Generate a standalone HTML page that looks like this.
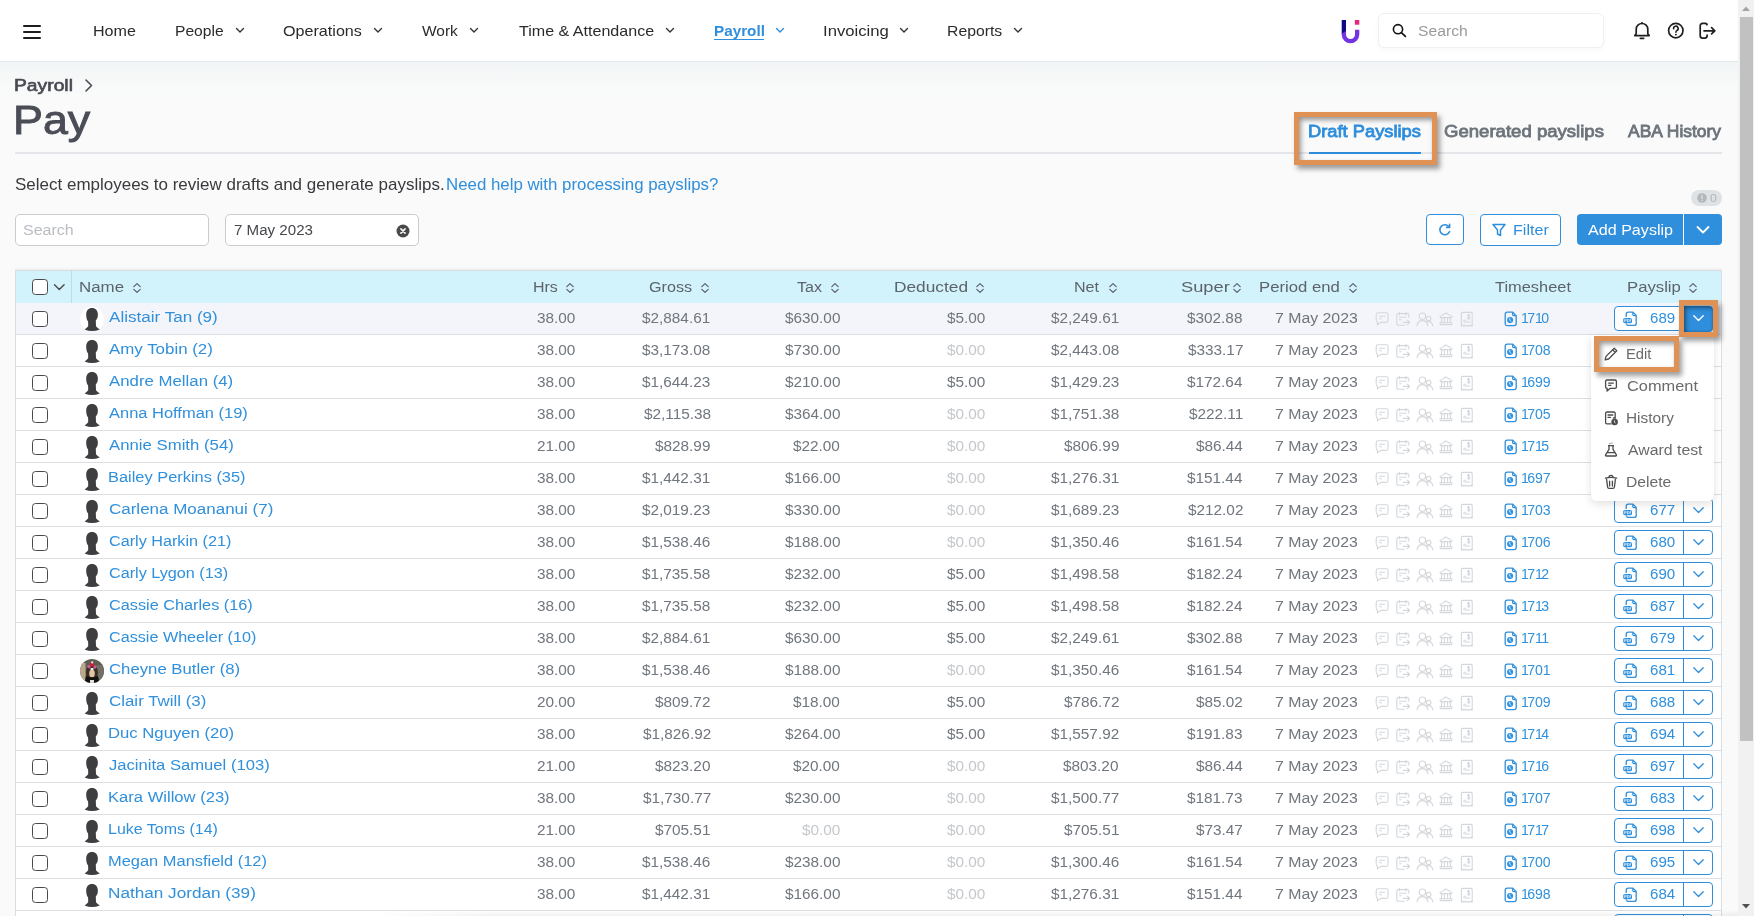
<!DOCTYPE html>
<html><head><meta charset="utf-8"><style>
html,body{margin:0;padding:0;width:1754px;height:916px;overflow:hidden;background:#fafafa}
body{position:relative;font-family:"Liberation Sans",sans-serif}
.t{position:absolute;white-space:nowrap;line-height:20px;transform-origin:0 0}
svg{overflow:visible}
</style></head><body>
<div style="position:absolute;left:0px;top:0px;width:1738px;height:916px;background:linear-gradient(180deg,#f2f5f6 62px,#f8f9f9 85px,#fafafa 110px,#fafafa 916px)"></div>
<div style="position:absolute;left:0px;top:0px;width:1738px;height:61px;background:#fff"></div>
<div style="position:absolute;left:0px;top:61px;width:1738px;height:1px;background:#e3eaee"></div>
<div style="position:absolute;left:23px;top:25px;width:18px;height:2px;background:#1c1c1e;border-radius:1px"></div>
<div style="position:absolute;left:23px;top:31px;width:18px;height:2px;background:#1c1c1e;border-radius:1px"></div>
<div style="position:absolute;left:23px;top:37px;width:18px;height:2px;background:#1c1c1e;border-radius:1px"></div>
<div class="t" style="left:93.21px;top:21.06px;font-size:15.12px;font-weight:normal;color:#2b2b2b;transform:scaleX(1.0652);">Home</div>
<div class="t" style="left:174.95px;top:21.06px;font-size:15.12px;font-weight:normal;color:#2b2b2b;transform:scaleX(1.0332);">People</div>
<svg style="position:absolute;left:235.3px;top:26px;" width="10" height="9" viewBox="0 0 10 9" fill="none"><path d="M1.5 2.5 L5 6 L8.5 2.5" stroke="#333" stroke-width="1.4" stroke-linecap="round" stroke-linejoin="round"/></svg>
<div class="t" style="left:283.47px;top:21.06px;font-size:15.12px;font-weight:normal;color:#2b2b2b;transform:scaleX(1.0673);">Operations</div>
<svg style="position:absolute;left:373.2px;top:26px;" width="10" height="9" viewBox="0 0 10 9" fill="none"><path d="M1.5 2.5 L5 6 L8.5 2.5" stroke="#333" stroke-width="1.4" stroke-linecap="round" stroke-linejoin="round"/></svg>
<div class="t" style="left:422.32px;top:21.06px;font-size:15.12px;font-weight:normal;color:#2b2b2b;transform:scaleX(1.0252);">Work</div>
<svg style="position:absolute;left:469px;top:26px;" width="10" height="9" viewBox="0 0 10 9" fill="none"><path d="M1.5 2.5 L5 6 L8.5 2.5" stroke="#333" stroke-width="1.4" stroke-linecap="round" stroke-linejoin="round"/></svg>
<div class="t" style="left:518.88px;top:21.06px;font-size:15.12px;font-weight:normal;color:#2b2b2b;transform:scaleX(1.0631);">Time &amp; Attendance</div>
<svg style="position:absolute;left:665px;top:26px;" width="10" height="9" viewBox="0 0 10 9" fill="none"><path d="M1.5 2.5 L5 6 L8.5 2.5" stroke="#333" stroke-width="1.4" stroke-linecap="round" stroke-linejoin="round"/></svg>
<div class="t" style="left:713.51px;top:20.76px;font-size:14.53px;font-weight:bold;color:#2f8fdc;transform:scaleX(1.0513);">Payroll</div>
<div style="position:absolute;left:714px;top:39px;width:50px;height:1.2px;background:#2f8fdc"></div>
<svg style="position:absolute;left:774.7px;top:26px;" width="10" height="9" viewBox="0 0 10 9" fill="none"><path d="M1.5 2.5 L5 6 L8.5 2.5" stroke="#2f8fdc" stroke-width="1.4" stroke-linecap="round" stroke-linejoin="round"/></svg>
<div class="t" style="left:823.20px;top:21.06px;font-size:15.12px;font-weight:normal;color:#2b2b2b;transform:scaleX(1.1049);">Invoicing</div>
<svg style="position:absolute;left:899px;top:26px;" width="10" height="9" viewBox="0 0 10 9" fill="none"><path d="M1.5 2.5 L5 6 L8.5 2.5" stroke="#333" stroke-width="1.4" stroke-linecap="round" stroke-linejoin="round"/></svg>
<div class="t" style="left:947.34px;top:21.06px;font-size:15.12px;font-weight:normal;color:#2b2b2b;transform:scaleX(1.0436);">Reports</div>
<svg style="position:absolute;left:1013px;top:26px;" width="10" height="9" viewBox="0 0 10 9" fill="none"><path d="M1.5 2.5 L5 6 L8.5 2.5" stroke="#333" stroke-width="1.4" stroke-linecap="round" stroke-linejoin="round"/></svg>
<svg style="position:absolute;left:1339px;top:18px;" width="24" height="28" viewBox="0 0 24 28" fill="none"><rect x="2.7" y="2" width="4.3" height="14" fill="#0d0b82"/><path d="M2.7 15.5 L2.7 16.5 A8.8 8.8 0 0 0 20.3 16.5 L20.3 11.8 L16 11.8 L16 16.5 A4.5 4.5 0 0 1 7 16.5 L7 13 Z" fill="#7433e0"/><rect x="15.8" y="2" width="4.5" height="4.7" fill="#e6287a"/></svg>
<div style="position:absolute;left:1377.5px;top:13.3px;width:226.9px;height:34.5px;box-sizing:border-box;border:1px solid #eef0f2;border-radius:6px;background:#fff;box-shadow:0 2px 6px rgba(0,0,0,0.03)"></div>
<svg style="position:absolute;left:1391px;top:22px;" width="17" height="17" viewBox="0 0 17 17" fill="none"><circle cx="7" cy="7.2" r="4.6" stroke="#111" stroke-width="1.6"/><path d="M10.4 10.6 L14.4 14.4" stroke="#111" stroke-width="1.7" stroke-linecap="round"/></svg>
<div class="t" style="left:1417.79px;top:20.86px;font-size:14.83px;font-weight:normal;color:#9a9a9a;transform:scaleX(1.0576);">Search</div>
<svg style="position:absolute;left:1632px;top:20px;" width="20" height="21" viewBox="0 0 20 21" fill="none"><path d="M4.2 13.8 L4.2 9.3 A5.8 5.8 0 0 1 15.8 9.3 L15.8 13.8 L17.2 15.6 L2.8 15.6 Z" stroke="#1f1f1f" stroke-width="1.7" stroke-linejoin="round"/><path d="M8.3 18.4 L11.7 18.4" stroke="#1f1f1f" stroke-width="1.6" stroke-linecap="round"/><circle cx="10" cy="3.2" r="1.1" fill="#1f1f1f"/></svg>
<svg style="position:absolute;left:1666px;top:21px;" width="20" height="20" viewBox="0 0 20 20" fill="none"><circle cx="9.8" cy="9.6" r="7.2" stroke="#1f1f1f" stroke-width="1.7"/><path d="M7.6 7.8 A2.3 2.3 0 1 1 10.8 9.6 C10 10 9.9 10.5 9.9 11.3" stroke="#1f1f1f" stroke-width="1.6" stroke-linecap="round" fill="none"/><circle cx="9.9" cy="13.6" r="0.95" fill="#1f1f1f"/></svg>
<svg style="position:absolute;left:1698px;top:21px;" width="20" height="20" viewBox="0 0 20 20" fill="none"><path d="M8.8 3.6 L8 2.4 L4.5 2.4 A2.3 2.3 0 0 0 2.2 4.7 L2.2 14.8 A2.3 2.3 0 0 0 4.5 17.1 L6.8 17.1 A2.3 2.3 0 0 0 9.1 14.8 L9.1 14" stroke="#1f1f1f" stroke-width="1.7" stroke-linecap="round" stroke-linejoin="round"/><path d="M8.8 4.2 L8.8 2.4" stroke="#1f1f1f" stroke-width="1.7"/><path d="M6 9.8 L16.8 9.8 M13.6 6.7 L16.8 9.8 L13.6 12.9" stroke="#1f1f1f" stroke-width="1.7" stroke-linecap="round" stroke-linejoin="round"/></svg>
<div class="t" style="left:13.86px;top:75.76px;font-size:15.99px;font-weight:normal;color:#474a51;transform:scaleX(1.2058);-webkit-text-stroke:0.6px #474a51;">Payroll</div>
<svg style="position:absolute;left:83px;top:78px;" width="12" height="15" viewBox="0 0 12 15" fill="none"><path d="M3 2 L8.5 7.5 L3 13" stroke="#4a4d54" stroke-width="1.6" stroke-linecap="round" stroke-linejoin="round"/></svg>
<div class="t" style="left:13.02px;top:110.00px;font-size:41.57px;font-weight:normal;color:#4a4d56;transform:scaleX(1.0778);-webkit-text-stroke:0.9px #4a4d56;">Pay</div>
<div style="position:absolute;left:15px;top:152px;width:1707px;height:1.5px;background:#e4e6e9"></div>
<div class="t" style="left:1307.93px;top:122.41px;font-size:17.01px;font-weight:normal;color:#2d8ddb;transform:scaleX(1.0770);-webkit-text-stroke:0.8px #2d8ddb;">Draft Payslips</div>
<div style="position:absolute;left:1309px;top:152px;width:112px;height:2px;background:#2d8ddb"></div>
<div class="t" style="left:1443.67px;top:122.41px;font-size:17.01px;font-weight:normal;color:#6c737b;transform:scaleX(1.0920);-webkit-text-stroke:0.8px #6c737b;">Generated payslips</div>
<div class="t" style="left:1628.40px;top:122.41px;font-size:17.01px;font-weight:normal;color:#6c737b;transform:scaleX(1.0262);-webkit-text-stroke:0.8px #6c737b;">ABA History</div>
<div style="position:absolute;left:1294px;top:112px;width:143px;height:53px;box-sizing:border-box;border:5px solid #e09254;box-shadow:3px 4px 5px rgba(0,0,0,0.38), inset 2px 3px 5px rgba(0,0,0,0.40)"></div>
<div class="t" style="left:14.84px;top:174.76px;font-size:15.99px;font-weight:normal;color:#383a3d;transform:scaleX(1.0627);">Select employees to review drafts and generate payslips.</div>
<div class="t" style="left:446.15px;top:174.76px;font-size:15.99px;font-weight:normal;color:#2f8fdc;transform:scaleX(1.0535);">Need help with processing payslips?</div>
<div style="position:absolute;left:15.3px;top:214.4px;width:193.4px;height:31.4px;box-sizing:border-box;border:1px solid #c9ccd1;border-radius:5px;background:#fff"></div>
<div class="t" style="left:23.28px;top:219.96px;font-size:14.53px;font-weight:normal;color:#b9bcc1;transform:scaleX(1.1035);">Search</div>
<div style="position:absolute;left:225.3px;top:214.4px;width:193.4px;height:31.4px;box-sizing:border-box;border:1px solid #c9ccd1;border-radius:5px;background:#fff"></div>
<div class="t" style="left:233.84px;top:219.96px;font-size:14.53px;font-weight:normal;color:#45484d;transform:scaleX(1.0410);">7 May 2023</div>
<svg style="position:absolute;left:396px;top:224px;" width="14" height="14" viewBox="0 0 14 14" fill="none"><circle cx="7" cy="7" r="6.5" fill="#4a4a4a"/><path d="M4.9 4.9 L9.1 9.1 M9.1 4.9 L4.9 9.1" stroke="#fff" stroke-width="1.5" stroke-linecap="round"/></svg>
<div style="position:absolute;left:1426px;top:214px;width:38px;height:31px;box-sizing:border-box;border:1.3px solid #2f8fdc;border-radius:4px;background:#fff"></div>
<svg style="position:absolute;left:1437px;top:222px;" width="16" height="16" viewBox="0 0 16 16" fill="none"><path d="M12.2 5.2 A5 5 0 1 0 12.6 9.5" stroke="#2f8fdc" stroke-width="1.6" stroke-linecap="round" fill="none"/><path d="M9.6 5.4 L12.6 5.4 L12.6 2.4" stroke="#2f8fdc" stroke-width="1.6" stroke-linecap="round" stroke-linejoin="round" fill="none"/></svg>
<div style="position:absolute;left:1480px;top:214px;width:81px;height:31.5px;box-sizing:border-box;border:1.3px solid #2f8fdc;border-radius:4px;background:#fff"></div>
<svg style="position:absolute;left:1491px;top:222px;" width="16" height="16" viewBox="0 0 16 16" fill="none"><path d="M2 2.5 L14 2.5 L9.5 8 L9.5 13.5 L6.5 12 L6.5 8 Z" stroke="#2f8fdc" stroke-width="1.5" stroke-linejoin="round" fill="none"/></svg>
<div class="t" style="left:1513.41px;top:220.36px;font-size:14.53px;font-weight:normal;color:#2f8fdc;transform:scaleX(1.1105);">Filter</div>
<div style="position:absolute;left:1577px;top:214px;width:145px;height:31px;background:#2f8fdc;border-radius:4px"></div>
<div style="position:absolute;left:1683px;top:214px;width:1.2px;height:31px;background:#fff"></div>
<div class="t" style="left:1588.00px;top:219.66px;font-size:15.41px;font-weight:normal;color:#fff;transform:scaleX(1.0454);">Add Payslip</div>
<svg style="position:absolute;left:1695px;top:223px;" width="16" height="14" viewBox="0 0 16 14" fill="none"><path d="M2.5 4 L8 9.5 L13.5 4" stroke="#fff" stroke-width="1.8" stroke-linecap="round" stroke-linejoin="round" fill="none"/></svg>
<div style="position:absolute;left:1691px;top:190px;width:31px;height:15.5px;background:#dfe2e5;border-radius:8px"></div>
<svg style="position:absolute;left:1696px;top:192px;" width="12" height="12" viewBox="0 0 12 12" fill="none"><circle cx="6" cy="6" r="4.8" fill="#b3b7bb"/><path d="M6 3.6 L6 6.6" stroke="#dfe2e5" stroke-width="1.3" stroke-linecap="round"/><circle cx="6" cy="8.4" r="0.7" fill="#dfe2e5"/></svg>
<div class="t" style="left:1710.11px;top:187.57px;font-size:11.34px;font-weight:normal;color:#b0b4b8;transform:scaleX(1.0842);">0</div>
<div style="position:absolute;left:15px;top:270px;width:1707px;height:33px;background:#d3f3fc"></div>
<div style="position:absolute;left:15px;top:267px;width:1707px;height:3px;background:linear-gradient(180deg,rgba(0,0,0,0),rgba(0,0,0,0.04))"></div>
<div style="position:absolute;left:15px;top:270px;width:1707px;height:1px;background:#d6dcde"></div>
<div style="position:absolute;left:15px;top:270px;width:1px;height:646px;background:#dadde1"></div>
<div style="position:absolute;left:1721px;top:270px;width:1px;height:646px;background:#dadde1"></div>
<div style="position:absolute;left:71px;top:270px;width:1px;height:33px;background:#bfdde6"></div>
<div style="position:absolute;left:32px;top:279px;width:16px;height:16px;box-sizing:border-box;border:1.5px solid #4a4a4a;border-radius:3.5px;background:#fff"></div>
<svg style="position:absolute;left:53px;top:283px;" width="13" height="9" viewBox="0 0 13 9" fill="none"><path d="M1.5 1.8 L6.3 6.6 L11.1 1.8" stroke="#4a4a4a" stroke-width="1.4" stroke-linecap="round" stroke-linejoin="round"/></svg>
<div class="t" style="left:79.25px;top:277.06px;font-size:14.24px;font-weight:normal;color:#5d636a;transform:scaleX(1.1857);">Name</div>
<svg style="position:absolute;left:132px;top:282px;" width="10" height="12" viewBox="0 0 10 12" fill="none"><path d="M1.8 4.6 L5 1.6 L8.2 4.6 M1.8 7.4 L5 10.4 L8.2 7.4" stroke="#5d636a" stroke-width="1.3" stroke-linecap="round" stroke-linejoin="round"/></svg>
<div class="t" style="left:532.52px;top:277.06px;font-size:14.24px;font-weight:normal;color:#5d636a;transform:scaleX(1.1213);">Hrs</div>
<svg style="position:absolute;left:565px;top:282px;" width="10" height="12" viewBox="0 0 10 12" fill="none"><path d="M1.8 4.6 L5 1.6 L8.2 4.6 M1.8 7.4 L5 10.4 L8.2 7.4" stroke="#5d636a" stroke-width="1.3" stroke-linecap="round" stroke-linejoin="round"/></svg>
<div class="t" style="left:649.49px;top:277.06px;font-size:14.24px;font-weight:normal;color:#5d636a;transform:scaleX(1.1347);">Gross</div>
<svg style="position:absolute;left:700px;top:282px;" width="10" height="12" viewBox="0 0 10 12" fill="none"><path d="M1.8 4.6 L5 1.6 L8.2 4.6 M1.8 7.4 L5 10.4 L8.2 7.4" stroke="#5d636a" stroke-width="1.3" stroke-linecap="round" stroke-linejoin="round"/></svg>
<div class="t" style="left:796.68px;top:277.06px;font-size:14.24px;font-weight:normal;color:#5d636a;transform:scaleX(1.1279);">Tax</div>
<svg style="position:absolute;left:830px;top:282px;" width="10" height="12" viewBox="0 0 10 12" fill="none"><path d="M1.8 4.6 L5 1.6 L8.2 4.6 M1.8 7.4 L5 10.4 L8.2 7.4" stroke="#5d636a" stroke-width="1.3" stroke-linecap="round" stroke-linejoin="round"/></svg>
<div class="t" style="left:893.61px;top:277.06px;font-size:14.24px;font-weight:normal;color:#5d636a;transform:scaleX(1.2156);">Deducted</div>
<svg style="position:absolute;left:975px;top:282px;" width="10" height="12" viewBox="0 0 10 12" fill="none"><path d="M1.8 4.6 L5 1.6 L8.2 4.6 M1.8 7.4 L5 10.4 L8.2 7.4" stroke="#5d636a" stroke-width="1.3" stroke-linecap="round" stroke-linejoin="round"/></svg>
<div class="t" style="left:1074.12px;top:277.06px;font-size:14.24px;font-weight:normal;color:#5d636a;transform:scaleX(1.1271);">Net</div>
<svg style="position:absolute;left:1108px;top:282px;" width="10" height="12" viewBox="0 0 10 12" fill="none"><path d="M1.8 4.6 L5 1.6 L8.2 4.6 M1.8 7.4 L5 10.4 L8.2 7.4" stroke="#5d636a" stroke-width="1.3" stroke-linecap="round" stroke-linejoin="round"/></svg>
<div class="t" style="left:1181.18px;top:277.06px;font-size:14.24px;font-weight:normal;color:#5d636a;transform:scaleX(1.2828);">Super</div>
<svg style="position:absolute;left:1232px;top:282px;" width="10" height="12" viewBox="0 0 10 12" fill="none"><path d="M1.8 4.6 L5 1.6 L8.2 4.6 M1.8 7.4 L5 10.4 L8.2 7.4" stroke="#5d636a" stroke-width="1.3" stroke-linecap="round" stroke-linejoin="round"/></svg>
<div class="t" style="left:1259.16px;top:277.06px;font-size:14.24px;font-weight:normal;color:#5d636a;transform:scaleX(1.1751);">Period end</div>
<svg style="position:absolute;left:1347.5px;top:282px;" width="10" height="12" viewBox="0 0 10 12" fill="none"><path d="M1.8 4.6 L5 1.6 L8.2 4.6 M1.8 7.4 L5 10.4 L8.2 7.4" stroke="#5d636a" stroke-width="1.3" stroke-linecap="round" stroke-linejoin="round"/></svg>
<div class="t" style="left:1494.67px;top:277.06px;font-size:14.24px;font-weight:normal;color:#5d636a;transform:scaleX(1.1525);">Timesheet</div>
<div class="t" style="left:1626.96px;top:277.06px;font-size:14.24px;font-weight:normal;color:#5d636a;transform:scaleX(1.1735);">Payslip</div>
<svg style="position:absolute;left:1688px;top:282px;" width="10" height="12" viewBox="0 0 10 12" fill="none"><path d="M1.8 4.6 L5 1.6 L8.2 4.6 M1.8 7.4 L5 10.4 L8.2 7.4" stroke="#5d636a" stroke-width="1.3" stroke-linecap="round" stroke-linejoin="round"/></svg>
<div style="position:absolute;left:16px;top:303px;width:1705px;height:31px;background:#f4f5fa"></div>
<div style="position:absolute;left:16px;top:334px;width:1705px;height:1px;background:#dcdfe3"></div>
<div style="position:absolute;left:32px;top:311.3px;width:16px;height:16px;box-sizing:border-box;border:1.5px solid #4a4a4a;border-radius:3.5px;background:#fff"></div>
<div style="position:absolute;left:80px;top:307px;width:24px;height:24px;background:#fff;border-radius:50%"></div>
<svg style="position:absolute;left:80px;top:307px;" width="24" height="24" viewBox="0 0 24 24" fill="none"><path fill="#3e3e40" d="M12 1 C15.6 1 17.9 3.6 17.9 7.6 C17.9 10.8 16.8 12.6 15.8 13.6 L16 19.2 Q17.6 21.2 19.8 22.4 Q12 25.6 4.6 22.4 Q6.6 21.2 8.2 19.2 L8.1 14.4 C6.8 13 6.2 10.8 6.2 7.8 C6.2 3.6 8.4 1 12 1 Z"/></svg>
<div class="t" style="left:109.40px;top:306.91px;font-size:14.68px;font-weight:normal;color:#3090dc;transform:scaleX(1.1637);">Alistair Tan (9)</div>
<div class="t" style="left:537.18px;top:308.21px;font-size:14.68px;font-weight:normal;color:#70767d;transform:scaleX(1.0450);">38.00</div>
<div class="t" style="left:642.42px;top:308.21px;font-size:14.68px;font-weight:normal;color:#70767d;transform:scaleX(1.0450);">$2,884.61</div>
<div class="t" style="left:784.78px;top:308.21px;font-size:14.68px;font-weight:normal;color:#70767d;transform:scaleX(1.0450);">$630.00</div>
<div class="t" style="left:946.98px;top:308.21px;font-size:14.68px;font-weight:normal;color:#70767d;transform:scaleX(1.0450);">$5.00</div>
<div class="t" style="left:1050.72px;top:308.21px;font-size:14.68px;font-weight:normal;color:#70767d;transform:scaleX(1.0450);">$2,249.61</div>
<div class="t" style="left:1187.36px;top:308.21px;font-size:14.68px;font-weight:normal;color:#70767d;transform:scaleX(1.0450);">$302.88</div>
<div class="t" style="left:1275.01px;top:308.21px;font-size:14.68px;font-weight:normal;color:#70767d;transform:scaleX(1.0798);">7 May 2023</div>
<svg style="position:absolute;left:1374px;top:311px;" width="16" height="16" viewBox="0 0 16 16" fill="none"><path d="M2.2 3.6 Q2.2 1.8 4 1.8 L12.2 1.8 Q14 1.8 14 3.6 L14 9.6 Q14 11.4 12.2 11.4 L6.8 11.4 L3.2 14 L3.6 11.2 Q2.2 10.8 2.2 9.6 Z M5 5.2 L11.2 5.2 M5 7.8 L8 7.8" stroke="#d3d7dc" stroke-width="1.1" stroke-linejoin="round"/></svg>
<svg style="position:absolute;left:1395px;top:311px;" width="16" height="16" viewBox="0 0 16 16" fill="none"><path d="M9.6 14.2 L3.4 14.2 Q1.8 14.2 1.8 12.6 L1.8 4.2 Q1.8 2.6 3.4 2.6 L12.2 2.6 Q13.8 2.6 13.8 4.2 L13.8 6.2 M4.6 1.2 L4.6 3.8 M11 1.2 L11 3.8 M4.4 6.2 L11.2 6.2 M4.4 8.8 L6.2 8.8 M8.4 11.4 L14.4 11.4 M12.4 9.2 L14.6 11.4 L12.4 13.6" stroke="#d3d7dc" stroke-width="1.1" stroke-linecap="round" stroke-linejoin="round"/></svg>
<svg style="position:absolute;left:1416px;top:311px;" width="18" height="16" viewBox="0 0 18 16" fill="none"><circle cx="6.4" cy="5.2" r="3.2" stroke="#d3d7dc" stroke-width="1.1"/><circle cx="12.6" cy="7.6" r="2.3" stroke="#d3d7dc" stroke-width="1.1"/><path d="M1 14.8 Q1.6 9.6 6.4 9.6 Q11 9.6 11.8 14.8 M10.4 11.2 Q11.4 10.6 12.6 10.6 Q16.2 10.6 16.8 14.8" stroke="#d3d7dc" stroke-width="1.1" stroke-linecap="round"/></svg>
<svg style="position:absolute;left:1438px;top:311px;" width="16" height="16" viewBox="0 0 16 16" fill="none"><path d="M2 5.6 L8 2 L14 5.6 Q14 6.6 13 6.6 L3 6.6 Q2 6.6 2 5.6 Z M3.6 6.8 L3.6 11.4 M6.4 6.8 L6.4 11.4 M9.6 6.8 L9.6 11.4 M12.4 6.8 L12.4 11.4 M2.4 11.8 L13.6 11.8 Q14 11.8 14 12.6 Q14 13.6 13.2 13.6 L2.8 13.6 Q2 13.6 2 12.6 Q2 11.8 2.4 11.8 Z" stroke="#d3d7dc" stroke-width="1.1" stroke-linejoin="round"/></svg>
<svg style="position:absolute;left:1459px;top:311px;" width="16" height="17" viewBox="0 0 16 17" fill="none"><path d="M2.4 2.6 Q2.4 1.4 3.6 1.4 L12 1.4 Q13.2 1.4 13.2 2.6 L13.2 15.2 L11.8 14.2 L10.4 15.4 L9 14.2 L7.6 15.4 L6.2 14.2 L4.8 15.4 L3.6 14.2 L2.4 15.2 Z M4.8 11 L10.8 11 M4.8 9.2 L6.8 9.2 M10.6 4 Q9 3.4 8.6 4.6 Q8.6 5.6 9.8 5.8 Q11 6.1 10.8 7.2 Q10.4 8.2 8.6 7.6 M9.7 3 L9.7 8.6" stroke="#d3d7dc" stroke-width="1.1" stroke-linecap="round" stroke-linejoin="round"/></svg>
<svg style="position:absolute;left:1504px;top:311px;" width="14" height="16" viewBox="0 0 14 16" fill="none"><path d="M3.2 1.2 L8.8 1.2 L12.2 4.6 L12.2 12.6 Q12.2 14.6 10.2 14.6 L3.2 14.6 Q1.2 14.6 1.2 12.6 L1.2 3.2 Q1.2 1.2 3.2 1.2 Z" stroke="#3090dc" stroke-width="1.3" stroke-linejoin="round"/><path d="M8.6 1.4 L8.6 3.6 Q8.6 4.6 9.6 4.6 L12 4.6" stroke="#3090dc" stroke-width="1.2"/><circle cx="6.1" cy="9.1" r="3.05" fill="#3090dc"/><path d="M5.8 7.4 L5.8 9.3 L7 10.3" stroke="#fff" stroke-width="0.8" stroke-linecap="round"/></svg>
<div class="t" style="left:1520.94px;top:308.21px;font-size:14.39px;font-weight:normal;color:#3090dc;transform:scaleX(0.9800);"><span style="letter-spacing:-1.7px">1</span>7<span style="letter-spacing:-1.7px">1</span>0</div>
<div style="position:absolute;left:1614px;top:306px;width:72px;height:25px;box-sizing:border-box;border:1.3px solid #2f8fdc;border-radius:4px 0 0 4px;background:#fff"></div>
<div style="position:absolute;left:1684px;top:306px;width:29px;height:25.5px;background:#2f8fdc;border-radius:0 4px 4px 0;box-shadow:inset 0 0 3px rgba(0,0,0,0.25)"></div>
<svg style="position:absolute;left:1692px;top:314px;" width="13" height="9" viewBox="0 0 13 9" fill="none"><path d="M1.8 1.8 L6.5 6.5 L11.2 1.8" stroke="#fff" stroke-width="1.4" stroke-linecap="round" stroke-linejoin="round"/></svg>
<svg style="position:absolute;left:1622px;top:310.5px;" width="16" height="16" viewBox="0 0 16 16" fill="none"><path d="M4.2 6 L4.2 3.2 Q4.2 1.2 6.2 1.2 L11 1.2 L14.2 4.4 L14.2 12.4 Q14.2 14.4 12.2 14.4 L6.2 14.4 Q4.6 14.4 4.3 12.6" stroke="#2f8fdc" stroke-width="1.3" stroke-linejoin="round"/><path d="M10.8 1.4 L10.8 3.4 Q10.8 4.6 12 4.6 L14 4.6" stroke="#2f8fdc" stroke-width="1.2"/><rect x="1.2" y="7" width="8.8" height="5.2" rx="1.6" fill="#2f8fdc"/><path d="M2.6 11 L2.6 8.3 L3.8 8.3 Q4.5 8.3 4.5 9.1 Q4.5 9.8 3.8 9.8 L2.6 9.8 M5.5 11 L5.5 8.3 Q7.1 8.3 7.1 9.65 Q7.1 11 5.5 11 M8 11 L8 8.3 L9.3 8.3 M8 9.6 L9 9.6" stroke="#fff" stroke-width="0.6"/></svg>
<div class="t" style="left:1649.72px;top:308.01px;font-size:14.39px;font-weight:normal;color:#2f8fdc;transform:scaleX(1.0500);">689</div>
<div style="position:absolute;left:16px;top:335px;width:1705px;height:31px;background:#fff"></div>
<div style="position:absolute;left:16px;top:366px;width:1705px;height:1px;background:#dcdfe3"></div>
<div style="position:absolute;left:32px;top:343.3px;width:16px;height:16px;box-sizing:border-box;border:1.5px solid #4a4a4a;border-radius:3.5px;background:#fff"></div>
<svg style="position:absolute;left:80px;top:339px;" width="24" height="24" viewBox="0 0 24 24" fill="none"><path fill="#3e3e40" d="M12 1 C15.6 1 17.9 3.6 17.9 7.6 C17.9 10.8 16.8 12.6 15.8 13.6 L16 19.2 Q17.6 21.2 19.8 22.4 Q12 25.6 4.6 22.4 Q6.6 21.2 8.2 19.2 L8.1 14.4 C6.8 13 6.2 10.8 6.2 7.8 C6.2 3.6 8.4 1 12 1 Z"/></svg>
<div class="t" style="left:109.40px;top:338.91px;font-size:14.68px;font-weight:normal;color:#3090dc;transform:scaleX(1.1510);">Amy Tobin (2)</div>
<div class="t" style="left:537.18px;top:340.21px;font-size:14.68px;font-weight:normal;color:#70767d;transform:scaleX(1.0450);">38.00</div>
<div class="t" style="left:642.35px;top:340.21px;font-size:14.68px;font-weight:normal;color:#70767d;transform:scaleX(1.0450);">$3,173.08</div>
<div class="t" style="left:784.78px;top:340.21px;font-size:14.68px;font-weight:normal;color:#70767d;transform:scaleX(1.0450);">$730.00</div>
<div class="t" style="left:946.98px;top:340.21px;font-size:14.68px;font-weight:normal;color:#c4c8cc;transform:scaleX(1.0450);">$0.00</div>
<div class="t" style="left:1050.65px;top:340.21px;font-size:14.68px;font-weight:normal;color:#70767d;transform:scaleX(1.0450);">$2,443.08</div>
<div class="t" style="left:1187.51px;top:340.21px;font-size:14.68px;font-weight:normal;color:#70767d;transform:scaleX(1.0450);">$333.17</div>
<div class="t" style="left:1275.01px;top:340.21px;font-size:14.68px;font-weight:normal;color:#70767d;transform:scaleX(1.0798);">7 May 2023</div>
<svg style="position:absolute;left:1374px;top:343px;" width="16" height="16" viewBox="0 0 16 16" fill="none"><path d="M2.2 3.6 Q2.2 1.8 4 1.8 L12.2 1.8 Q14 1.8 14 3.6 L14 9.6 Q14 11.4 12.2 11.4 L6.8 11.4 L3.2 14 L3.6 11.2 Q2.2 10.8 2.2 9.6 Z M5 5.2 L11.2 5.2 M5 7.8 L8 7.8" stroke="#d3d7dc" stroke-width="1.1" stroke-linejoin="round"/></svg>
<svg style="position:absolute;left:1395px;top:343px;" width="16" height="16" viewBox="0 0 16 16" fill="none"><path d="M9.6 14.2 L3.4 14.2 Q1.8 14.2 1.8 12.6 L1.8 4.2 Q1.8 2.6 3.4 2.6 L12.2 2.6 Q13.8 2.6 13.8 4.2 L13.8 6.2 M4.6 1.2 L4.6 3.8 M11 1.2 L11 3.8 M4.4 6.2 L11.2 6.2 M4.4 8.8 L6.2 8.8 M8.4 11.4 L14.4 11.4 M12.4 9.2 L14.6 11.4 L12.4 13.6" stroke="#d3d7dc" stroke-width="1.1" stroke-linecap="round" stroke-linejoin="round"/></svg>
<svg style="position:absolute;left:1416px;top:343px;" width="18" height="16" viewBox="0 0 18 16" fill="none"><circle cx="6.4" cy="5.2" r="3.2" stroke="#d3d7dc" stroke-width="1.1"/><circle cx="12.6" cy="7.6" r="2.3" stroke="#d3d7dc" stroke-width="1.1"/><path d="M1 14.8 Q1.6 9.6 6.4 9.6 Q11 9.6 11.8 14.8 M10.4 11.2 Q11.4 10.6 12.6 10.6 Q16.2 10.6 16.8 14.8" stroke="#d3d7dc" stroke-width="1.1" stroke-linecap="round"/></svg>
<svg style="position:absolute;left:1438px;top:343px;" width="16" height="16" viewBox="0 0 16 16" fill="none"><path d="M2 5.6 L8 2 L14 5.6 Q14 6.6 13 6.6 L3 6.6 Q2 6.6 2 5.6 Z M3.6 6.8 L3.6 11.4 M6.4 6.8 L6.4 11.4 M9.6 6.8 L9.6 11.4 M12.4 6.8 L12.4 11.4 M2.4 11.8 L13.6 11.8 Q14 11.8 14 12.6 Q14 13.6 13.2 13.6 L2.8 13.6 Q2 13.6 2 12.6 Q2 11.8 2.4 11.8 Z" stroke="#d3d7dc" stroke-width="1.1" stroke-linejoin="round"/></svg>
<svg style="position:absolute;left:1459px;top:343px;" width="16" height="17" viewBox="0 0 16 17" fill="none"><path d="M2.4 2.6 Q2.4 1.4 3.6 1.4 L12 1.4 Q13.2 1.4 13.2 2.6 L13.2 15.2 L11.8 14.2 L10.4 15.4 L9 14.2 L7.6 15.4 L6.2 14.2 L4.8 15.4 L3.6 14.2 L2.4 15.2 Z M4.8 11 L10.8 11 M4.8 9.2 L6.8 9.2 M10.6 4 Q9 3.4 8.6 4.6 Q8.6 5.6 9.8 5.8 Q11 6.1 10.8 7.2 Q10.4 8.2 8.6 7.6 M9.7 3 L9.7 8.6" stroke="#d3d7dc" stroke-width="1.1" stroke-linecap="round" stroke-linejoin="round"/></svg>
<svg style="position:absolute;left:1504px;top:343px;" width="14" height="16" viewBox="0 0 14 16" fill="none"><path d="M3.2 1.2 L8.8 1.2 L12.2 4.6 L12.2 12.6 Q12.2 14.6 10.2 14.6 L3.2 14.6 Q1.2 14.6 1.2 12.6 L1.2 3.2 Q1.2 1.2 3.2 1.2 Z" stroke="#3090dc" stroke-width="1.3" stroke-linejoin="round"/><path d="M8.6 1.4 L8.6 3.6 Q8.6 4.6 9.6 4.6 L12 4.6" stroke="#3090dc" stroke-width="1.2"/><circle cx="6.1" cy="9.1" r="3.05" fill="#3090dc"/><path d="M5.8 7.4 L5.8 9.3 L7 10.3" stroke="#fff" stroke-width="0.8" stroke-linecap="round"/></svg>
<div class="t" style="left:1520.94px;top:340.21px;font-size:14.39px;font-weight:normal;color:#3090dc;transform:scaleX(0.9800);"><span style="letter-spacing:-1.7px">1</span>708</div>
<div style="position:absolute;left:1614px;top:338px;width:99px;height:25px;box-sizing:border-box;border:1.2px solid #2f8fdc;border-radius:4px;background:#fff"></div>
<div style="position:absolute;left:1683px;top:338px;width:1.2px;height:25px;background:#2f8fdc"></div>
<svg style="position:absolute;left:1692px;top:346px;" width="13" height="9" viewBox="0 0 13 9" fill="none"><path d="M1.8 1.8 L6.5 6.5 L11.2 1.8" stroke="#2f8fdc" stroke-width="1.3" stroke-linecap="round" stroke-linejoin="round"/></svg>
<svg style="position:absolute;left:1622px;top:342.5px;" width="16" height="16" viewBox="0 0 16 16" fill="none"><path d="M4.2 6 L4.2 3.2 Q4.2 1.2 6.2 1.2 L11 1.2 L14.2 4.4 L14.2 12.4 Q14.2 14.4 12.2 14.4 L6.2 14.4 Q4.6 14.4 4.3 12.6" stroke="#2f8fdc" stroke-width="1.3" stroke-linejoin="round"/><path d="M10.8 1.4 L10.8 3.4 Q10.8 4.6 12 4.6 L14 4.6" stroke="#2f8fdc" stroke-width="1.2"/><rect x="1.2" y="7" width="8.8" height="5.2" rx="1.6" fill="#2f8fdc"/><path d="M2.6 11 L2.6 8.3 L3.8 8.3 Q4.5 8.3 4.5 9.1 Q4.5 9.8 3.8 9.8 L2.6 9.8 M5.5 11 L5.5 8.3 Q7.1 8.3 7.1 9.65 Q7.1 11 5.5 11 M8 11 L8 8.3 L9.3 8.3 M8 9.6 L9 9.6" stroke="#fff" stroke-width="0.6"/></svg>
<div class="t" style="left:1649.65px;top:340.01px;font-size:14.39px;font-weight:normal;color:#2f8fdc;transform:scaleX(1.0500);">686</div>
<div style="position:absolute;left:16px;top:367px;width:1705px;height:31px;background:#fff"></div>
<div style="position:absolute;left:16px;top:398px;width:1705px;height:1px;background:#dcdfe3"></div>
<div style="position:absolute;left:32px;top:375.3px;width:16px;height:16px;box-sizing:border-box;border:1.5px solid #4a4a4a;border-radius:3.5px;background:#fff"></div>
<svg style="position:absolute;left:80px;top:371px;" width="24" height="24" viewBox="0 0 24 24" fill="none"><path fill="#3e3e40" d="M12 1 C15.6 1 17.9 3.6 17.9 7.6 C17.9 10.8 16.8 12.6 15.8 13.6 L16 19.2 Q17.6 21.2 19.8 22.4 Q12 25.6 4.6 22.4 Q6.6 21.2 8.2 19.2 L8.1 14.4 C6.8 13 6.2 10.8 6.2 7.8 C6.2 3.6 8.4 1 12 1 Z"/></svg>
<div class="t" style="left:109.40px;top:370.91px;font-size:14.68px;font-weight:normal;color:#3090dc;transform:scaleX(1.1449);">Andre Mellan (4)</div>
<div class="t" style="left:537.18px;top:372.21px;font-size:14.68px;font-weight:normal;color:#70767d;transform:scaleX(1.0450);">38.00</div>
<div class="t" style="left:642.35px;top:372.21px;font-size:14.68px;font-weight:normal;color:#70767d;transform:scaleX(1.0450);">$1,644.23</div>
<div class="t" style="left:784.78px;top:372.21px;font-size:14.68px;font-weight:normal;color:#70767d;transform:scaleX(1.0450);">$210.00</div>
<div class="t" style="left:946.98px;top:372.21px;font-size:14.68px;font-weight:normal;color:#70767d;transform:scaleX(1.0450);">$5.00</div>
<div class="t" style="left:1050.65px;top:372.21px;font-size:14.68px;font-weight:normal;color:#70767d;transform:scaleX(1.0450);">$1,429.23</div>
<div class="t" style="left:1187.20px;top:372.21px;font-size:14.68px;font-weight:normal;color:#70767d;transform:scaleX(1.0450);">$172.64</div>
<div class="t" style="left:1275.01px;top:372.21px;font-size:14.68px;font-weight:normal;color:#70767d;transform:scaleX(1.0798);">7 May 2023</div>
<svg style="position:absolute;left:1374px;top:375px;" width="16" height="16" viewBox="0 0 16 16" fill="none"><path d="M2.2 3.6 Q2.2 1.8 4 1.8 L12.2 1.8 Q14 1.8 14 3.6 L14 9.6 Q14 11.4 12.2 11.4 L6.8 11.4 L3.2 14 L3.6 11.2 Q2.2 10.8 2.2 9.6 Z M5 5.2 L11.2 5.2 M5 7.8 L8 7.8" stroke="#d3d7dc" stroke-width="1.1" stroke-linejoin="round"/></svg>
<svg style="position:absolute;left:1395px;top:375px;" width="16" height="16" viewBox="0 0 16 16" fill="none"><path d="M9.6 14.2 L3.4 14.2 Q1.8 14.2 1.8 12.6 L1.8 4.2 Q1.8 2.6 3.4 2.6 L12.2 2.6 Q13.8 2.6 13.8 4.2 L13.8 6.2 M4.6 1.2 L4.6 3.8 M11 1.2 L11 3.8 M4.4 6.2 L11.2 6.2 M4.4 8.8 L6.2 8.8 M8.4 11.4 L14.4 11.4 M12.4 9.2 L14.6 11.4 L12.4 13.6" stroke="#d3d7dc" stroke-width="1.1" stroke-linecap="round" stroke-linejoin="round"/></svg>
<svg style="position:absolute;left:1416px;top:375px;" width="18" height="16" viewBox="0 0 18 16" fill="none"><circle cx="6.4" cy="5.2" r="3.2" stroke="#d3d7dc" stroke-width="1.1"/><circle cx="12.6" cy="7.6" r="2.3" stroke="#d3d7dc" stroke-width="1.1"/><path d="M1 14.8 Q1.6 9.6 6.4 9.6 Q11 9.6 11.8 14.8 M10.4 11.2 Q11.4 10.6 12.6 10.6 Q16.2 10.6 16.8 14.8" stroke="#d3d7dc" stroke-width="1.1" stroke-linecap="round"/></svg>
<svg style="position:absolute;left:1438px;top:375px;" width="16" height="16" viewBox="0 0 16 16" fill="none"><path d="M2 5.6 L8 2 L14 5.6 Q14 6.6 13 6.6 L3 6.6 Q2 6.6 2 5.6 Z M3.6 6.8 L3.6 11.4 M6.4 6.8 L6.4 11.4 M9.6 6.8 L9.6 11.4 M12.4 6.8 L12.4 11.4 M2.4 11.8 L13.6 11.8 Q14 11.8 14 12.6 Q14 13.6 13.2 13.6 L2.8 13.6 Q2 13.6 2 12.6 Q2 11.8 2.4 11.8 Z" stroke="#d3d7dc" stroke-width="1.1" stroke-linejoin="round"/></svg>
<svg style="position:absolute;left:1459px;top:375px;" width="16" height="17" viewBox="0 0 16 17" fill="none"><path d="M2.4 2.6 Q2.4 1.4 3.6 1.4 L12 1.4 Q13.2 1.4 13.2 2.6 L13.2 15.2 L11.8 14.2 L10.4 15.4 L9 14.2 L7.6 15.4 L6.2 14.2 L4.8 15.4 L3.6 14.2 L2.4 15.2 Z M4.8 11 L10.8 11 M4.8 9.2 L6.8 9.2 M10.6 4 Q9 3.4 8.6 4.6 Q8.6 5.6 9.8 5.8 Q11 6.1 10.8 7.2 Q10.4 8.2 8.6 7.6 M9.7 3 L9.7 8.6" stroke="#d3d7dc" stroke-width="1.1" stroke-linecap="round" stroke-linejoin="round"/></svg>
<svg style="position:absolute;left:1504px;top:375px;" width="14" height="16" viewBox="0 0 14 16" fill="none"><path d="M3.2 1.2 L8.8 1.2 L12.2 4.6 L12.2 12.6 Q12.2 14.6 10.2 14.6 L3.2 14.6 Q1.2 14.6 1.2 12.6 L1.2 3.2 Q1.2 1.2 3.2 1.2 Z" stroke="#3090dc" stroke-width="1.3" stroke-linejoin="round"/><path d="M8.6 1.4 L8.6 3.6 Q8.6 4.6 9.6 4.6 L12 4.6" stroke="#3090dc" stroke-width="1.2"/><circle cx="6.1" cy="9.1" r="3.05" fill="#3090dc"/><path d="M5.8 7.4 L5.8 9.3 L7 10.3" stroke="#fff" stroke-width="0.8" stroke-linecap="round"/></svg>
<div class="t" style="left:1520.94px;top:372.21px;font-size:14.39px;font-weight:normal;color:#3090dc;transform:scaleX(0.9800);"><span style="letter-spacing:-1.7px">1</span>699</div>
<div style="position:absolute;left:1614px;top:370px;width:99px;height:25px;box-sizing:border-box;border:1.2px solid #2f8fdc;border-radius:4px;background:#fff"></div>
<div style="position:absolute;left:1683px;top:370px;width:1.2px;height:25px;background:#2f8fdc"></div>
<svg style="position:absolute;left:1692px;top:378px;" width="13" height="9" viewBox="0 0 13 9" fill="none"><path d="M1.8 1.8 L6.5 6.5 L11.2 1.8" stroke="#2f8fdc" stroke-width="1.3" stroke-linecap="round" stroke-linejoin="round"/></svg>
<svg style="position:absolute;left:1622px;top:374.5px;" width="16" height="16" viewBox="0 0 16 16" fill="none"><path d="M4.2 6 L4.2 3.2 Q4.2 1.2 6.2 1.2 L11 1.2 L14.2 4.4 L14.2 12.4 Q14.2 14.4 12.2 14.4 L6.2 14.4 Q4.6 14.4 4.3 12.6" stroke="#2f8fdc" stroke-width="1.3" stroke-linejoin="round"/><path d="M10.8 1.4 L10.8 3.4 Q10.8 4.6 12 4.6 L14 4.6" stroke="#2f8fdc" stroke-width="1.2"/><rect x="1.2" y="7" width="8.8" height="5.2" rx="1.6" fill="#2f8fdc"/><path d="M2.6 11 L2.6 8.3 L3.8 8.3 Q4.5 8.3 4.5 9.1 Q4.5 9.8 3.8 9.8 L2.6 9.8 M5.5 11 L5.5 8.3 Q7.1 8.3 7.1 9.65 Q7.1 11 5.5 11 M8 11 L8 8.3 L9.3 8.3 M8 9.6 L9 9.6" stroke="#fff" stroke-width="0.6"/></svg>
<div class="t" style="left:1649.65px;top:372.01px;font-size:14.39px;font-weight:normal;color:#2f8fdc;transform:scaleX(1.0500);">678</div>
<div style="position:absolute;left:16px;top:399px;width:1705px;height:31px;background:#fff"></div>
<div style="position:absolute;left:16px;top:430px;width:1705px;height:1px;background:#dcdfe3"></div>
<div style="position:absolute;left:32px;top:407.3px;width:16px;height:16px;box-sizing:border-box;border:1.5px solid #4a4a4a;border-radius:3.5px;background:#fff"></div>
<svg style="position:absolute;left:80px;top:403px;" width="24" height="24" viewBox="0 0 24 24" fill="none"><path fill="#3e3e40" d="M12 1 C15.6 1 17.9 3.6 17.9 7.6 C17.9 10.8 16.8 12.6 15.8 13.6 L16 19.2 Q17.6 21.2 19.8 22.4 Q12 25.6 4.6 22.4 Q6.6 21.2 8.2 19.2 L8.1 14.4 C6.8 13 6.2 10.8 6.2 7.8 C6.2 3.6 8.4 1 12 1 Z"/></svg>
<div class="t" style="left:109.40px;top:402.91px;font-size:14.68px;font-weight:normal;color:#3090dc;transform:scaleX(1.1223);">Anna Hoffman (19)</div>
<div class="t" style="left:537.18px;top:404.21px;font-size:14.68px;font-weight:normal;color:#70767d;transform:scaleX(1.0450);">38.00</div>
<div class="t" style="left:643.50px;top:404.21px;font-size:14.68px;font-weight:normal;color:#70767d;transform:scaleX(1.0450);">$2,115.38</div>
<div class="t" style="left:784.78px;top:404.21px;font-size:14.68px;font-weight:normal;color:#70767d;transform:scaleX(1.0450);">$364.00</div>
<div class="t" style="left:946.98px;top:404.21px;font-size:14.68px;font-weight:normal;color:#c4c8cc;transform:scaleX(1.0450);">$0.00</div>
<div class="t" style="left:1050.65px;top:404.21px;font-size:14.68px;font-weight:normal;color:#70767d;transform:scaleX(1.0450);">$1,751.38</div>
<div class="t" style="left:1188.58px;top:404.21px;font-size:14.68px;font-weight:normal;color:#70767d;transform:scaleX(1.0450);">$222.11</div>
<div class="t" style="left:1275.01px;top:404.21px;font-size:14.68px;font-weight:normal;color:#70767d;transform:scaleX(1.0798);">7 May 2023</div>
<svg style="position:absolute;left:1374px;top:407px;" width="16" height="16" viewBox="0 0 16 16" fill="none"><path d="M2.2 3.6 Q2.2 1.8 4 1.8 L12.2 1.8 Q14 1.8 14 3.6 L14 9.6 Q14 11.4 12.2 11.4 L6.8 11.4 L3.2 14 L3.6 11.2 Q2.2 10.8 2.2 9.6 Z M5 5.2 L11.2 5.2 M5 7.8 L8 7.8" stroke="#d3d7dc" stroke-width="1.1" stroke-linejoin="round"/></svg>
<svg style="position:absolute;left:1395px;top:407px;" width="16" height="16" viewBox="0 0 16 16" fill="none"><path d="M9.6 14.2 L3.4 14.2 Q1.8 14.2 1.8 12.6 L1.8 4.2 Q1.8 2.6 3.4 2.6 L12.2 2.6 Q13.8 2.6 13.8 4.2 L13.8 6.2 M4.6 1.2 L4.6 3.8 M11 1.2 L11 3.8 M4.4 6.2 L11.2 6.2 M4.4 8.8 L6.2 8.8 M8.4 11.4 L14.4 11.4 M12.4 9.2 L14.6 11.4 L12.4 13.6" stroke="#d3d7dc" stroke-width="1.1" stroke-linecap="round" stroke-linejoin="round"/></svg>
<svg style="position:absolute;left:1416px;top:407px;" width="18" height="16" viewBox="0 0 18 16" fill="none"><circle cx="6.4" cy="5.2" r="3.2" stroke="#d3d7dc" stroke-width="1.1"/><circle cx="12.6" cy="7.6" r="2.3" stroke="#d3d7dc" stroke-width="1.1"/><path d="M1 14.8 Q1.6 9.6 6.4 9.6 Q11 9.6 11.8 14.8 M10.4 11.2 Q11.4 10.6 12.6 10.6 Q16.2 10.6 16.8 14.8" stroke="#d3d7dc" stroke-width="1.1" stroke-linecap="round"/></svg>
<svg style="position:absolute;left:1438px;top:407px;" width="16" height="16" viewBox="0 0 16 16" fill="none"><path d="M2 5.6 L8 2 L14 5.6 Q14 6.6 13 6.6 L3 6.6 Q2 6.6 2 5.6 Z M3.6 6.8 L3.6 11.4 M6.4 6.8 L6.4 11.4 M9.6 6.8 L9.6 11.4 M12.4 6.8 L12.4 11.4 M2.4 11.8 L13.6 11.8 Q14 11.8 14 12.6 Q14 13.6 13.2 13.6 L2.8 13.6 Q2 13.6 2 12.6 Q2 11.8 2.4 11.8 Z" stroke="#d3d7dc" stroke-width="1.1" stroke-linejoin="round"/></svg>
<svg style="position:absolute;left:1459px;top:407px;" width="16" height="17" viewBox="0 0 16 17" fill="none"><path d="M2.4 2.6 Q2.4 1.4 3.6 1.4 L12 1.4 Q13.2 1.4 13.2 2.6 L13.2 15.2 L11.8 14.2 L10.4 15.4 L9 14.2 L7.6 15.4 L6.2 14.2 L4.8 15.4 L3.6 14.2 L2.4 15.2 Z M4.8 11 L10.8 11 M4.8 9.2 L6.8 9.2 M10.6 4 Q9 3.4 8.6 4.6 Q8.6 5.6 9.8 5.8 Q11 6.1 10.8 7.2 Q10.4 8.2 8.6 7.6 M9.7 3 L9.7 8.6" stroke="#d3d7dc" stroke-width="1.1" stroke-linecap="round" stroke-linejoin="round"/></svg>
<svg style="position:absolute;left:1504px;top:407px;" width="14" height="16" viewBox="0 0 14 16" fill="none"><path d="M3.2 1.2 L8.8 1.2 L12.2 4.6 L12.2 12.6 Q12.2 14.6 10.2 14.6 L3.2 14.6 Q1.2 14.6 1.2 12.6 L1.2 3.2 Q1.2 1.2 3.2 1.2 Z" stroke="#3090dc" stroke-width="1.3" stroke-linejoin="round"/><path d="M8.6 1.4 L8.6 3.6 Q8.6 4.6 9.6 4.6 L12 4.6" stroke="#3090dc" stroke-width="1.2"/><circle cx="6.1" cy="9.1" r="3.05" fill="#3090dc"/><path d="M5.8 7.4 L5.8 9.3 L7 10.3" stroke="#fff" stroke-width="0.8" stroke-linecap="round"/></svg>
<div class="t" style="left:1520.94px;top:404.21px;font-size:14.39px;font-weight:normal;color:#3090dc;transform:scaleX(0.9800);"><span style="letter-spacing:-1.7px">1</span>705</div>
<div style="position:absolute;left:1614px;top:402px;width:99px;height:25px;box-sizing:border-box;border:1.2px solid #2f8fdc;border-radius:4px;background:#fff"></div>
<div style="position:absolute;left:1683px;top:402px;width:1.2px;height:25px;background:#2f8fdc"></div>
<svg style="position:absolute;left:1692px;top:410px;" width="13" height="9" viewBox="0 0 13 9" fill="none"><path d="M1.8 1.8 L6.5 6.5 L11.2 1.8" stroke="#2f8fdc" stroke-width="1.3" stroke-linecap="round" stroke-linejoin="round"/></svg>
<svg style="position:absolute;left:1622px;top:406.5px;" width="16" height="16" viewBox="0 0 16 16" fill="none"><path d="M4.2 6 L4.2 3.2 Q4.2 1.2 6.2 1.2 L11 1.2 L14.2 4.4 L14.2 12.4 Q14.2 14.4 12.2 14.4 L6.2 14.4 Q4.6 14.4 4.3 12.6" stroke="#2f8fdc" stroke-width="1.3" stroke-linejoin="round"/><path d="M10.8 1.4 L10.8 3.4 Q10.8 4.6 12 4.6 L14 4.6" stroke="#2f8fdc" stroke-width="1.2"/><rect x="1.2" y="7" width="8.8" height="5.2" rx="1.6" fill="#2f8fdc"/><path d="M2.6 11 L2.6 8.3 L3.8 8.3 Q4.5 8.3 4.5 9.1 Q4.5 9.8 3.8 9.8 L2.6 9.8 M5.5 11 L5.5 8.3 Q7.1 8.3 7.1 9.65 Q7.1 11 5.5 11 M8 11 L8 8.3 L9.3 8.3 M8 9.6 L9 9.6" stroke="#fff" stroke-width="0.6"/></svg>
<div class="t" style="left:1649.80px;top:404.01px;font-size:14.39px;font-weight:normal;color:#2f8fdc;transform:scaleX(1.0500);">682</div>
<div style="position:absolute;left:16px;top:431px;width:1705px;height:31px;background:#fff"></div>
<div style="position:absolute;left:16px;top:462px;width:1705px;height:1px;background:#dcdfe3"></div>
<div style="position:absolute;left:32px;top:439.3px;width:16px;height:16px;box-sizing:border-box;border:1.5px solid #4a4a4a;border-radius:3.5px;background:#fff"></div>
<svg style="position:absolute;left:80px;top:435px;" width="24" height="24" viewBox="0 0 24 24" fill="none"><path fill="#3e3e40" d="M12 1 C15.6 1 17.9 3.6 17.9 7.6 C17.9 10.8 16.8 12.6 15.8 13.6 L16 19.2 Q17.6 21.2 19.8 22.4 Q12 25.6 4.6 22.4 Q6.6 21.2 8.2 19.2 L8.1 14.4 C6.8 13 6.2 10.8 6.2 7.8 C6.2 3.6 8.4 1 12 1 Z"/></svg>
<div class="t" style="left:109.40px;top:434.91px;font-size:14.68px;font-weight:normal;color:#3090dc;transform:scaleX(1.1419);">Annie Smith (54)</div>
<div class="t" style="left:537.18px;top:436.21px;font-size:14.68px;font-weight:normal;color:#70767d;transform:scaleX(1.0450);">21.00</div>
<div class="t" style="left:655.23px;top:436.21px;font-size:14.68px;font-weight:normal;color:#70767d;transform:scaleX(1.0450);">$828.99</div>
<div class="t" style="left:793.29px;top:436.21px;font-size:14.68px;font-weight:normal;color:#70767d;transform:scaleX(1.0450);">$22.00</div>
<div class="t" style="left:946.98px;top:436.21px;font-size:14.68px;font-weight:normal;color:#c4c8cc;transform:scaleX(1.0450);">$0.00</div>
<div class="t" style="left:1063.53px;top:436.21px;font-size:14.68px;font-weight:normal;color:#70767d;transform:scaleX(1.0450);">$806.99</div>
<div class="t" style="left:1195.72px;top:436.21px;font-size:14.68px;font-weight:normal;color:#70767d;transform:scaleX(1.0450);">$86.44</div>
<div class="t" style="left:1275.01px;top:436.21px;font-size:14.68px;font-weight:normal;color:#70767d;transform:scaleX(1.0798);">7 May 2023</div>
<svg style="position:absolute;left:1374px;top:439px;" width="16" height="16" viewBox="0 0 16 16" fill="none"><path d="M2.2 3.6 Q2.2 1.8 4 1.8 L12.2 1.8 Q14 1.8 14 3.6 L14 9.6 Q14 11.4 12.2 11.4 L6.8 11.4 L3.2 14 L3.6 11.2 Q2.2 10.8 2.2 9.6 Z M5 5.2 L11.2 5.2 M5 7.8 L8 7.8" stroke="#d3d7dc" stroke-width="1.1" stroke-linejoin="round"/></svg>
<svg style="position:absolute;left:1395px;top:439px;" width="16" height="16" viewBox="0 0 16 16" fill="none"><path d="M9.6 14.2 L3.4 14.2 Q1.8 14.2 1.8 12.6 L1.8 4.2 Q1.8 2.6 3.4 2.6 L12.2 2.6 Q13.8 2.6 13.8 4.2 L13.8 6.2 M4.6 1.2 L4.6 3.8 M11 1.2 L11 3.8 M4.4 6.2 L11.2 6.2 M4.4 8.8 L6.2 8.8 M8.4 11.4 L14.4 11.4 M12.4 9.2 L14.6 11.4 L12.4 13.6" stroke="#d3d7dc" stroke-width="1.1" stroke-linecap="round" stroke-linejoin="round"/></svg>
<svg style="position:absolute;left:1416px;top:439px;" width="18" height="16" viewBox="0 0 18 16" fill="none"><circle cx="6.4" cy="5.2" r="3.2" stroke="#d3d7dc" stroke-width="1.1"/><circle cx="12.6" cy="7.6" r="2.3" stroke="#d3d7dc" stroke-width="1.1"/><path d="M1 14.8 Q1.6 9.6 6.4 9.6 Q11 9.6 11.8 14.8 M10.4 11.2 Q11.4 10.6 12.6 10.6 Q16.2 10.6 16.8 14.8" stroke="#d3d7dc" stroke-width="1.1" stroke-linecap="round"/></svg>
<svg style="position:absolute;left:1438px;top:439px;" width="16" height="16" viewBox="0 0 16 16" fill="none"><path d="M2 5.6 L8 2 L14 5.6 Q14 6.6 13 6.6 L3 6.6 Q2 6.6 2 5.6 Z M3.6 6.8 L3.6 11.4 M6.4 6.8 L6.4 11.4 M9.6 6.8 L9.6 11.4 M12.4 6.8 L12.4 11.4 M2.4 11.8 L13.6 11.8 Q14 11.8 14 12.6 Q14 13.6 13.2 13.6 L2.8 13.6 Q2 13.6 2 12.6 Q2 11.8 2.4 11.8 Z" stroke="#d3d7dc" stroke-width="1.1" stroke-linejoin="round"/></svg>
<svg style="position:absolute;left:1459px;top:439px;" width="16" height="17" viewBox="0 0 16 17" fill="none"><path d="M2.4 2.6 Q2.4 1.4 3.6 1.4 L12 1.4 Q13.2 1.4 13.2 2.6 L13.2 15.2 L11.8 14.2 L10.4 15.4 L9 14.2 L7.6 15.4 L6.2 14.2 L4.8 15.4 L3.6 14.2 L2.4 15.2 Z M4.8 11 L10.8 11 M4.8 9.2 L6.8 9.2 M10.6 4 Q9 3.4 8.6 4.6 Q8.6 5.6 9.8 5.8 Q11 6.1 10.8 7.2 Q10.4 8.2 8.6 7.6 M9.7 3 L9.7 8.6" stroke="#d3d7dc" stroke-width="1.1" stroke-linecap="round" stroke-linejoin="round"/></svg>
<svg style="position:absolute;left:1504px;top:439px;" width="14" height="16" viewBox="0 0 14 16" fill="none"><path d="M3.2 1.2 L8.8 1.2 L12.2 4.6 L12.2 12.6 Q12.2 14.6 10.2 14.6 L3.2 14.6 Q1.2 14.6 1.2 12.6 L1.2 3.2 Q1.2 1.2 3.2 1.2 Z" stroke="#3090dc" stroke-width="1.3" stroke-linejoin="round"/><path d="M8.6 1.4 L8.6 3.6 Q8.6 4.6 9.6 4.6 L12 4.6" stroke="#3090dc" stroke-width="1.2"/><circle cx="6.1" cy="9.1" r="3.05" fill="#3090dc"/><path d="M5.8 7.4 L5.8 9.3 L7 10.3" stroke="#fff" stroke-width="0.8" stroke-linecap="round"/></svg>
<div class="t" style="left:1520.94px;top:436.21px;font-size:14.39px;font-weight:normal;color:#3090dc;transform:scaleX(0.9800);"><span style="letter-spacing:-1.7px">1</span>7<span style="letter-spacing:-1.7px">1</span>5</div>
<div style="position:absolute;left:1614px;top:434px;width:99px;height:25px;box-sizing:border-box;border:1.2px solid #2f8fdc;border-radius:4px;background:#fff"></div>
<div style="position:absolute;left:1683px;top:434px;width:1.2px;height:25px;background:#2f8fdc"></div>
<svg style="position:absolute;left:1692px;top:442px;" width="13" height="9" viewBox="0 0 13 9" fill="none"><path d="M1.8 1.8 L6.5 6.5 L11.2 1.8" stroke="#2f8fdc" stroke-width="1.3" stroke-linecap="round" stroke-linejoin="round"/></svg>
<svg style="position:absolute;left:1622px;top:438.5px;" width="16" height="16" viewBox="0 0 16 16" fill="none"><path d="M4.2 6 L4.2 3.2 Q4.2 1.2 6.2 1.2 L11 1.2 L14.2 4.4 L14.2 12.4 Q14.2 14.4 12.2 14.4 L6.2 14.4 Q4.6 14.4 4.3 12.6" stroke="#2f8fdc" stroke-width="1.3" stroke-linejoin="round"/><path d="M10.8 1.4 L10.8 3.4 Q10.8 4.6 12 4.6 L14 4.6" stroke="#2f8fdc" stroke-width="1.2"/><rect x="1.2" y="7" width="8.8" height="5.2" rx="1.6" fill="#2f8fdc"/><path d="M2.6 11 L2.6 8.3 L3.8 8.3 Q4.5 8.3 4.5 9.1 Q4.5 9.8 3.8 9.8 L2.6 9.8 M5.5 11 L5.5 8.3 Q7.1 8.3 7.1 9.65 Q7.1 11 5.5 11 M8 11 L8 8.3 L9.3 8.3 M8 9.6 L9 9.6" stroke="#fff" stroke-width="0.6"/></svg>
<div class="t" style="left:1649.72px;top:436.01px;font-size:14.39px;font-weight:normal;color:#2f8fdc;transform:scaleX(1.0500);">691</div>
<div style="position:absolute;left:16px;top:463px;width:1705px;height:31px;background:#fff"></div>
<div style="position:absolute;left:16px;top:494px;width:1705px;height:1px;background:#dcdfe3"></div>
<div style="position:absolute;left:32px;top:471.3px;width:16px;height:16px;box-sizing:border-box;border:1.5px solid #4a4a4a;border-radius:3.5px;background:#fff"></div>
<svg style="position:absolute;left:80px;top:467px;" width="24" height="24" viewBox="0 0 24 24" fill="none"><path fill="#3e3e40" d="M12 1 C15.6 1 17.9 3.6 17.9 7.6 C17.9 10.8 16.8 12.6 15.8 13.6 L16 19.2 Q17.6 21.2 19.8 22.4 Q12 25.6 4.6 22.4 Q6.6 21.2 8.2 19.2 L8.1 14.4 C6.8 13 6.2 10.8 6.2 7.8 C6.2 3.6 8.4 1 12 1 Z"/></svg>
<div class="t" style="left:108.09px;top:466.91px;font-size:14.68px;font-weight:normal;color:#3090dc;transform:scaleX(1.1171);">Bailey Perkins (35)</div>
<div class="t" style="left:537.18px;top:468.21px;font-size:14.68px;font-weight:normal;color:#70767d;transform:scaleX(1.0450);">38.00</div>
<div class="t" style="left:642.42px;top:468.21px;font-size:14.68px;font-weight:normal;color:#70767d;transform:scaleX(1.0450);">$1,442.31</div>
<div class="t" style="left:784.78px;top:468.21px;font-size:14.68px;font-weight:normal;color:#70767d;transform:scaleX(1.0450);">$166.00</div>
<div class="t" style="left:946.98px;top:468.21px;font-size:14.68px;font-weight:normal;color:#c4c8cc;transform:scaleX(1.0450);">$0.00</div>
<div class="t" style="left:1050.72px;top:468.21px;font-size:14.68px;font-weight:normal;color:#70767d;transform:scaleX(1.0450);">$1,276.31</div>
<div class="t" style="left:1187.20px;top:468.21px;font-size:14.68px;font-weight:normal;color:#70767d;transform:scaleX(1.0450);">$151.44</div>
<div class="t" style="left:1275.01px;top:468.21px;font-size:14.68px;font-weight:normal;color:#70767d;transform:scaleX(1.0798);">7 May 2023</div>
<svg style="position:absolute;left:1374px;top:471px;" width="16" height="16" viewBox="0 0 16 16" fill="none"><path d="M2.2 3.6 Q2.2 1.8 4 1.8 L12.2 1.8 Q14 1.8 14 3.6 L14 9.6 Q14 11.4 12.2 11.4 L6.8 11.4 L3.2 14 L3.6 11.2 Q2.2 10.8 2.2 9.6 Z M5 5.2 L11.2 5.2 M5 7.8 L8 7.8" stroke="#d3d7dc" stroke-width="1.1" stroke-linejoin="round"/></svg>
<svg style="position:absolute;left:1395px;top:471px;" width="16" height="16" viewBox="0 0 16 16" fill="none"><path d="M9.6 14.2 L3.4 14.2 Q1.8 14.2 1.8 12.6 L1.8 4.2 Q1.8 2.6 3.4 2.6 L12.2 2.6 Q13.8 2.6 13.8 4.2 L13.8 6.2 M4.6 1.2 L4.6 3.8 M11 1.2 L11 3.8 M4.4 6.2 L11.2 6.2 M4.4 8.8 L6.2 8.8 M8.4 11.4 L14.4 11.4 M12.4 9.2 L14.6 11.4 L12.4 13.6" stroke="#d3d7dc" stroke-width="1.1" stroke-linecap="round" stroke-linejoin="round"/></svg>
<svg style="position:absolute;left:1416px;top:471px;" width="18" height="16" viewBox="0 0 18 16" fill="none"><circle cx="6.4" cy="5.2" r="3.2" stroke="#d3d7dc" stroke-width="1.1"/><circle cx="12.6" cy="7.6" r="2.3" stroke="#d3d7dc" stroke-width="1.1"/><path d="M1 14.8 Q1.6 9.6 6.4 9.6 Q11 9.6 11.8 14.8 M10.4 11.2 Q11.4 10.6 12.6 10.6 Q16.2 10.6 16.8 14.8" stroke="#d3d7dc" stroke-width="1.1" stroke-linecap="round"/></svg>
<svg style="position:absolute;left:1438px;top:471px;" width="16" height="16" viewBox="0 0 16 16" fill="none"><path d="M2 5.6 L8 2 L14 5.6 Q14 6.6 13 6.6 L3 6.6 Q2 6.6 2 5.6 Z M3.6 6.8 L3.6 11.4 M6.4 6.8 L6.4 11.4 M9.6 6.8 L9.6 11.4 M12.4 6.8 L12.4 11.4 M2.4 11.8 L13.6 11.8 Q14 11.8 14 12.6 Q14 13.6 13.2 13.6 L2.8 13.6 Q2 13.6 2 12.6 Q2 11.8 2.4 11.8 Z" stroke="#d3d7dc" stroke-width="1.1" stroke-linejoin="round"/></svg>
<svg style="position:absolute;left:1459px;top:471px;" width="16" height="17" viewBox="0 0 16 17" fill="none"><path d="M2.4 2.6 Q2.4 1.4 3.6 1.4 L12 1.4 Q13.2 1.4 13.2 2.6 L13.2 15.2 L11.8 14.2 L10.4 15.4 L9 14.2 L7.6 15.4 L6.2 14.2 L4.8 15.4 L3.6 14.2 L2.4 15.2 Z M4.8 11 L10.8 11 M4.8 9.2 L6.8 9.2 M10.6 4 Q9 3.4 8.6 4.6 Q8.6 5.6 9.8 5.8 Q11 6.1 10.8 7.2 Q10.4 8.2 8.6 7.6 M9.7 3 L9.7 8.6" stroke="#d3d7dc" stroke-width="1.1" stroke-linecap="round" stroke-linejoin="round"/></svg>
<svg style="position:absolute;left:1504px;top:471px;" width="14" height="16" viewBox="0 0 14 16" fill="none"><path d="M3.2 1.2 L8.8 1.2 L12.2 4.6 L12.2 12.6 Q12.2 14.6 10.2 14.6 L3.2 14.6 Q1.2 14.6 1.2 12.6 L1.2 3.2 Q1.2 1.2 3.2 1.2 Z" stroke="#3090dc" stroke-width="1.3" stroke-linejoin="round"/><path d="M8.6 1.4 L8.6 3.6 Q8.6 4.6 9.6 4.6 L12 4.6" stroke="#3090dc" stroke-width="1.2"/><circle cx="6.1" cy="9.1" r="3.05" fill="#3090dc"/><path d="M5.8 7.4 L5.8 9.3 L7 10.3" stroke="#fff" stroke-width="0.8" stroke-linecap="round"/></svg>
<div class="t" style="left:1520.94px;top:468.21px;font-size:14.39px;font-weight:normal;color:#3090dc;transform:scaleX(0.9800);"><span style="letter-spacing:-1.7px">1</span>697</div>
<div style="position:absolute;left:1614px;top:466px;width:99px;height:25px;box-sizing:border-box;border:1.2px solid #2f8fdc;border-radius:4px;background:#fff"></div>
<div style="position:absolute;left:1683px;top:466px;width:1.2px;height:25px;background:#2f8fdc"></div>
<svg style="position:absolute;left:1692px;top:474px;" width="13" height="9" viewBox="0 0 13 9" fill="none"><path d="M1.8 1.8 L6.5 6.5 L11.2 1.8" stroke="#2f8fdc" stroke-width="1.3" stroke-linecap="round" stroke-linejoin="round"/></svg>
<svg style="position:absolute;left:1622px;top:470.5px;" width="16" height="16" viewBox="0 0 16 16" fill="none"><path d="M4.2 6 L4.2 3.2 Q4.2 1.2 6.2 1.2 L11 1.2 L14.2 4.4 L14.2 12.4 Q14.2 14.4 12.2 14.4 L6.2 14.4 Q4.6 14.4 4.3 12.6" stroke="#2f8fdc" stroke-width="1.3" stroke-linejoin="round"/><path d="M10.8 1.4 L10.8 3.4 Q10.8 4.6 12 4.6 L14 4.6" stroke="#2f8fdc" stroke-width="1.2"/><rect x="1.2" y="7" width="8.8" height="5.2" rx="1.6" fill="#2f8fdc"/><path d="M2.6 11 L2.6 8.3 L3.8 8.3 Q4.5 8.3 4.5 9.1 Q4.5 9.8 3.8 9.8 L2.6 9.8 M5.5 11 L5.5 8.3 Q7.1 8.3 7.1 9.65 Q7.1 11 5.5 11 M8 11 L8 8.3 L9.3 8.3 M8 9.6 L9 9.6" stroke="#fff" stroke-width="0.6"/></svg>
<div class="t" style="left:1649.65px;top:468.01px;font-size:14.39px;font-weight:normal;color:#2f8fdc;transform:scaleX(1.0500);">676</div>
<div style="position:absolute;left:16px;top:495px;width:1705px;height:31px;background:#fff"></div>
<div style="position:absolute;left:16px;top:526px;width:1705px;height:1px;background:#dcdfe3"></div>
<div style="position:absolute;left:32px;top:503.3px;width:16px;height:16px;box-sizing:border-box;border:1.5px solid #4a4a4a;border-radius:3.5px;background:#fff"></div>
<svg style="position:absolute;left:80px;top:499px;" width="24" height="24" viewBox="0 0 24 24" fill="none"><path fill="#3e3e40" d="M12 1 C15.6 1 17.9 3.6 17.9 7.6 C17.9 10.8 16.8 12.6 15.8 13.6 L16 19.2 Q17.6 21.2 19.8 22.4 Q12 25.6 4.6 22.4 Q6.6 21.2 8.2 19.2 L8.1 14.4 C6.8 13 6.2 10.8 6.2 7.8 C6.2 3.6 8.4 1 12 1 Z"/></svg>
<div class="t" style="left:108.55px;top:498.91px;font-size:14.68px;font-weight:normal;color:#3090dc;transform:scaleX(1.1579);">Carlena Moananui (7)</div>
<div class="t" style="left:537.18px;top:500.21px;font-size:14.68px;font-weight:normal;color:#70767d;transform:scaleX(1.0450);">38.00</div>
<div class="t" style="left:642.35px;top:500.21px;font-size:14.68px;font-weight:normal;color:#70767d;transform:scaleX(1.0450);">$2,019.23</div>
<div class="t" style="left:784.78px;top:500.21px;font-size:14.68px;font-weight:normal;color:#70767d;transform:scaleX(1.0450);">$330.00</div>
<div class="t" style="left:946.98px;top:500.21px;font-size:14.68px;font-weight:normal;color:#c4c8cc;transform:scaleX(1.0450);">$0.00</div>
<div class="t" style="left:1050.65px;top:500.21px;font-size:14.68px;font-weight:normal;color:#70767d;transform:scaleX(1.0450);">$1,689.23</div>
<div class="t" style="left:1187.51px;top:500.21px;font-size:14.68px;font-weight:normal;color:#70767d;transform:scaleX(1.0450);">$212.02</div>
<div class="t" style="left:1275.01px;top:500.21px;font-size:14.68px;font-weight:normal;color:#70767d;transform:scaleX(1.0798);">7 May 2023</div>
<svg style="position:absolute;left:1374px;top:503px;" width="16" height="16" viewBox="0 0 16 16" fill="none"><path d="M2.2 3.6 Q2.2 1.8 4 1.8 L12.2 1.8 Q14 1.8 14 3.6 L14 9.6 Q14 11.4 12.2 11.4 L6.8 11.4 L3.2 14 L3.6 11.2 Q2.2 10.8 2.2 9.6 Z M5 5.2 L11.2 5.2 M5 7.8 L8 7.8" stroke="#d3d7dc" stroke-width="1.1" stroke-linejoin="round"/></svg>
<svg style="position:absolute;left:1395px;top:503px;" width="16" height="16" viewBox="0 0 16 16" fill="none"><path d="M9.6 14.2 L3.4 14.2 Q1.8 14.2 1.8 12.6 L1.8 4.2 Q1.8 2.6 3.4 2.6 L12.2 2.6 Q13.8 2.6 13.8 4.2 L13.8 6.2 M4.6 1.2 L4.6 3.8 M11 1.2 L11 3.8 M4.4 6.2 L11.2 6.2 M4.4 8.8 L6.2 8.8 M8.4 11.4 L14.4 11.4 M12.4 9.2 L14.6 11.4 L12.4 13.6" stroke="#d3d7dc" stroke-width="1.1" stroke-linecap="round" stroke-linejoin="round"/></svg>
<svg style="position:absolute;left:1416px;top:503px;" width="18" height="16" viewBox="0 0 18 16" fill="none"><circle cx="6.4" cy="5.2" r="3.2" stroke="#d3d7dc" stroke-width="1.1"/><circle cx="12.6" cy="7.6" r="2.3" stroke="#d3d7dc" stroke-width="1.1"/><path d="M1 14.8 Q1.6 9.6 6.4 9.6 Q11 9.6 11.8 14.8 M10.4 11.2 Q11.4 10.6 12.6 10.6 Q16.2 10.6 16.8 14.8" stroke="#d3d7dc" stroke-width="1.1" stroke-linecap="round"/></svg>
<svg style="position:absolute;left:1438px;top:503px;" width="16" height="16" viewBox="0 0 16 16" fill="none"><path d="M2 5.6 L8 2 L14 5.6 Q14 6.6 13 6.6 L3 6.6 Q2 6.6 2 5.6 Z M3.6 6.8 L3.6 11.4 M6.4 6.8 L6.4 11.4 M9.6 6.8 L9.6 11.4 M12.4 6.8 L12.4 11.4 M2.4 11.8 L13.6 11.8 Q14 11.8 14 12.6 Q14 13.6 13.2 13.6 L2.8 13.6 Q2 13.6 2 12.6 Q2 11.8 2.4 11.8 Z" stroke="#d3d7dc" stroke-width="1.1" stroke-linejoin="round"/></svg>
<svg style="position:absolute;left:1459px;top:503px;" width="16" height="17" viewBox="0 0 16 17" fill="none"><path d="M2.4 2.6 Q2.4 1.4 3.6 1.4 L12 1.4 Q13.2 1.4 13.2 2.6 L13.2 15.2 L11.8 14.2 L10.4 15.4 L9 14.2 L7.6 15.4 L6.2 14.2 L4.8 15.4 L3.6 14.2 L2.4 15.2 Z M4.8 11 L10.8 11 M4.8 9.2 L6.8 9.2 M10.6 4 Q9 3.4 8.6 4.6 Q8.6 5.6 9.8 5.8 Q11 6.1 10.8 7.2 Q10.4 8.2 8.6 7.6 M9.7 3 L9.7 8.6" stroke="#d3d7dc" stroke-width="1.1" stroke-linecap="round" stroke-linejoin="round"/></svg>
<svg style="position:absolute;left:1504px;top:503px;" width="14" height="16" viewBox="0 0 14 16" fill="none"><path d="M3.2 1.2 L8.8 1.2 L12.2 4.6 L12.2 12.6 Q12.2 14.6 10.2 14.6 L3.2 14.6 Q1.2 14.6 1.2 12.6 L1.2 3.2 Q1.2 1.2 3.2 1.2 Z" stroke="#3090dc" stroke-width="1.3" stroke-linejoin="round"/><path d="M8.6 1.4 L8.6 3.6 Q8.6 4.6 9.6 4.6 L12 4.6" stroke="#3090dc" stroke-width="1.2"/><circle cx="6.1" cy="9.1" r="3.05" fill="#3090dc"/><path d="M5.8 7.4 L5.8 9.3 L7 10.3" stroke="#fff" stroke-width="0.8" stroke-linecap="round"/></svg>
<div class="t" style="left:1520.94px;top:500.21px;font-size:14.39px;font-weight:normal;color:#3090dc;transform:scaleX(0.9800);"><span style="letter-spacing:-1.7px">1</span>703</div>
<div style="position:absolute;left:1614px;top:498px;width:99px;height:25px;box-sizing:border-box;border:1.2px solid #2f8fdc;border-radius:4px;background:#fff"></div>
<div style="position:absolute;left:1683px;top:498px;width:1.2px;height:25px;background:#2f8fdc"></div>
<svg style="position:absolute;left:1692px;top:506px;" width="13" height="9" viewBox="0 0 13 9" fill="none"><path d="M1.8 1.8 L6.5 6.5 L11.2 1.8" stroke="#2f8fdc" stroke-width="1.3" stroke-linecap="round" stroke-linejoin="round"/></svg>
<svg style="position:absolute;left:1622px;top:502.5px;" width="16" height="16" viewBox="0 0 16 16" fill="none"><path d="M4.2 6 L4.2 3.2 Q4.2 1.2 6.2 1.2 L11 1.2 L14.2 4.4 L14.2 12.4 Q14.2 14.4 12.2 14.4 L6.2 14.4 Q4.6 14.4 4.3 12.6" stroke="#2f8fdc" stroke-width="1.3" stroke-linejoin="round"/><path d="M10.8 1.4 L10.8 3.4 Q10.8 4.6 12 4.6 L14 4.6" stroke="#2f8fdc" stroke-width="1.2"/><rect x="1.2" y="7" width="8.8" height="5.2" rx="1.6" fill="#2f8fdc"/><path d="M2.6 11 L2.6 8.3 L3.8 8.3 Q4.5 8.3 4.5 9.1 Q4.5 9.8 3.8 9.8 L2.6 9.8 M5.5 11 L5.5 8.3 Q7.1 8.3 7.1 9.65 Q7.1 11 5.5 11 M8 11 L8 8.3 L9.3 8.3 M8 9.6 L9 9.6" stroke="#fff" stroke-width="0.6"/></svg>
<div class="t" style="left:1649.80px;top:500.01px;font-size:14.39px;font-weight:normal;color:#2f8fdc;transform:scaleX(1.0500);">677</div>
<div style="position:absolute;left:16px;top:527px;width:1705px;height:31px;background:#fff"></div>
<div style="position:absolute;left:16px;top:558px;width:1705px;height:1px;background:#dcdfe3"></div>
<div style="position:absolute;left:32px;top:535.3px;width:16px;height:16px;box-sizing:border-box;border:1.5px solid #4a4a4a;border-radius:3.5px;background:#fff"></div>
<svg style="position:absolute;left:80px;top:531px;" width="24" height="24" viewBox="0 0 24 24" fill="none"><path fill="#3e3e40" d="M12 1 C15.6 1 17.9 3.6 17.9 7.6 C17.9 10.8 16.8 12.6 15.8 13.6 L16 19.2 Q17.6 21.2 19.8 22.4 Q12 25.6 4.6 22.4 Q6.6 21.2 8.2 19.2 L8.1 14.4 C6.8 13 6.2 10.8 6.2 7.8 C6.2 3.6 8.4 1 12 1 Z"/></svg>
<div class="t" style="left:108.59px;top:530.91px;font-size:14.68px;font-weight:normal;color:#3090dc;transform:scaleX(1.1034);">Carly Harkin (21)</div>
<div class="t" style="left:537.18px;top:532.21px;font-size:14.68px;font-weight:normal;color:#70767d;transform:scaleX(1.0450);">38.00</div>
<div class="t" style="left:642.35px;top:532.21px;font-size:14.68px;font-weight:normal;color:#70767d;transform:scaleX(1.0450);">$1,538.46</div>
<div class="t" style="left:784.78px;top:532.21px;font-size:14.68px;font-weight:normal;color:#70767d;transform:scaleX(1.0450);">$188.00</div>
<div class="t" style="left:946.98px;top:532.21px;font-size:14.68px;font-weight:normal;color:#c4c8cc;transform:scaleX(1.0450);">$0.00</div>
<div class="t" style="left:1050.65px;top:532.21px;font-size:14.68px;font-weight:normal;color:#70767d;transform:scaleX(1.0450);">$1,350.46</div>
<div class="t" style="left:1187.20px;top:532.21px;font-size:14.68px;font-weight:normal;color:#70767d;transform:scaleX(1.0450);">$161.54</div>
<div class="t" style="left:1275.01px;top:532.21px;font-size:14.68px;font-weight:normal;color:#70767d;transform:scaleX(1.0798);">7 May 2023</div>
<svg style="position:absolute;left:1374px;top:535px;" width="16" height="16" viewBox="0 0 16 16" fill="none"><path d="M2.2 3.6 Q2.2 1.8 4 1.8 L12.2 1.8 Q14 1.8 14 3.6 L14 9.6 Q14 11.4 12.2 11.4 L6.8 11.4 L3.2 14 L3.6 11.2 Q2.2 10.8 2.2 9.6 Z M5 5.2 L11.2 5.2 M5 7.8 L8 7.8" stroke="#d3d7dc" stroke-width="1.1" stroke-linejoin="round"/></svg>
<svg style="position:absolute;left:1395px;top:535px;" width="16" height="16" viewBox="0 0 16 16" fill="none"><path d="M9.6 14.2 L3.4 14.2 Q1.8 14.2 1.8 12.6 L1.8 4.2 Q1.8 2.6 3.4 2.6 L12.2 2.6 Q13.8 2.6 13.8 4.2 L13.8 6.2 M4.6 1.2 L4.6 3.8 M11 1.2 L11 3.8 M4.4 6.2 L11.2 6.2 M4.4 8.8 L6.2 8.8 M8.4 11.4 L14.4 11.4 M12.4 9.2 L14.6 11.4 L12.4 13.6" stroke="#d3d7dc" stroke-width="1.1" stroke-linecap="round" stroke-linejoin="round"/></svg>
<svg style="position:absolute;left:1416px;top:535px;" width="18" height="16" viewBox="0 0 18 16" fill="none"><circle cx="6.4" cy="5.2" r="3.2" stroke="#d3d7dc" stroke-width="1.1"/><circle cx="12.6" cy="7.6" r="2.3" stroke="#d3d7dc" stroke-width="1.1"/><path d="M1 14.8 Q1.6 9.6 6.4 9.6 Q11 9.6 11.8 14.8 M10.4 11.2 Q11.4 10.6 12.6 10.6 Q16.2 10.6 16.8 14.8" stroke="#d3d7dc" stroke-width="1.1" stroke-linecap="round"/></svg>
<svg style="position:absolute;left:1438px;top:535px;" width="16" height="16" viewBox="0 0 16 16" fill="none"><path d="M2 5.6 L8 2 L14 5.6 Q14 6.6 13 6.6 L3 6.6 Q2 6.6 2 5.6 Z M3.6 6.8 L3.6 11.4 M6.4 6.8 L6.4 11.4 M9.6 6.8 L9.6 11.4 M12.4 6.8 L12.4 11.4 M2.4 11.8 L13.6 11.8 Q14 11.8 14 12.6 Q14 13.6 13.2 13.6 L2.8 13.6 Q2 13.6 2 12.6 Q2 11.8 2.4 11.8 Z" stroke="#d3d7dc" stroke-width="1.1" stroke-linejoin="round"/></svg>
<svg style="position:absolute;left:1459px;top:535px;" width="16" height="17" viewBox="0 0 16 17" fill="none"><path d="M2.4 2.6 Q2.4 1.4 3.6 1.4 L12 1.4 Q13.2 1.4 13.2 2.6 L13.2 15.2 L11.8 14.2 L10.4 15.4 L9 14.2 L7.6 15.4 L6.2 14.2 L4.8 15.4 L3.6 14.2 L2.4 15.2 Z M4.8 11 L10.8 11 M4.8 9.2 L6.8 9.2 M10.6 4 Q9 3.4 8.6 4.6 Q8.6 5.6 9.8 5.8 Q11 6.1 10.8 7.2 Q10.4 8.2 8.6 7.6 M9.7 3 L9.7 8.6" stroke="#d3d7dc" stroke-width="1.1" stroke-linecap="round" stroke-linejoin="round"/></svg>
<svg style="position:absolute;left:1504px;top:535px;" width="14" height="16" viewBox="0 0 14 16" fill="none"><path d="M3.2 1.2 L8.8 1.2 L12.2 4.6 L12.2 12.6 Q12.2 14.6 10.2 14.6 L3.2 14.6 Q1.2 14.6 1.2 12.6 L1.2 3.2 Q1.2 1.2 3.2 1.2 Z" stroke="#3090dc" stroke-width="1.3" stroke-linejoin="round"/><path d="M8.6 1.4 L8.6 3.6 Q8.6 4.6 9.6 4.6 L12 4.6" stroke="#3090dc" stroke-width="1.2"/><circle cx="6.1" cy="9.1" r="3.05" fill="#3090dc"/><path d="M5.8 7.4 L5.8 9.3 L7 10.3" stroke="#fff" stroke-width="0.8" stroke-linecap="round"/></svg>
<div class="t" style="left:1520.94px;top:532.21px;font-size:14.39px;font-weight:normal;color:#3090dc;transform:scaleX(0.9800);"><span style="letter-spacing:-1.7px">1</span>706</div>
<div style="position:absolute;left:1614px;top:530px;width:99px;height:25px;box-sizing:border-box;border:1.2px solid #2f8fdc;border-radius:4px;background:#fff"></div>
<div style="position:absolute;left:1683px;top:530px;width:1.2px;height:25px;background:#2f8fdc"></div>
<svg style="position:absolute;left:1692px;top:538px;" width="13" height="9" viewBox="0 0 13 9" fill="none"><path d="M1.8 1.8 L6.5 6.5 L11.2 1.8" stroke="#2f8fdc" stroke-width="1.3" stroke-linecap="round" stroke-linejoin="round"/></svg>
<svg style="position:absolute;left:1622px;top:534.5px;" width="16" height="16" viewBox="0 0 16 16" fill="none"><path d="M4.2 6 L4.2 3.2 Q4.2 1.2 6.2 1.2 L11 1.2 L14.2 4.4 L14.2 12.4 Q14.2 14.4 12.2 14.4 L6.2 14.4 Q4.6 14.4 4.3 12.6" stroke="#2f8fdc" stroke-width="1.3" stroke-linejoin="round"/><path d="M10.8 1.4 L10.8 3.4 Q10.8 4.6 12 4.6 L14 4.6" stroke="#2f8fdc" stroke-width="1.2"/><rect x="1.2" y="7" width="8.8" height="5.2" rx="1.6" fill="#2f8fdc"/><path d="M2.6 11 L2.6 8.3 L3.8 8.3 Q4.5 8.3 4.5 9.1 Q4.5 9.8 3.8 9.8 L2.6 9.8 M5.5 11 L5.5 8.3 Q7.1 8.3 7.1 9.65 Q7.1 11 5.5 11 M8 11 L8 8.3 L9.3 8.3 M8 9.6 L9 9.6" stroke="#fff" stroke-width="0.6"/></svg>
<div class="t" style="left:1649.57px;top:532.01px;font-size:14.39px;font-weight:normal;color:#2f8fdc;transform:scaleX(1.0500);">680</div>
<div style="position:absolute;left:16px;top:559px;width:1705px;height:31px;background:#fff"></div>
<div style="position:absolute;left:16px;top:590px;width:1705px;height:1px;background:#dcdfe3"></div>
<div style="position:absolute;left:32px;top:567.3px;width:16px;height:16px;box-sizing:border-box;border:1.5px solid #4a4a4a;border-radius:3.5px;background:#fff"></div>
<svg style="position:absolute;left:80px;top:563px;" width="24" height="24" viewBox="0 0 24 24" fill="none"><path fill="#3e3e40" d="M12 1 C15.6 1 17.9 3.6 17.9 7.6 C17.9 10.8 16.8 12.6 15.8 13.6 L16 19.2 Q17.6 21.2 19.8 22.4 Q12 25.6 4.6 22.4 Q6.6 21.2 8.2 19.2 L8.1 14.4 C6.8 13 6.2 10.8 6.2 7.8 C6.2 3.6 8.4 1 12 1 Z"/></svg>
<div class="t" style="left:108.59px;top:562.91px;font-size:14.68px;font-weight:normal;color:#3090dc;transform:scaleX(1.1036);">Carly Lygon (13)</div>
<div class="t" style="left:537.18px;top:564.21px;font-size:14.68px;font-weight:normal;color:#70767d;transform:scaleX(1.0450);">38.00</div>
<div class="t" style="left:642.35px;top:564.21px;font-size:14.68px;font-weight:normal;color:#70767d;transform:scaleX(1.0450);">$1,735.58</div>
<div class="t" style="left:784.78px;top:564.21px;font-size:14.68px;font-weight:normal;color:#70767d;transform:scaleX(1.0450);">$232.00</div>
<div class="t" style="left:946.98px;top:564.21px;font-size:14.68px;font-weight:normal;color:#70767d;transform:scaleX(1.0450);">$5.00</div>
<div class="t" style="left:1050.65px;top:564.21px;font-size:14.68px;font-weight:normal;color:#70767d;transform:scaleX(1.0450);">$1,498.58</div>
<div class="t" style="left:1187.20px;top:564.21px;font-size:14.68px;font-weight:normal;color:#70767d;transform:scaleX(1.0450);">$182.24</div>
<div class="t" style="left:1275.01px;top:564.21px;font-size:14.68px;font-weight:normal;color:#70767d;transform:scaleX(1.0798);">7 May 2023</div>
<svg style="position:absolute;left:1374px;top:567px;" width="16" height="16" viewBox="0 0 16 16" fill="none"><path d="M2.2 3.6 Q2.2 1.8 4 1.8 L12.2 1.8 Q14 1.8 14 3.6 L14 9.6 Q14 11.4 12.2 11.4 L6.8 11.4 L3.2 14 L3.6 11.2 Q2.2 10.8 2.2 9.6 Z M5 5.2 L11.2 5.2 M5 7.8 L8 7.8" stroke="#d3d7dc" stroke-width="1.1" stroke-linejoin="round"/></svg>
<svg style="position:absolute;left:1395px;top:567px;" width="16" height="16" viewBox="0 0 16 16" fill="none"><path d="M9.6 14.2 L3.4 14.2 Q1.8 14.2 1.8 12.6 L1.8 4.2 Q1.8 2.6 3.4 2.6 L12.2 2.6 Q13.8 2.6 13.8 4.2 L13.8 6.2 M4.6 1.2 L4.6 3.8 M11 1.2 L11 3.8 M4.4 6.2 L11.2 6.2 M4.4 8.8 L6.2 8.8 M8.4 11.4 L14.4 11.4 M12.4 9.2 L14.6 11.4 L12.4 13.6" stroke="#d3d7dc" stroke-width="1.1" stroke-linecap="round" stroke-linejoin="round"/></svg>
<svg style="position:absolute;left:1416px;top:567px;" width="18" height="16" viewBox="0 0 18 16" fill="none"><circle cx="6.4" cy="5.2" r="3.2" stroke="#d3d7dc" stroke-width="1.1"/><circle cx="12.6" cy="7.6" r="2.3" stroke="#d3d7dc" stroke-width="1.1"/><path d="M1 14.8 Q1.6 9.6 6.4 9.6 Q11 9.6 11.8 14.8 M10.4 11.2 Q11.4 10.6 12.6 10.6 Q16.2 10.6 16.8 14.8" stroke="#d3d7dc" stroke-width="1.1" stroke-linecap="round"/></svg>
<svg style="position:absolute;left:1438px;top:567px;" width="16" height="16" viewBox="0 0 16 16" fill="none"><path d="M2 5.6 L8 2 L14 5.6 Q14 6.6 13 6.6 L3 6.6 Q2 6.6 2 5.6 Z M3.6 6.8 L3.6 11.4 M6.4 6.8 L6.4 11.4 M9.6 6.8 L9.6 11.4 M12.4 6.8 L12.4 11.4 M2.4 11.8 L13.6 11.8 Q14 11.8 14 12.6 Q14 13.6 13.2 13.6 L2.8 13.6 Q2 13.6 2 12.6 Q2 11.8 2.4 11.8 Z" stroke="#d3d7dc" stroke-width="1.1" stroke-linejoin="round"/></svg>
<svg style="position:absolute;left:1459px;top:567px;" width="16" height="17" viewBox="0 0 16 17" fill="none"><path d="M2.4 2.6 Q2.4 1.4 3.6 1.4 L12 1.4 Q13.2 1.4 13.2 2.6 L13.2 15.2 L11.8 14.2 L10.4 15.4 L9 14.2 L7.6 15.4 L6.2 14.2 L4.8 15.4 L3.6 14.2 L2.4 15.2 Z M4.8 11 L10.8 11 M4.8 9.2 L6.8 9.2 M10.6 4 Q9 3.4 8.6 4.6 Q8.6 5.6 9.8 5.8 Q11 6.1 10.8 7.2 Q10.4 8.2 8.6 7.6 M9.7 3 L9.7 8.6" stroke="#d3d7dc" stroke-width="1.1" stroke-linecap="round" stroke-linejoin="round"/></svg>
<svg style="position:absolute;left:1504px;top:567px;" width="14" height="16" viewBox="0 0 14 16" fill="none"><path d="M3.2 1.2 L8.8 1.2 L12.2 4.6 L12.2 12.6 Q12.2 14.6 10.2 14.6 L3.2 14.6 Q1.2 14.6 1.2 12.6 L1.2 3.2 Q1.2 1.2 3.2 1.2 Z" stroke="#3090dc" stroke-width="1.3" stroke-linejoin="round"/><path d="M8.6 1.4 L8.6 3.6 Q8.6 4.6 9.6 4.6 L12 4.6" stroke="#3090dc" stroke-width="1.2"/><circle cx="6.1" cy="9.1" r="3.05" fill="#3090dc"/><path d="M5.8 7.4 L5.8 9.3 L7 10.3" stroke="#fff" stroke-width="0.8" stroke-linecap="round"/></svg>
<div class="t" style="left:1520.94px;top:564.21px;font-size:14.39px;font-weight:normal;color:#3090dc;transform:scaleX(0.9800);"><span style="letter-spacing:-1.7px">1</span>7<span style="letter-spacing:-1.7px">1</span>2</div>
<div style="position:absolute;left:1614px;top:562px;width:99px;height:25px;box-sizing:border-box;border:1.2px solid #2f8fdc;border-radius:4px;background:#fff"></div>
<div style="position:absolute;left:1683px;top:562px;width:1.2px;height:25px;background:#2f8fdc"></div>
<svg style="position:absolute;left:1692px;top:570px;" width="13" height="9" viewBox="0 0 13 9" fill="none"><path d="M1.8 1.8 L6.5 6.5 L11.2 1.8" stroke="#2f8fdc" stroke-width="1.3" stroke-linecap="round" stroke-linejoin="round"/></svg>
<svg style="position:absolute;left:1622px;top:566.5px;" width="16" height="16" viewBox="0 0 16 16" fill="none"><path d="M4.2 6 L4.2 3.2 Q4.2 1.2 6.2 1.2 L11 1.2 L14.2 4.4 L14.2 12.4 Q14.2 14.4 12.2 14.4 L6.2 14.4 Q4.6 14.4 4.3 12.6" stroke="#2f8fdc" stroke-width="1.3" stroke-linejoin="round"/><path d="M10.8 1.4 L10.8 3.4 Q10.8 4.6 12 4.6 L14 4.6" stroke="#2f8fdc" stroke-width="1.2"/><rect x="1.2" y="7" width="8.8" height="5.2" rx="1.6" fill="#2f8fdc"/><path d="M2.6 11 L2.6 8.3 L3.8 8.3 Q4.5 8.3 4.5 9.1 Q4.5 9.8 3.8 9.8 L2.6 9.8 M5.5 11 L5.5 8.3 Q7.1 8.3 7.1 9.65 Q7.1 11 5.5 11 M8 11 L8 8.3 L9.3 8.3 M8 9.6 L9 9.6" stroke="#fff" stroke-width="0.6"/></svg>
<div class="t" style="left:1649.57px;top:564.01px;font-size:14.39px;font-weight:normal;color:#2f8fdc;transform:scaleX(1.0500);">690</div>
<div style="position:absolute;left:16px;top:591px;width:1705px;height:31px;background:#fff"></div>
<div style="position:absolute;left:16px;top:622px;width:1705px;height:1px;background:#dcdfe3"></div>
<div style="position:absolute;left:32px;top:599.3px;width:16px;height:16px;box-sizing:border-box;border:1.5px solid #4a4a4a;border-radius:3.5px;background:#fff"></div>
<svg style="position:absolute;left:80px;top:595px;" width="24" height="24" viewBox="0 0 24 24" fill="none"><path fill="#3e3e40" d="M12 1 C15.6 1 17.9 3.6 17.9 7.6 C17.9 10.8 16.8 12.6 15.8 13.6 L16 19.2 Q17.6 21.2 19.8 22.4 Q12 25.6 4.6 22.4 Q6.6 21.2 8.2 19.2 L8.1 14.4 C6.8 13 6.2 10.8 6.2 7.8 C6.2 3.6 8.4 1 12 1 Z"/></svg>
<div class="t" style="left:108.59px;top:594.91px;font-size:14.68px;font-weight:normal;color:#3090dc;transform:scaleX(1.1086);">Cassie Charles (16)</div>
<div class="t" style="left:537.18px;top:596.21px;font-size:14.68px;font-weight:normal;color:#70767d;transform:scaleX(1.0450);">38.00</div>
<div class="t" style="left:642.35px;top:596.21px;font-size:14.68px;font-weight:normal;color:#70767d;transform:scaleX(1.0450);">$1,735.58</div>
<div class="t" style="left:784.78px;top:596.21px;font-size:14.68px;font-weight:normal;color:#70767d;transform:scaleX(1.0450);">$232.00</div>
<div class="t" style="left:946.98px;top:596.21px;font-size:14.68px;font-weight:normal;color:#70767d;transform:scaleX(1.0450);">$5.00</div>
<div class="t" style="left:1050.65px;top:596.21px;font-size:14.68px;font-weight:normal;color:#70767d;transform:scaleX(1.0450);">$1,498.58</div>
<div class="t" style="left:1187.20px;top:596.21px;font-size:14.68px;font-weight:normal;color:#70767d;transform:scaleX(1.0450);">$182.24</div>
<div class="t" style="left:1275.01px;top:596.21px;font-size:14.68px;font-weight:normal;color:#70767d;transform:scaleX(1.0798);">7 May 2023</div>
<svg style="position:absolute;left:1374px;top:599px;" width="16" height="16" viewBox="0 0 16 16" fill="none"><path d="M2.2 3.6 Q2.2 1.8 4 1.8 L12.2 1.8 Q14 1.8 14 3.6 L14 9.6 Q14 11.4 12.2 11.4 L6.8 11.4 L3.2 14 L3.6 11.2 Q2.2 10.8 2.2 9.6 Z M5 5.2 L11.2 5.2 M5 7.8 L8 7.8" stroke="#d3d7dc" stroke-width="1.1" stroke-linejoin="round"/></svg>
<svg style="position:absolute;left:1395px;top:599px;" width="16" height="16" viewBox="0 0 16 16" fill="none"><path d="M9.6 14.2 L3.4 14.2 Q1.8 14.2 1.8 12.6 L1.8 4.2 Q1.8 2.6 3.4 2.6 L12.2 2.6 Q13.8 2.6 13.8 4.2 L13.8 6.2 M4.6 1.2 L4.6 3.8 M11 1.2 L11 3.8 M4.4 6.2 L11.2 6.2 M4.4 8.8 L6.2 8.8 M8.4 11.4 L14.4 11.4 M12.4 9.2 L14.6 11.4 L12.4 13.6" stroke="#d3d7dc" stroke-width="1.1" stroke-linecap="round" stroke-linejoin="round"/></svg>
<svg style="position:absolute;left:1416px;top:599px;" width="18" height="16" viewBox="0 0 18 16" fill="none"><circle cx="6.4" cy="5.2" r="3.2" stroke="#d3d7dc" stroke-width="1.1"/><circle cx="12.6" cy="7.6" r="2.3" stroke="#d3d7dc" stroke-width="1.1"/><path d="M1 14.8 Q1.6 9.6 6.4 9.6 Q11 9.6 11.8 14.8 M10.4 11.2 Q11.4 10.6 12.6 10.6 Q16.2 10.6 16.8 14.8" stroke="#d3d7dc" stroke-width="1.1" stroke-linecap="round"/></svg>
<svg style="position:absolute;left:1438px;top:599px;" width="16" height="16" viewBox="0 0 16 16" fill="none"><path d="M2 5.6 L8 2 L14 5.6 Q14 6.6 13 6.6 L3 6.6 Q2 6.6 2 5.6 Z M3.6 6.8 L3.6 11.4 M6.4 6.8 L6.4 11.4 M9.6 6.8 L9.6 11.4 M12.4 6.8 L12.4 11.4 M2.4 11.8 L13.6 11.8 Q14 11.8 14 12.6 Q14 13.6 13.2 13.6 L2.8 13.6 Q2 13.6 2 12.6 Q2 11.8 2.4 11.8 Z" stroke="#d3d7dc" stroke-width="1.1" stroke-linejoin="round"/></svg>
<svg style="position:absolute;left:1459px;top:599px;" width="16" height="17" viewBox="0 0 16 17" fill="none"><path d="M2.4 2.6 Q2.4 1.4 3.6 1.4 L12 1.4 Q13.2 1.4 13.2 2.6 L13.2 15.2 L11.8 14.2 L10.4 15.4 L9 14.2 L7.6 15.4 L6.2 14.2 L4.8 15.4 L3.6 14.2 L2.4 15.2 Z M4.8 11 L10.8 11 M4.8 9.2 L6.8 9.2 M10.6 4 Q9 3.4 8.6 4.6 Q8.6 5.6 9.8 5.8 Q11 6.1 10.8 7.2 Q10.4 8.2 8.6 7.6 M9.7 3 L9.7 8.6" stroke="#d3d7dc" stroke-width="1.1" stroke-linecap="round" stroke-linejoin="round"/></svg>
<svg style="position:absolute;left:1504px;top:599px;" width="14" height="16" viewBox="0 0 14 16" fill="none"><path d="M3.2 1.2 L8.8 1.2 L12.2 4.6 L12.2 12.6 Q12.2 14.6 10.2 14.6 L3.2 14.6 Q1.2 14.6 1.2 12.6 L1.2 3.2 Q1.2 1.2 3.2 1.2 Z" stroke="#3090dc" stroke-width="1.3" stroke-linejoin="round"/><path d="M8.6 1.4 L8.6 3.6 Q8.6 4.6 9.6 4.6 L12 4.6" stroke="#3090dc" stroke-width="1.2"/><circle cx="6.1" cy="9.1" r="3.05" fill="#3090dc"/><path d="M5.8 7.4 L5.8 9.3 L7 10.3" stroke="#fff" stroke-width="0.8" stroke-linecap="round"/></svg>
<div class="t" style="left:1520.94px;top:596.21px;font-size:14.39px;font-weight:normal;color:#3090dc;transform:scaleX(0.9800);"><span style="letter-spacing:-1.7px">1</span>7<span style="letter-spacing:-1.7px">1</span>3</div>
<div style="position:absolute;left:1614px;top:594px;width:99px;height:25px;box-sizing:border-box;border:1.2px solid #2f8fdc;border-radius:4px;background:#fff"></div>
<div style="position:absolute;left:1683px;top:594px;width:1.2px;height:25px;background:#2f8fdc"></div>
<svg style="position:absolute;left:1692px;top:602px;" width="13" height="9" viewBox="0 0 13 9" fill="none"><path d="M1.8 1.8 L6.5 6.5 L11.2 1.8" stroke="#2f8fdc" stroke-width="1.3" stroke-linecap="round" stroke-linejoin="round"/></svg>
<svg style="position:absolute;left:1622px;top:598.5px;" width="16" height="16" viewBox="0 0 16 16" fill="none"><path d="M4.2 6 L4.2 3.2 Q4.2 1.2 6.2 1.2 L11 1.2 L14.2 4.4 L14.2 12.4 Q14.2 14.4 12.2 14.4 L6.2 14.4 Q4.6 14.4 4.3 12.6" stroke="#2f8fdc" stroke-width="1.3" stroke-linejoin="round"/><path d="M10.8 1.4 L10.8 3.4 Q10.8 4.6 12 4.6 L14 4.6" stroke="#2f8fdc" stroke-width="1.2"/><rect x="1.2" y="7" width="8.8" height="5.2" rx="1.6" fill="#2f8fdc"/><path d="M2.6 11 L2.6 8.3 L3.8 8.3 Q4.5 8.3 4.5 9.1 Q4.5 9.8 3.8 9.8 L2.6 9.8 M5.5 11 L5.5 8.3 Q7.1 8.3 7.1 9.65 Q7.1 11 5.5 11 M8 11 L8 8.3 L9.3 8.3 M8 9.6 L9 9.6" stroke="#fff" stroke-width="0.6"/></svg>
<div class="t" style="left:1649.80px;top:596.01px;font-size:14.39px;font-weight:normal;color:#2f8fdc;transform:scaleX(1.0500);">687</div>
<div style="position:absolute;left:16px;top:623px;width:1705px;height:31px;background:#fff"></div>
<div style="position:absolute;left:16px;top:654px;width:1705px;height:1px;background:#dcdfe3"></div>
<div style="position:absolute;left:32px;top:631.3px;width:16px;height:16px;box-sizing:border-box;border:1.5px solid #4a4a4a;border-radius:3.5px;background:#fff"></div>
<svg style="position:absolute;left:80px;top:627px;" width="24" height="24" viewBox="0 0 24 24" fill="none"><path fill="#3e3e40" d="M12 1 C15.6 1 17.9 3.6 17.9 7.6 C17.9 10.8 16.8 12.6 15.8 13.6 L16 19.2 Q17.6 21.2 19.8 22.4 Q12 25.6 4.6 22.4 Q6.6 21.2 8.2 19.2 L8.1 14.4 C6.8 13 6.2 10.8 6.2 7.8 C6.2 3.6 8.4 1 12 1 Z"/></svg>
<div class="t" style="left:108.59px;top:626.91px;font-size:14.68px;font-weight:normal;color:#3090dc;transform:scaleX(1.1013);">Cassie Wheeler (10)</div>
<div class="t" style="left:537.18px;top:628.21px;font-size:14.68px;font-weight:normal;color:#70767d;transform:scaleX(1.0450);">38.00</div>
<div class="t" style="left:642.42px;top:628.21px;font-size:14.68px;font-weight:normal;color:#70767d;transform:scaleX(1.0450);">$2,884.61</div>
<div class="t" style="left:784.78px;top:628.21px;font-size:14.68px;font-weight:normal;color:#70767d;transform:scaleX(1.0450);">$630.00</div>
<div class="t" style="left:946.98px;top:628.21px;font-size:14.68px;font-weight:normal;color:#70767d;transform:scaleX(1.0450);">$5.00</div>
<div class="t" style="left:1050.72px;top:628.21px;font-size:14.68px;font-weight:normal;color:#70767d;transform:scaleX(1.0450);">$2,249.61</div>
<div class="t" style="left:1187.36px;top:628.21px;font-size:14.68px;font-weight:normal;color:#70767d;transform:scaleX(1.0450);">$302.88</div>
<div class="t" style="left:1275.01px;top:628.21px;font-size:14.68px;font-weight:normal;color:#70767d;transform:scaleX(1.0798);">7 May 2023</div>
<svg style="position:absolute;left:1374px;top:631px;" width="16" height="16" viewBox="0 0 16 16" fill="none"><path d="M2.2 3.6 Q2.2 1.8 4 1.8 L12.2 1.8 Q14 1.8 14 3.6 L14 9.6 Q14 11.4 12.2 11.4 L6.8 11.4 L3.2 14 L3.6 11.2 Q2.2 10.8 2.2 9.6 Z M5 5.2 L11.2 5.2 M5 7.8 L8 7.8" stroke="#d3d7dc" stroke-width="1.1" stroke-linejoin="round"/></svg>
<svg style="position:absolute;left:1395px;top:631px;" width="16" height="16" viewBox="0 0 16 16" fill="none"><path d="M9.6 14.2 L3.4 14.2 Q1.8 14.2 1.8 12.6 L1.8 4.2 Q1.8 2.6 3.4 2.6 L12.2 2.6 Q13.8 2.6 13.8 4.2 L13.8 6.2 M4.6 1.2 L4.6 3.8 M11 1.2 L11 3.8 M4.4 6.2 L11.2 6.2 M4.4 8.8 L6.2 8.8 M8.4 11.4 L14.4 11.4 M12.4 9.2 L14.6 11.4 L12.4 13.6" stroke="#d3d7dc" stroke-width="1.1" stroke-linecap="round" stroke-linejoin="round"/></svg>
<svg style="position:absolute;left:1416px;top:631px;" width="18" height="16" viewBox="0 0 18 16" fill="none"><circle cx="6.4" cy="5.2" r="3.2" stroke="#d3d7dc" stroke-width="1.1"/><circle cx="12.6" cy="7.6" r="2.3" stroke="#d3d7dc" stroke-width="1.1"/><path d="M1 14.8 Q1.6 9.6 6.4 9.6 Q11 9.6 11.8 14.8 M10.4 11.2 Q11.4 10.6 12.6 10.6 Q16.2 10.6 16.8 14.8" stroke="#d3d7dc" stroke-width="1.1" stroke-linecap="round"/></svg>
<svg style="position:absolute;left:1438px;top:631px;" width="16" height="16" viewBox="0 0 16 16" fill="none"><path d="M2 5.6 L8 2 L14 5.6 Q14 6.6 13 6.6 L3 6.6 Q2 6.6 2 5.6 Z M3.6 6.8 L3.6 11.4 M6.4 6.8 L6.4 11.4 M9.6 6.8 L9.6 11.4 M12.4 6.8 L12.4 11.4 M2.4 11.8 L13.6 11.8 Q14 11.8 14 12.6 Q14 13.6 13.2 13.6 L2.8 13.6 Q2 13.6 2 12.6 Q2 11.8 2.4 11.8 Z" stroke="#d3d7dc" stroke-width="1.1" stroke-linejoin="round"/></svg>
<svg style="position:absolute;left:1459px;top:631px;" width="16" height="17" viewBox="0 0 16 17" fill="none"><path d="M2.4 2.6 Q2.4 1.4 3.6 1.4 L12 1.4 Q13.2 1.4 13.2 2.6 L13.2 15.2 L11.8 14.2 L10.4 15.4 L9 14.2 L7.6 15.4 L6.2 14.2 L4.8 15.4 L3.6 14.2 L2.4 15.2 Z M4.8 11 L10.8 11 M4.8 9.2 L6.8 9.2 M10.6 4 Q9 3.4 8.6 4.6 Q8.6 5.6 9.8 5.8 Q11 6.1 10.8 7.2 Q10.4 8.2 8.6 7.6 M9.7 3 L9.7 8.6" stroke="#d3d7dc" stroke-width="1.1" stroke-linecap="round" stroke-linejoin="round"/></svg>
<svg style="position:absolute;left:1504px;top:631px;" width="14" height="16" viewBox="0 0 14 16" fill="none"><path d="M3.2 1.2 L8.8 1.2 L12.2 4.6 L12.2 12.6 Q12.2 14.6 10.2 14.6 L3.2 14.6 Q1.2 14.6 1.2 12.6 L1.2 3.2 Q1.2 1.2 3.2 1.2 Z" stroke="#3090dc" stroke-width="1.3" stroke-linejoin="round"/><path d="M8.6 1.4 L8.6 3.6 Q8.6 4.6 9.6 4.6 L12 4.6" stroke="#3090dc" stroke-width="1.2"/><circle cx="6.1" cy="9.1" r="3.05" fill="#3090dc"/><path d="M5.8 7.4 L5.8 9.3 L7 10.3" stroke="#fff" stroke-width="0.8" stroke-linecap="round"/></svg>
<div class="t" style="left:1520.94px;top:628.21px;font-size:14.39px;font-weight:normal;color:#3090dc;transform:scaleX(0.9800);"><span style="letter-spacing:-1.7px">1</span>7<span style="letter-spacing:-1.7px">1</span>1</div>
<div style="position:absolute;left:1614px;top:626px;width:99px;height:25px;box-sizing:border-box;border:1.2px solid #2f8fdc;border-radius:4px;background:#fff"></div>
<div style="position:absolute;left:1683px;top:626px;width:1.2px;height:25px;background:#2f8fdc"></div>
<svg style="position:absolute;left:1692px;top:634px;" width="13" height="9" viewBox="0 0 13 9" fill="none"><path d="M1.8 1.8 L6.5 6.5 L11.2 1.8" stroke="#2f8fdc" stroke-width="1.3" stroke-linecap="round" stroke-linejoin="round"/></svg>
<svg style="position:absolute;left:1622px;top:630.5px;" width="16" height="16" viewBox="0 0 16 16" fill="none"><path d="M4.2 6 L4.2 3.2 Q4.2 1.2 6.2 1.2 L11 1.2 L14.2 4.4 L14.2 12.4 Q14.2 14.4 12.2 14.4 L6.2 14.4 Q4.6 14.4 4.3 12.6" stroke="#2f8fdc" stroke-width="1.3" stroke-linejoin="round"/><path d="M10.8 1.4 L10.8 3.4 Q10.8 4.6 12 4.6 L14 4.6" stroke="#2f8fdc" stroke-width="1.2"/><rect x="1.2" y="7" width="8.8" height="5.2" rx="1.6" fill="#2f8fdc"/><path d="M2.6 11 L2.6 8.3 L3.8 8.3 Q4.5 8.3 4.5 9.1 Q4.5 9.8 3.8 9.8 L2.6 9.8 M5.5 11 L5.5 8.3 Q7.1 8.3 7.1 9.65 Q7.1 11 5.5 11 M8 11 L8 8.3 L9.3 8.3 M8 9.6 L9 9.6" stroke="#fff" stroke-width="0.6"/></svg>
<div class="t" style="left:1649.72px;top:628.01px;font-size:14.39px;font-weight:normal;color:#2f8fdc;transform:scaleX(1.0500);">679</div>
<div style="position:absolute;left:16px;top:655px;width:1705px;height:31px;background:#fff"></div>
<div style="position:absolute;left:16px;top:686px;width:1705px;height:1px;background:#dcdfe3"></div>
<div style="position:absolute;left:32px;top:663.3px;width:16px;height:16px;box-sizing:border-box;border:1.5px solid #4a4a4a;border-radius:3.5px;background:#fff"></div>
<svg style="position:absolute;left:80px;top:659px;" width="24" height="24" viewBox="0 0 24 24" fill="none"><defs><clipPath id="cav"><circle cx="12" cy="12" r="12"/></clipPath></defs><g clip-path="url(#cav)"><rect width="24" height="24" fill="#5f5e55"/><rect x="0" y="4" width="5.5" height="18" fill="#bba98f"/><rect x="17" y="6" width="7" height="14" fill="#707066"/><ellipse cx="12" cy="13.5" rx="6" ry="8" fill="#3b2d22"/><ellipse cx="12" cy="14.5" rx="2.8" ry="4" fill="#e3c2a6"/><circle cx="9" cy="7.6" r="1.8" fill="#c9579a"/><circle cx="15" cy="8" r="1.7" fill="#cf5f9c"/><circle cx="12" cy="5.6" r="2.2" fill="#c42231"/><circle cx="12.2" cy="3.4" r="1.1" fill="#f4e6ea"/><rect x="10.6" y="9" width="2.8" height="2" fill="#f0eeee"/><path d="M4.5 24 L6 17 Q12 19.5 18 17 L19.5 24 Z" fill="#121212"/><rect x="10" y="21" width="4" height="3" fill="#e6dede"/></g></svg>
<div class="t" style="left:108.56px;top:658.91px;font-size:14.68px;font-weight:normal;color:#3090dc;transform:scaleX(1.1410);">Cheyne Butler (8)</div>
<div class="t" style="left:537.18px;top:660.21px;font-size:14.68px;font-weight:normal;color:#70767d;transform:scaleX(1.0450);">38.00</div>
<div class="t" style="left:642.35px;top:660.21px;font-size:14.68px;font-weight:normal;color:#70767d;transform:scaleX(1.0450);">$1,538.46</div>
<div class="t" style="left:784.78px;top:660.21px;font-size:14.68px;font-weight:normal;color:#70767d;transform:scaleX(1.0450);">$188.00</div>
<div class="t" style="left:946.98px;top:660.21px;font-size:14.68px;font-weight:normal;color:#c4c8cc;transform:scaleX(1.0450);">$0.00</div>
<div class="t" style="left:1050.65px;top:660.21px;font-size:14.68px;font-weight:normal;color:#70767d;transform:scaleX(1.0450);">$1,350.46</div>
<div class="t" style="left:1187.20px;top:660.21px;font-size:14.68px;font-weight:normal;color:#70767d;transform:scaleX(1.0450);">$161.54</div>
<div class="t" style="left:1275.01px;top:660.21px;font-size:14.68px;font-weight:normal;color:#70767d;transform:scaleX(1.0798);">7 May 2023</div>
<svg style="position:absolute;left:1374px;top:663px;" width="16" height="16" viewBox="0 0 16 16" fill="none"><path d="M2.2 3.6 Q2.2 1.8 4 1.8 L12.2 1.8 Q14 1.8 14 3.6 L14 9.6 Q14 11.4 12.2 11.4 L6.8 11.4 L3.2 14 L3.6 11.2 Q2.2 10.8 2.2 9.6 Z M5 5.2 L11.2 5.2 M5 7.8 L8 7.8" stroke="#d3d7dc" stroke-width="1.1" stroke-linejoin="round"/></svg>
<svg style="position:absolute;left:1395px;top:663px;" width="16" height="16" viewBox="0 0 16 16" fill="none"><path d="M9.6 14.2 L3.4 14.2 Q1.8 14.2 1.8 12.6 L1.8 4.2 Q1.8 2.6 3.4 2.6 L12.2 2.6 Q13.8 2.6 13.8 4.2 L13.8 6.2 M4.6 1.2 L4.6 3.8 M11 1.2 L11 3.8 M4.4 6.2 L11.2 6.2 M4.4 8.8 L6.2 8.8 M8.4 11.4 L14.4 11.4 M12.4 9.2 L14.6 11.4 L12.4 13.6" stroke="#d3d7dc" stroke-width="1.1" stroke-linecap="round" stroke-linejoin="round"/></svg>
<svg style="position:absolute;left:1416px;top:663px;" width="18" height="16" viewBox="0 0 18 16" fill="none"><circle cx="6.4" cy="5.2" r="3.2" stroke="#d3d7dc" stroke-width="1.1"/><circle cx="12.6" cy="7.6" r="2.3" stroke="#d3d7dc" stroke-width="1.1"/><path d="M1 14.8 Q1.6 9.6 6.4 9.6 Q11 9.6 11.8 14.8 M10.4 11.2 Q11.4 10.6 12.6 10.6 Q16.2 10.6 16.8 14.8" stroke="#d3d7dc" stroke-width="1.1" stroke-linecap="round"/></svg>
<svg style="position:absolute;left:1438px;top:663px;" width="16" height="16" viewBox="0 0 16 16" fill="none"><path d="M2 5.6 L8 2 L14 5.6 Q14 6.6 13 6.6 L3 6.6 Q2 6.6 2 5.6 Z M3.6 6.8 L3.6 11.4 M6.4 6.8 L6.4 11.4 M9.6 6.8 L9.6 11.4 M12.4 6.8 L12.4 11.4 M2.4 11.8 L13.6 11.8 Q14 11.8 14 12.6 Q14 13.6 13.2 13.6 L2.8 13.6 Q2 13.6 2 12.6 Q2 11.8 2.4 11.8 Z" stroke="#d3d7dc" stroke-width="1.1" stroke-linejoin="round"/></svg>
<svg style="position:absolute;left:1459px;top:663px;" width="16" height="17" viewBox="0 0 16 17" fill="none"><path d="M2.4 2.6 Q2.4 1.4 3.6 1.4 L12 1.4 Q13.2 1.4 13.2 2.6 L13.2 15.2 L11.8 14.2 L10.4 15.4 L9 14.2 L7.6 15.4 L6.2 14.2 L4.8 15.4 L3.6 14.2 L2.4 15.2 Z M4.8 11 L10.8 11 M4.8 9.2 L6.8 9.2 M10.6 4 Q9 3.4 8.6 4.6 Q8.6 5.6 9.8 5.8 Q11 6.1 10.8 7.2 Q10.4 8.2 8.6 7.6 M9.7 3 L9.7 8.6" stroke="#d3d7dc" stroke-width="1.1" stroke-linecap="round" stroke-linejoin="round"/></svg>
<svg style="position:absolute;left:1504px;top:663px;" width="14" height="16" viewBox="0 0 14 16" fill="none"><path d="M3.2 1.2 L8.8 1.2 L12.2 4.6 L12.2 12.6 Q12.2 14.6 10.2 14.6 L3.2 14.6 Q1.2 14.6 1.2 12.6 L1.2 3.2 Q1.2 1.2 3.2 1.2 Z" stroke="#3090dc" stroke-width="1.3" stroke-linejoin="round"/><path d="M8.6 1.4 L8.6 3.6 Q8.6 4.6 9.6 4.6 L12 4.6" stroke="#3090dc" stroke-width="1.2"/><circle cx="6.1" cy="9.1" r="3.05" fill="#3090dc"/><path d="M5.8 7.4 L5.8 9.3 L7 10.3" stroke="#fff" stroke-width="0.8" stroke-linecap="round"/></svg>
<div class="t" style="left:1520.94px;top:660.21px;font-size:14.39px;font-weight:normal;color:#3090dc;transform:scaleX(0.9800);"><span style="letter-spacing:-1.7px">1</span>701</div>
<div style="position:absolute;left:1614px;top:658px;width:99px;height:25px;box-sizing:border-box;border:1.2px solid #2f8fdc;border-radius:4px;background:#fff"></div>
<div style="position:absolute;left:1683px;top:658px;width:1.2px;height:25px;background:#2f8fdc"></div>
<svg style="position:absolute;left:1692px;top:666px;" width="13" height="9" viewBox="0 0 13 9" fill="none"><path d="M1.8 1.8 L6.5 6.5 L11.2 1.8" stroke="#2f8fdc" stroke-width="1.3" stroke-linecap="round" stroke-linejoin="round"/></svg>
<svg style="position:absolute;left:1622px;top:662.5px;" width="16" height="16" viewBox="0 0 16 16" fill="none"><path d="M4.2 6 L4.2 3.2 Q4.2 1.2 6.2 1.2 L11 1.2 L14.2 4.4 L14.2 12.4 Q14.2 14.4 12.2 14.4 L6.2 14.4 Q4.6 14.4 4.3 12.6" stroke="#2f8fdc" stroke-width="1.3" stroke-linejoin="round"/><path d="M10.8 1.4 L10.8 3.4 Q10.8 4.6 12 4.6 L14 4.6" stroke="#2f8fdc" stroke-width="1.2"/><rect x="1.2" y="7" width="8.8" height="5.2" rx="1.6" fill="#2f8fdc"/><path d="M2.6 11 L2.6 8.3 L3.8 8.3 Q4.5 8.3 4.5 9.1 Q4.5 9.8 3.8 9.8 L2.6 9.8 M5.5 11 L5.5 8.3 Q7.1 8.3 7.1 9.65 Q7.1 11 5.5 11 M8 11 L8 8.3 L9.3 8.3 M8 9.6 L9 9.6" stroke="#fff" stroke-width="0.6"/></svg>
<div class="t" style="left:1649.72px;top:660.01px;font-size:14.39px;font-weight:normal;color:#2f8fdc;transform:scaleX(1.0500);">681</div>
<div style="position:absolute;left:16px;top:687px;width:1705px;height:31px;background:#fff"></div>
<div style="position:absolute;left:16px;top:718px;width:1705px;height:1px;background:#dcdfe3"></div>
<div style="position:absolute;left:32px;top:695.3px;width:16px;height:16px;box-sizing:border-box;border:1.5px solid #4a4a4a;border-radius:3.5px;background:#fff"></div>
<svg style="position:absolute;left:80px;top:691px;" width="24" height="24" viewBox="0 0 24 24" fill="none"><path fill="#3e3e40" d="M12 1 C15.6 1 17.9 3.6 17.9 7.6 C17.9 10.8 16.8 12.6 15.8 13.6 L16 19.2 Q17.6 21.2 19.8 22.4 Q12 25.6 4.6 22.4 Q6.6 21.2 8.2 19.2 L8.1 14.4 C6.8 13 6.2 10.8 6.2 7.8 C6.2 3.6 8.4 1 12 1 Z"/></svg>
<div class="t" style="left:108.55px;top:690.91px;font-size:14.68px;font-weight:normal;color:#3090dc;transform:scaleX(1.1524);">Clair Twill (3)</div>
<div class="t" style="left:537.18px;top:692.21px;font-size:14.68px;font-weight:normal;color:#70767d;transform:scaleX(1.0450);">20.00</div>
<div class="t" style="left:655.31px;top:692.21px;font-size:14.68px;font-weight:normal;color:#70767d;transform:scaleX(1.0450);">$809.72</div>
<div class="t" style="left:793.29px;top:692.21px;font-size:14.68px;font-weight:normal;color:#70767d;transform:scaleX(1.0450);">$18.00</div>
<div class="t" style="left:946.98px;top:692.21px;font-size:14.68px;font-weight:normal;color:#70767d;transform:scaleX(1.0450);">$5.00</div>
<div class="t" style="left:1063.61px;top:692.21px;font-size:14.68px;font-weight:normal;color:#70767d;transform:scaleX(1.0450);">$786.72</div>
<div class="t" style="left:1196.02px;top:692.21px;font-size:14.68px;font-weight:normal;color:#70767d;transform:scaleX(1.0450);">$85.02</div>
<div class="t" style="left:1275.01px;top:692.21px;font-size:14.68px;font-weight:normal;color:#70767d;transform:scaleX(1.0798);">7 May 2023</div>
<svg style="position:absolute;left:1374px;top:695px;" width="16" height="16" viewBox="0 0 16 16" fill="none"><path d="M2.2 3.6 Q2.2 1.8 4 1.8 L12.2 1.8 Q14 1.8 14 3.6 L14 9.6 Q14 11.4 12.2 11.4 L6.8 11.4 L3.2 14 L3.6 11.2 Q2.2 10.8 2.2 9.6 Z M5 5.2 L11.2 5.2 M5 7.8 L8 7.8" stroke="#d3d7dc" stroke-width="1.1" stroke-linejoin="round"/></svg>
<svg style="position:absolute;left:1395px;top:695px;" width="16" height="16" viewBox="0 0 16 16" fill="none"><path d="M9.6 14.2 L3.4 14.2 Q1.8 14.2 1.8 12.6 L1.8 4.2 Q1.8 2.6 3.4 2.6 L12.2 2.6 Q13.8 2.6 13.8 4.2 L13.8 6.2 M4.6 1.2 L4.6 3.8 M11 1.2 L11 3.8 M4.4 6.2 L11.2 6.2 M4.4 8.8 L6.2 8.8 M8.4 11.4 L14.4 11.4 M12.4 9.2 L14.6 11.4 L12.4 13.6" stroke="#d3d7dc" stroke-width="1.1" stroke-linecap="round" stroke-linejoin="round"/></svg>
<svg style="position:absolute;left:1416px;top:695px;" width="18" height="16" viewBox="0 0 18 16" fill="none"><circle cx="6.4" cy="5.2" r="3.2" stroke="#d3d7dc" stroke-width="1.1"/><circle cx="12.6" cy="7.6" r="2.3" stroke="#d3d7dc" stroke-width="1.1"/><path d="M1 14.8 Q1.6 9.6 6.4 9.6 Q11 9.6 11.8 14.8 M10.4 11.2 Q11.4 10.6 12.6 10.6 Q16.2 10.6 16.8 14.8" stroke="#d3d7dc" stroke-width="1.1" stroke-linecap="round"/></svg>
<svg style="position:absolute;left:1438px;top:695px;" width="16" height="16" viewBox="0 0 16 16" fill="none"><path d="M2 5.6 L8 2 L14 5.6 Q14 6.6 13 6.6 L3 6.6 Q2 6.6 2 5.6 Z M3.6 6.8 L3.6 11.4 M6.4 6.8 L6.4 11.4 M9.6 6.8 L9.6 11.4 M12.4 6.8 L12.4 11.4 M2.4 11.8 L13.6 11.8 Q14 11.8 14 12.6 Q14 13.6 13.2 13.6 L2.8 13.6 Q2 13.6 2 12.6 Q2 11.8 2.4 11.8 Z" stroke="#d3d7dc" stroke-width="1.1" stroke-linejoin="round"/></svg>
<svg style="position:absolute;left:1459px;top:695px;" width="16" height="17" viewBox="0 0 16 17" fill="none"><path d="M2.4 2.6 Q2.4 1.4 3.6 1.4 L12 1.4 Q13.2 1.4 13.2 2.6 L13.2 15.2 L11.8 14.2 L10.4 15.4 L9 14.2 L7.6 15.4 L6.2 14.2 L4.8 15.4 L3.6 14.2 L2.4 15.2 Z M4.8 11 L10.8 11 M4.8 9.2 L6.8 9.2 M10.6 4 Q9 3.4 8.6 4.6 Q8.6 5.6 9.8 5.8 Q11 6.1 10.8 7.2 Q10.4 8.2 8.6 7.6 M9.7 3 L9.7 8.6" stroke="#d3d7dc" stroke-width="1.1" stroke-linecap="round" stroke-linejoin="round"/></svg>
<svg style="position:absolute;left:1504px;top:695px;" width="14" height="16" viewBox="0 0 14 16" fill="none"><path d="M3.2 1.2 L8.8 1.2 L12.2 4.6 L12.2 12.6 Q12.2 14.6 10.2 14.6 L3.2 14.6 Q1.2 14.6 1.2 12.6 L1.2 3.2 Q1.2 1.2 3.2 1.2 Z" stroke="#3090dc" stroke-width="1.3" stroke-linejoin="round"/><path d="M8.6 1.4 L8.6 3.6 Q8.6 4.6 9.6 4.6 L12 4.6" stroke="#3090dc" stroke-width="1.2"/><circle cx="6.1" cy="9.1" r="3.05" fill="#3090dc"/><path d="M5.8 7.4 L5.8 9.3 L7 10.3" stroke="#fff" stroke-width="0.8" stroke-linecap="round"/></svg>
<div class="t" style="left:1520.94px;top:692.21px;font-size:14.39px;font-weight:normal;color:#3090dc;transform:scaleX(0.9800);"><span style="letter-spacing:-1.7px">1</span>709</div>
<div style="position:absolute;left:1614px;top:690px;width:99px;height:25px;box-sizing:border-box;border:1.2px solid #2f8fdc;border-radius:4px;background:#fff"></div>
<div style="position:absolute;left:1683px;top:690px;width:1.2px;height:25px;background:#2f8fdc"></div>
<svg style="position:absolute;left:1692px;top:698px;" width="13" height="9" viewBox="0 0 13 9" fill="none"><path d="M1.8 1.8 L6.5 6.5 L11.2 1.8" stroke="#2f8fdc" stroke-width="1.3" stroke-linecap="round" stroke-linejoin="round"/></svg>
<svg style="position:absolute;left:1622px;top:694.5px;" width="16" height="16" viewBox="0 0 16 16" fill="none"><path d="M4.2 6 L4.2 3.2 Q4.2 1.2 6.2 1.2 L11 1.2 L14.2 4.4 L14.2 12.4 Q14.2 14.4 12.2 14.4 L6.2 14.4 Q4.6 14.4 4.3 12.6" stroke="#2f8fdc" stroke-width="1.3" stroke-linejoin="round"/><path d="M10.8 1.4 L10.8 3.4 Q10.8 4.6 12 4.6 L14 4.6" stroke="#2f8fdc" stroke-width="1.2"/><rect x="1.2" y="7" width="8.8" height="5.2" rx="1.6" fill="#2f8fdc"/><path d="M2.6 11 L2.6 8.3 L3.8 8.3 Q4.5 8.3 4.5 9.1 Q4.5 9.8 3.8 9.8 L2.6 9.8 M5.5 11 L5.5 8.3 Q7.1 8.3 7.1 9.65 Q7.1 11 5.5 11 M8 11 L8 8.3 L9.3 8.3 M8 9.6 L9 9.6" stroke="#fff" stroke-width="0.6"/></svg>
<div class="t" style="left:1649.65px;top:692.01px;font-size:14.39px;font-weight:normal;color:#2f8fdc;transform:scaleX(1.0500);">688</div>
<div style="position:absolute;left:16px;top:719px;width:1705px;height:31px;background:#fff"></div>
<div style="position:absolute;left:16px;top:750px;width:1705px;height:1px;background:#dcdfe3"></div>
<div style="position:absolute;left:32px;top:727.3px;width:16px;height:16px;box-sizing:border-box;border:1.5px solid #4a4a4a;border-radius:3.5px;background:#fff"></div>
<svg style="position:absolute;left:80px;top:723px;" width="24" height="24" viewBox="0 0 24 24" fill="none"><path fill="#3e3e40" d="M12 1 C15.6 1 17.9 3.6 17.9 7.6 C17.9 10.8 16.8 12.6 15.8 13.6 L16 19.2 Q17.6 21.2 19.8 22.4 Q12 25.6 4.6 22.4 Q6.6 21.2 8.2 19.2 L8.1 14.4 C6.8 13 6.2 10.8 6.2 7.8 C6.2 3.6 8.4 1 12 1 Z"/></svg>
<div class="t" style="left:108.06px;top:722.91px;font-size:14.68px;font-weight:normal;color:#3090dc;transform:scaleX(1.1373);">Duc Nguyen (20)</div>
<div class="t" style="left:537.18px;top:724.21px;font-size:14.68px;font-weight:normal;color:#70767d;transform:scaleX(1.0450);">38.00</div>
<div class="t" style="left:642.50px;top:724.21px;font-size:14.68px;font-weight:normal;color:#70767d;transform:scaleX(1.0450);">$1,826.92</div>
<div class="t" style="left:784.78px;top:724.21px;font-size:14.68px;font-weight:normal;color:#70767d;transform:scaleX(1.0450);">$264.00</div>
<div class="t" style="left:946.98px;top:724.21px;font-size:14.68px;font-weight:normal;color:#70767d;transform:scaleX(1.0450);">$5.00</div>
<div class="t" style="left:1050.80px;top:724.21px;font-size:14.68px;font-weight:normal;color:#70767d;transform:scaleX(1.0450);">$1,557.92</div>
<div class="t" style="left:1187.36px;top:724.21px;font-size:14.68px;font-weight:normal;color:#70767d;transform:scaleX(1.0450);">$191.83</div>
<div class="t" style="left:1275.01px;top:724.21px;font-size:14.68px;font-weight:normal;color:#70767d;transform:scaleX(1.0798);">7 May 2023</div>
<svg style="position:absolute;left:1374px;top:727px;" width="16" height="16" viewBox="0 0 16 16" fill="none"><path d="M2.2 3.6 Q2.2 1.8 4 1.8 L12.2 1.8 Q14 1.8 14 3.6 L14 9.6 Q14 11.4 12.2 11.4 L6.8 11.4 L3.2 14 L3.6 11.2 Q2.2 10.8 2.2 9.6 Z M5 5.2 L11.2 5.2 M5 7.8 L8 7.8" stroke="#d3d7dc" stroke-width="1.1" stroke-linejoin="round"/></svg>
<svg style="position:absolute;left:1395px;top:727px;" width="16" height="16" viewBox="0 0 16 16" fill="none"><path d="M9.6 14.2 L3.4 14.2 Q1.8 14.2 1.8 12.6 L1.8 4.2 Q1.8 2.6 3.4 2.6 L12.2 2.6 Q13.8 2.6 13.8 4.2 L13.8 6.2 M4.6 1.2 L4.6 3.8 M11 1.2 L11 3.8 M4.4 6.2 L11.2 6.2 M4.4 8.8 L6.2 8.8 M8.4 11.4 L14.4 11.4 M12.4 9.2 L14.6 11.4 L12.4 13.6" stroke="#d3d7dc" stroke-width="1.1" stroke-linecap="round" stroke-linejoin="round"/></svg>
<svg style="position:absolute;left:1416px;top:727px;" width="18" height="16" viewBox="0 0 18 16" fill="none"><circle cx="6.4" cy="5.2" r="3.2" stroke="#d3d7dc" stroke-width="1.1"/><circle cx="12.6" cy="7.6" r="2.3" stroke="#d3d7dc" stroke-width="1.1"/><path d="M1 14.8 Q1.6 9.6 6.4 9.6 Q11 9.6 11.8 14.8 M10.4 11.2 Q11.4 10.6 12.6 10.6 Q16.2 10.6 16.8 14.8" stroke="#d3d7dc" stroke-width="1.1" stroke-linecap="round"/></svg>
<svg style="position:absolute;left:1438px;top:727px;" width="16" height="16" viewBox="0 0 16 16" fill="none"><path d="M2 5.6 L8 2 L14 5.6 Q14 6.6 13 6.6 L3 6.6 Q2 6.6 2 5.6 Z M3.6 6.8 L3.6 11.4 M6.4 6.8 L6.4 11.4 M9.6 6.8 L9.6 11.4 M12.4 6.8 L12.4 11.4 M2.4 11.8 L13.6 11.8 Q14 11.8 14 12.6 Q14 13.6 13.2 13.6 L2.8 13.6 Q2 13.6 2 12.6 Q2 11.8 2.4 11.8 Z" stroke="#d3d7dc" stroke-width="1.1" stroke-linejoin="round"/></svg>
<svg style="position:absolute;left:1459px;top:727px;" width="16" height="17" viewBox="0 0 16 17" fill="none"><path d="M2.4 2.6 Q2.4 1.4 3.6 1.4 L12 1.4 Q13.2 1.4 13.2 2.6 L13.2 15.2 L11.8 14.2 L10.4 15.4 L9 14.2 L7.6 15.4 L6.2 14.2 L4.8 15.4 L3.6 14.2 L2.4 15.2 Z M4.8 11 L10.8 11 M4.8 9.2 L6.8 9.2 M10.6 4 Q9 3.4 8.6 4.6 Q8.6 5.6 9.8 5.8 Q11 6.1 10.8 7.2 Q10.4 8.2 8.6 7.6 M9.7 3 L9.7 8.6" stroke="#d3d7dc" stroke-width="1.1" stroke-linecap="round" stroke-linejoin="round"/></svg>
<svg style="position:absolute;left:1504px;top:727px;" width="14" height="16" viewBox="0 0 14 16" fill="none"><path d="M3.2 1.2 L8.8 1.2 L12.2 4.6 L12.2 12.6 Q12.2 14.6 10.2 14.6 L3.2 14.6 Q1.2 14.6 1.2 12.6 L1.2 3.2 Q1.2 1.2 3.2 1.2 Z" stroke="#3090dc" stroke-width="1.3" stroke-linejoin="round"/><path d="M8.6 1.4 L8.6 3.6 Q8.6 4.6 9.6 4.6 L12 4.6" stroke="#3090dc" stroke-width="1.2"/><circle cx="6.1" cy="9.1" r="3.05" fill="#3090dc"/><path d="M5.8 7.4 L5.8 9.3 L7 10.3" stroke="#fff" stroke-width="0.8" stroke-linecap="round"/></svg>
<div class="t" style="left:1520.94px;top:724.21px;font-size:14.39px;font-weight:normal;color:#3090dc;transform:scaleX(0.9800);"><span style="letter-spacing:-1.7px">1</span>7<span style="letter-spacing:-1.7px">1</span>4</div>
<div style="position:absolute;left:1614px;top:722px;width:99px;height:25px;box-sizing:border-box;border:1.2px solid #2f8fdc;border-radius:4px;background:#fff"></div>
<div style="position:absolute;left:1683px;top:722px;width:1.2px;height:25px;background:#2f8fdc"></div>
<svg style="position:absolute;left:1692px;top:730px;" width="13" height="9" viewBox="0 0 13 9" fill="none"><path d="M1.8 1.8 L6.5 6.5 L11.2 1.8" stroke="#2f8fdc" stroke-width="1.3" stroke-linecap="round" stroke-linejoin="round"/></svg>
<svg style="position:absolute;left:1622px;top:726.5px;" width="16" height="16" viewBox="0 0 16 16" fill="none"><path d="M4.2 6 L4.2 3.2 Q4.2 1.2 6.2 1.2 L11 1.2 L14.2 4.4 L14.2 12.4 Q14.2 14.4 12.2 14.4 L6.2 14.4 Q4.6 14.4 4.3 12.6" stroke="#2f8fdc" stroke-width="1.3" stroke-linejoin="round"/><path d="M10.8 1.4 L10.8 3.4 Q10.8 4.6 12 4.6 L14 4.6" stroke="#2f8fdc" stroke-width="1.2"/><rect x="1.2" y="7" width="8.8" height="5.2" rx="1.6" fill="#2f8fdc"/><path d="M2.6 11 L2.6 8.3 L3.8 8.3 Q4.5 8.3 4.5 9.1 Q4.5 9.8 3.8 9.8 L2.6 9.8 M5.5 11 L5.5 8.3 Q7.1 8.3 7.1 9.65 Q7.1 11 5.5 11 M8 11 L8 8.3 L9.3 8.3 M8 9.6 L9 9.6" stroke="#fff" stroke-width="0.6"/></svg>
<div class="t" style="left:1649.50px;top:724.01px;font-size:14.39px;font-weight:normal;color:#2f8fdc;transform:scaleX(1.0500);">694</div>
<div style="position:absolute;left:16px;top:751px;width:1705px;height:31px;background:#fff"></div>
<div style="position:absolute;left:16px;top:782px;width:1705px;height:1px;background:#dcdfe3"></div>
<div style="position:absolute;left:32px;top:759.3px;width:16px;height:16px;box-sizing:border-box;border:1.5px solid #4a4a4a;border-radius:3.5px;background:#fff"></div>
<svg style="position:absolute;left:80px;top:755px;" width="24" height="24" viewBox="0 0 24 24" fill="none"><path fill="#3e3e40" d="M12 1 C15.6 1 17.9 3.6 17.9 7.6 C17.9 10.8 16.8 12.6 15.8 13.6 L16 19.2 Q17.6 21.2 19.8 22.4 Q12 25.6 4.6 22.4 Q6.6 21.2 8.2 19.2 L8.1 14.4 C6.8 13 6.2 10.8 6.2 7.8 C6.2 3.6 8.4 1 12 1 Z"/></svg>
<div class="t" style="left:109.15px;top:754.91px;font-size:14.68px;font-weight:normal;color:#3090dc;transform:scaleX(1.1324);">Jacinita Samuel (103)</div>
<div class="t" style="left:537.18px;top:756.21px;font-size:14.68px;font-weight:normal;color:#70767d;transform:scaleX(1.0450);">21.00</div>
<div class="t" style="left:655.08px;top:756.21px;font-size:14.68px;font-weight:normal;color:#70767d;transform:scaleX(1.0450);">$823.20</div>
<div class="t" style="left:793.29px;top:756.21px;font-size:14.68px;font-weight:normal;color:#70767d;transform:scaleX(1.0450);">$20.00</div>
<div class="t" style="left:946.98px;top:756.21px;font-size:14.68px;font-weight:normal;color:#c4c8cc;transform:scaleX(1.0450);">$0.00</div>
<div class="t" style="left:1063.38px;top:756.21px;font-size:14.68px;font-weight:normal;color:#70767d;transform:scaleX(1.0450);">$803.20</div>
<div class="t" style="left:1195.72px;top:756.21px;font-size:14.68px;font-weight:normal;color:#70767d;transform:scaleX(1.0450);">$86.44</div>
<div class="t" style="left:1275.01px;top:756.21px;font-size:14.68px;font-weight:normal;color:#70767d;transform:scaleX(1.0798);">7 May 2023</div>
<svg style="position:absolute;left:1374px;top:759px;" width="16" height="16" viewBox="0 0 16 16" fill="none"><path d="M2.2 3.6 Q2.2 1.8 4 1.8 L12.2 1.8 Q14 1.8 14 3.6 L14 9.6 Q14 11.4 12.2 11.4 L6.8 11.4 L3.2 14 L3.6 11.2 Q2.2 10.8 2.2 9.6 Z M5 5.2 L11.2 5.2 M5 7.8 L8 7.8" stroke="#d3d7dc" stroke-width="1.1" stroke-linejoin="round"/></svg>
<svg style="position:absolute;left:1395px;top:759px;" width="16" height="16" viewBox="0 0 16 16" fill="none"><path d="M9.6 14.2 L3.4 14.2 Q1.8 14.2 1.8 12.6 L1.8 4.2 Q1.8 2.6 3.4 2.6 L12.2 2.6 Q13.8 2.6 13.8 4.2 L13.8 6.2 M4.6 1.2 L4.6 3.8 M11 1.2 L11 3.8 M4.4 6.2 L11.2 6.2 M4.4 8.8 L6.2 8.8 M8.4 11.4 L14.4 11.4 M12.4 9.2 L14.6 11.4 L12.4 13.6" stroke="#d3d7dc" stroke-width="1.1" stroke-linecap="round" stroke-linejoin="round"/></svg>
<svg style="position:absolute;left:1416px;top:759px;" width="18" height="16" viewBox="0 0 18 16" fill="none"><circle cx="6.4" cy="5.2" r="3.2" stroke="#d3d7dc" stroke-width="1.1"/><circle cx="12.6" cy="7.6" r="2.3" stroke="#d3d7dc" stroke-width="1.1"/><path d="M1 14.8 Q1.6 9.6 6.4 9.6 Q11 9.6 11.8 14.8 M10.4 11.2 Q11.4 10.6 12.6 10.6 Q16.2 10.6 16.8 14.8" stroke="#d3d7dc" stroke-width="1.1" stroke-linecap="round"/></svg>
<svg style="position:absolute;left:1438px;top:759px;" width="16" height="16" viewBox="0 0 16 16" fill="none"><path d="M2 5.6 L8 2 L14 5.6 Q14 6.6 13 6.6 L3 6.6 Q2 6.6 2 5.6 Z M3.6 6.8 L3.6 11.4 M6.4 6.8 L6.4 11.4 M9.6 6.8 L9.6 11.4 M12.4 6.8 L12.4 11.4 M2.4 11.8 L13.6 11.8 Q14 11.8 14 12.6 Q14 13.6 13.2 13.6 L2.8 13.6 Q2 13.6 2 12.6 Q2 11.8 2.4 11.8 Z" stroke="#d3d7dc" stroke-width="1.1" stroke-linejoin="round"/></svg>
<svg style="position:absolute;left:1459px;top:759px;" width="16" height="17" viewBox="0 0 16 17" fill="none"><path d="M2.4 2.6 Q2.4 1.4 3.6 1.4 L12 1.4 Q13.2 1.4 13.2 2.6 L13.2 15.2 L11.8 14.2 L10.4 15.4 L9 14.2 L7.6 15.4 L6.2 14.2 L4.8 15.4 L3.6 14.2 L2.4 15.2 Z M4.8 11 L10.8 11 M4.8 9.2 L6.8 9.2 M10.6 4 Q9 3.4 8.6 4.6 Q8.6 5.6 9.8 5.8 Q11 6.1 10.8 7.2 Q10.4 8.2 8.6 7.6 M9.7 3 L9.7 8.6" stroke="#d3d7dc" stroke-width="1.1" stroke-linecap="round" stroke-linejoin="round"/></svg>
<svg style="position:absolute;left:1504px;top:759px;" width="14" height="16" viewBox="0 0 14 16" fill="none"><path d="M3.2 1.2 L8.8 1.2 L12.2 4.6 L12.2 12.6 Q12.2 14.6 10.2 14.6 L3.2 14.6 Q1.2 14.6 1.2 12.6 L1.2 3.2 Q1.2 1.2 3.2 1.2 Z" stroke="#3090dc" stroke-width="1.3" stroke-linejoin="round"/><path d="M8.6 1.4 L8.6 3.6 Q8.6 4.6 9.6 4.6 L12 4.6" stroke="#3090dc" stroke-width="1.2"/><circle cx="6.1" cy="9.1" r="3.05" fill="#3090dc"/><path d="M5.8 7.4 L5.8 9.3 L7 10.3" stroke="#fff" stroke-width="0.8" stroke-linecap="round"/></svg>
<div class="t" style="left:1520.94px;top:756.21px;font-size:14.39px;font-weight:normal;color:#3090dc;transform:scaleX(0.9800);"><span style="letter-spacing:-1.7px">1</span>7<span style="letter-spacing:-1.7px">1</span>6</div>
<div style="position:absolute;left:1614px;top:754px;width:99px;height:25px;box-sizing:border-box;border:1.2px solid #2f8fdc;border-radius:4px;background:#fff"></div>
<div style="position:absolute;left:1683px;top:754px;width:1.2px;height:25px;background:#2f8fdc"></div>
<svg style="position:absolute;left:1692px;top:762px;" width="13" height="9" viewBox="0 0 13 9" fill="none"><path d="M1.8 1.8 L6.5 6.5 L11.2 1.8" stroke="#2f8fdc" stroke-width="1.3" stroke-linecap="round" stroke-linejoin="round"/></svg>
<svg style="position:absolute;left:1622px;top:758.5px;" width="16" height="16" viewBox="0 0 16 16" fill="none"><path d="M4.2 6 L4.2 3.2 Q4.2 1.2 6.2 1.2 L11 1.2 L14.2 4.4 L14.2 12.4 Q14.2 14.4 12.2 14.4 L6.2 14.4 Q4.6 14.4 4.3 12.6" stroke="#2f8fdc" stroke-width="1.3" stroke-linejoin="round"/><path d="M10.8 1.4 L10.8 3.4 Q10.8 4.6 12 4.6 L14 4.6" stroke="#2f8fdc" stroke-width="1.2"/><rect x="1.2" y="7" width="8.8" height="5.2" rx="1.6" fill="#2f8fdc"/><path d="M2.6 11 L2.6 8.3 L3.8 8.3 Q4.5 8.3 4.5 9.1 Q4.5 9.8 3.8 9.8 L2.6 9.8 M5.5 11 L5.5 8.3 Q7.1 8.3 7.1 9.65 Q7.1 11 5.5 11 M8 11 L8 8.3 L9.3 8.3 M8 9.6 L9 9.6" stroke="#fff" stroke-width="0.6"/></svg>
<div class="t" style="left:1649.80px;top:756.01px;font-size:14.39px;font-weight:normal;color:#2f8fdc;transform:scaleX(1.0500);">697</div>
<div style="position:absolute;left:16px;top:783px;width:1705px;height:31px;background:#fff"></div>
<div style="position:absolute;left:16px;top:814px;width:1705px;height:1px;background:#dcdfe3"></div>
<div style="position:absolute;left:32px;top:791.3px;width:16px;height:16px;box-sizing:border-box;border:1.5px solid #4a4a4a;border-radius:3.5px;background:#fff"></div>
<svg style="position:absolute;left:80px;top:787px;" width="24" height="24" viewBox="0 0 24 24" fill="none"><path fill="#3e3e40" d="M12 1 C15.6 1 17.9 3.6 17.9 7.6 C17.9 10.8 16.8 12.6 15.8 13.6 L16 19.2 Q17.6 21.2 19.8 22.4 Q12 25.6 4.6 22.4 Q6.6 21.2 8.2 19.2 L8.1 14.4 C6.8 13 6.2 10.8 6.2 7.8 C6.2 3.6 8.4 1 12 1 Z"/></svg>
<div class="t" style="left:108.07px;top:786.91px;font-size:14.68px;font-weight:normal;color:#3090dc;transform:scaleX(1.1303);">Kara Willow (23)</div>
<div class="t" style="left:537.18px;top:788.21px;font-size:14.68px;font-weight:normal;color:#70767d;transform:scaleX(1.0450);">38.00</div>
<div class="t" style="left:642.50px;top:788.21px;font-size:14.68px;font-weight:normal;color:#70767d;transform:scaleX(1.0450);">$1,730.77</div>
<div class="t" style="left:784.78px;top:788.21px;font-size:14.68px;font-weight:normal;color:#70767d;transform:scaleX(1.0450);">$230.00</div>
<div class="t" style="left:946.98px;top:788.21px;font-size:14.68px;font-weight:normal;color:#c4c8cc;transform:scaleX(1.0450);">$0.00</div>
<div class="t" style="left:1050.80px;top:788.21px;font-size:14.68px;font-weight:normal;color:#70767d;transform:scaleX(1.0450);">$1,500.77</div>
<div class="t" style="left:1187.36px;top:788.21px;font-size:14.68px;font-weight:normal;color:#70767d;transform:scaleX(1.0450);">$181.73</div>
<div class="t" style="left:1275.01px;top:788.21px;font-size:14.68px;font-weight:normal;color:#70767d;transform:scaleX(1.0798);">7 May 2023</div>
<svg style="position:absolute;left:1374px;top:791px;" width="16" height="16" viewBox="0 0 16 16" fill="none"><path d="M2.2 3.6 Q2.2 1.8 4 1.8 L12.2 1.8 Q14 1.8 14 3.6 L14 9.6 Q14 11.4 12.2 11.4 L6.8 11.4 L3.2 14 L3.6 11.2 Q2.2 10.8 2.2 9.6 Z M5 5.2 L11.2 5.2 M5 7.8 L8 7.8" stroke="#d3d7dc" stroke-width="1.1" stroke-linejoin="round"/></svg>
<svg style="position:absolute;left:1395px;top:791px;" width="16" height="16" viewBox="0 0 16 16" fill="none"><path d="M9.6 14.2 L3.4 14.2 Q1.8 14.2 1.8 12.6 L1.8 4.2 Q1.8 2.6 3.4 2.6 L12.2 2.6 Q13.8 2.6 13.8 4.2 L13.8 6.2 M4.6 1.2 L4.6 3.8 M11 1.2 L11 3.8 M4.4 6.2 L11.2 6.2 M4.4 8.8 L6.2 8.8 M8.4 11.4 L14.4 11.4 M12.4 9.2 L14.6 11.4 L12.4 13.6" stroke="#d3d7dc" stroke-width="1.1" stroke-linecap="round" stroke-linejoin="round"/></svg>
<svg style="position:absolute;left:1416px;top:791px;" width="18" height="16" viewBox="0 0 18 16" fill="none"><circle cx="6.4" cy="5.2" r="3.2" stroke="#d3d7dc" stroke-width="1.1"/><circle cx="12.6" cy="7.6" r="2.3" stroke="#d3d7dc" stroke-width="1.1"/><path d="M1 14.8 Q1.6 9.6 6.4 9.6 Q11 9.6 11.8 14.8 M10.4 11.2 Q11.4 10.6 12.6 10.6 Q16.2 10.6 16.8 14.8" stroke="#d3d7dc" stroke-width="1.1" stroke-linecap="round"/></svg>
<svg style="position:absolute;left:1438px;top:791px;" width="16" height="16" viewBox="0 0 16 16" fill="none"><path d="M2 5.6 L8 2 L14 5.6 Q14 6.6 13 6.6 L3 6.6 Q2 6.6 2 5.6 Z M3.6 6.8 L3.6 11.4 M6.4 6.8 L6.4 11.4 M9.6 6.8 L9.6 11.4 M12.4 6.8 L12.4 11.4 M2.4 11.8 L13.6 11.8 Q14 11.8 14 12.6 Q14 13.6 13.2 13.6 L2.8 13.6 Q2 13.6 2 12.6 Q2 11.8 2.4 11.8 Z" stroke="#d3d7dc" stroke-width="1.1" stroke-linejoin="round"/></svg>
<svg style="position:absolute;left:1459px;top:791px;" width="16" height="17" viewBox="0 0 16 17" fill="none"><path d="M2.4 2.6 Q2.4 1.4 3.6 1.4 L12 1.4 Q13.2 1.4 13.2 2.6 L13.2 15.2 L11.8 14.2 L10.4 15.4 L9 14.2 L7.6 15.4 L6.2 14.2 L4.8 15.4 L3.6 14.2 L2.4 15.2 Z M4.8 11 L10.8 11 M4.8 9.2 L6.8 9.2 M10.6 4 Q9 3.4 8.6 4.6 Q8.6 5.6 9.8 5.8 Q11 6.1 10.8 7.2 Q10.4 8.2 8.6 7.6 M9.7 3 L9.7 8.6" stroke="#d3d7dc" stroke-width="1.1" stroke-linecap="round" stroke-linejoin="round"/></svg>
<svg style="position:absolute;left:1504px;top:791px;" width="14" height="16" viewBox="0 0 14 16" fill="none"><path d="M3.2 1.2 L8.8 1.2 L12.2 4.6 L12.2 12.6 Q12.2 14.6 10.2 14.6 L3.2 14.6 Q1.2 14.6 1.2 12.6 L1.2 3.2 Q1.2 1.2 3.2 1.2 Z" stroke="#3090dc" stroke-width="1.3" stroke-linejoin="round"/><path d="M8.6 1.4 L8.6 3.6 Q8.6 4.6 9.6 4.6 L12 4.6" stroke="#3090dc" stroke-width="1.2"/><circle cx="6.1" cy="9.1" r="3.05" fill="#3090dc"/><path d="M5.8 7.4 L5.8 9.3 L7 10.3" stroke="#fff" stroke-width="0.8" stroke-linecap="round"/></svg>
<div class="t" style="left:1520.94px;top:788.21px;font-size:14.39px;font-weight:normal;color:#3090dc;transform:scaleX(0.9800);"><span style="letter-spacing:-1.7px">1</span>707</div>
<div style="position:absolute;left:1614px;top:786px;width:99px;height:25px;box-sizing:border-box;border:1.2px solid #2f8fdc;border-radius:4px;background:#fff"></div>
<div style="position:absolute;left:1683px;top:786px;width:1.2px;height:25px;background:#2f8fdc"></div>
<svg style="position:absolute;left:1692px;top:794px;" width="13" height="9" viewBox="0 0 13 9" fill="none"><path d="M1.8 1.8 L6.5 6.5 L11.2 1.8" stroke="#2f8fdc" stroke-width="1.3" stroke-linecap="round" stroke-linejoin="round"/></svg>
<svg style="position:absolute;left:1622px;top:790.5px;" width="16" height="16" viewBox="0 0 16 16" fill="none"><path d="M4.2 6 L4.2 3.2 Q4.2 1.2 6.2 1.2 L11 1.2 L14.2 4.4 L14.2 12.4 Q14.2 14.4 12.2 14.4 L6.2 14.4 Q4.6 14.4 4.3 12.6" stroke="#2f8fdc" stroke-width="1.3" stroke-linejoin="round"/><path d="M10.8 1.4 L10.8 3.4 Q10.8 4.6 12 4.6 L14 4.6" stroke="#2f8fdc" stroke-width="1.2"/><rect x="1.2" y="7" width="8.8" height="5.2" rx="1.6" fill="#2f8fdc"/><path d="M2.6 11 L2.6 8.3 L3.8 8.3 Q4.5 8.3 4.5 9.1 Q4.5 9.8 3.8 9.8 L2.6 9.8 M5.5 11 L5.5 8.3 Q7.1 8.3 7.1 9.65 Q7.1 11 5.5 11 M8 11 L8 8.3 L9.3 8.3 M8 9.6 L9 9.6" stroke="#fff" stroke-width="0.6"/></svg>
<div class="t" style="left:1649.65px;top:788.01px;font-size:14.39px;font-weight:normal;color:#2f8fdc;transform:scaleX(1.0500);">683</div>
<div style="position:absolute;left:16px;top:815px;width:1705px;height:31px;background:#fff"></div>
<div style="position:absolute;left:16px;top:846px;width:1705px;height:1px;background:#dcdfe3"></div>
<div style="position:absolute;left:32px;top:823.3px;width:16px;height:16px;box-sizing:border-box;border:1.5px solid #4a4a4a;border-radius:3.5px;background:#fff"></div>
<svg style="position:absolute;left:80px;top:819px;" width="24" height="24" viewBox="0 0 24 24" fill="none"><path fill="#3e3e40" d="M12 1 C15.6 1 17.9 3.6 17.9 7.6 C17.9 10.8 16.8 12.6 15.8 13.6 L16 19.2 Q17.6 21.2 19.8 22.4 Q12 25.6 4.6 22.4 Q6.6 21.2 8.2 19.2 L8.1 14.4 C6.8 13 6.2 10.8 6.2 7.8 C6.2 3.6 8.4 1 12 1 Z"/></svg>
<div class="t" style="left:108.12px;top:818.91px;font-size:14.68px;font-weight:normal;color:#3090dc;transform:scaleX(1.0901);">Luke Toms (14)</div>
<div class="t" style="left:537.18px;top:820.21px;font-size:14.68px;font-weight:normal;color:#70767d;transform:scaleX(1.0450);">21.00</div>
<div class="t" style="left:655.23px;top:820.21px;font-size:14.68px;font-weight:normal;color:#70767d;transform:scaleX(1.0450);">$705.51</div>
<div class="t" style="left:801.88px;top:820.21px;font-size:14.68px;font-weight:normal;color:#c4c8cc;transform:scaleX(1.0450);">$0.00</div>
<div class="t" style="left:946.98px;top:820.21px;font-size:14.68px;font-weight:normal;color:#c4c8cc;transform:scaleX(1.0450);">$0.00</div>
<div class="t" style="left:1063.53px;top:820.21px;font-size:14.68px;font-weight:normal;color:#70767d;transform:scaleX(1.0450);">$705.51</div>
<div class="t" style="left:1196.02px;top:820.21px;font-size:14.68px;font-weight:normal;color:#70767d;transform:scaleX(1.0450);">$73.47</div>
<div class="t" style="left:1275.01px;top:820.21px;font-size:14.68px;font-weight:normal;color:#70767d;transform:scaleX(1.0798);">7 May 2023</div>
<svg style="position:absolute;left:1374px;top:823px;" width="16" height="16" viewBox="0 0 16 16" fill="none"><path d="M2.2 3.6 Q2.2 1.8 4 1.8 L12.2 1.8 Q14 1.8 14 3.6 L14 9.6 Q14 11.4 12.2 11.4 L6.8 11.4 L3.2 14 L3.6 11.2 Q2.2 10.8 2.2 9.6 Z M5 5.2 L11.2 5.2 M5 7.8 L8 7.8" stroke="#d3d7dc" stroke-width="1.1" stroke-linejoin="round"/></svg>
<svg style="position:absolute;left:1395px;top:823px;" width="16" height="16" viewBox="0 0 16 16" fill="none"><path d="M9.6 14.2 L3.4 14.2 Q1.8 14.2 1.8 12.6 L1.8 4.2 Q1.8 2.6 3.4 2.6 L12.2 2.6 Q13.8 2.6 13.8 4.2 L13.8 6.2 M4.6 1.2 L4.6 3.8 M11 1.2 L11 3.8 M4.4 6.2 L11.2 6.2 M4.4 8.8 L6.2 8.8 M8.4 11.4 L14.4 11.4 M12.4 9.2 L14.6 11.4 L12.4 13.6" stroke="#d3d7dc" stroke-width="1.1" stroke-linecap="round" stroke-linejoin="round"/></svg>
<svg style="position:absolute;left:1416px;top:823px;" width="18" height="16" viewBox="0 0 18 16" fill="none"><circle cx="6.4" cy="5.2" r="3.2" stroke="#d3d7dc" stroke-width="1.1"/><circle cx="12.6" cy="7.6" r="2.3" stroke="#d3d7dc" stroke-width="1.1"/><path d="M1 14.8 Q1.6 9.6 6.4 9.6 Q11 9.6 11.8 14.8 M10.4 11.2 Q11.4 10.6 12.6 10.6 Q16.2 10.6 16.8 14.8" stroke="#d3d7dc" stroke-width="1.1" stroke-linecap="round"/></svg>
<svg style="position:absolute;left:1438px;top:823px;" width="16" height="16" viewBox="0 0 16 16" fill="none"><path d="M2 5.6 L8 2 L14 5.6 Q14 6.6 13 6.6 L3 6.6 Q2 6.6 2 5.6 Z M3.6 6.8 L3.6 11.4 M6.4 6.8 L6.4 11.4 M9.6 6.8 L9.6 11.4 M12.4 6.8 L12.4 11.4 M2.4 11.8 L13.6 11.8 Q14 11.8 14 12.6 Q14 13.6 13.2 13.6 L2.8 13.6 Q2 13.6 2 12.6 Q2 11.8 2.4 11.8 Z" stroke="#d3d7dc" stroke-width="1.1" stroke-linejoin="round"/></svg>
<svg style="position:absolute;left:1459px;top:823px;" width="16" height="17" viewBox="0 0 16 17" fill="none"><path d="M2.4 2.6 Q2.4 1.4 3.6 1.4 L12 1.4 Q13.2 1.4 13.2 2.6 L13.2 15.2 L11.8 14.2 L10.4 15.4 L9 14.2 L7.6 15.4 L6.2 14.2 L4.8 15.4 L3.6 14.2 L2.4 15.2 Z M4.8 11 L10.8 11 M4.8 9.2 L6.8 9.2 M10.6 4 Q9 3.4 8.6 4.6 Q8.6 5.6 9.8 5.8 Q11 6.1 10.8 7.2 Q10.4 8.2 8.6 7.6 M9.7 3 L9.7 8.6" stroke="#d3d7dc" stroke-width="1.1" stroke-linecap="round" stroke-linejoin="round"/></svg>
<svg style="position:absolute;left:1504px;top:823px;" width="14" height="16" viewBox="0 0 14 16" fill="none"><path d="M3.2 1.2 L8.8 1.2 L12.2 4.6 L12.2 12.6 Q12.2 14.6 10.2 14.6 L3.2 14.6 Q1.2 14.6 1.2 12.6 L1.2 3.2 Q1.2 1.2 3.2 1.2 Z" stroke="#3090dc" stroke-width="1.3" stroke-linejoin="round"/><path d="M8.6 1.4 L8.6 3.6 Q8.6 4.6 9.6 4.6 L12 4.6" stroke="#3090dc" stroke-width="1.2"/><circle cx="6.1" cy="9.1" r="3.05" fill="#3090dc"/><path d="M5.8 7.4 L5.8 9.3 L7 10.3" stroke="#fff" stroke-width="0.8" stroke-linecap="round"/></svg>
<div class="t" style="left:1520.94px;top:820.21px;font-size:14.39px;font-weight:normal;color:#3090dc;transform:scaleX(0.9800);"><span style="letter-spacing:-1.7px">1</span>7<span style="letter-spacing:-1.7px">1</span>7</div>
<div style="position:absolute;left:1614px;top:818px;width:99px;height:25px;box-sizing:border-box;border:1.2px solid #2f8fdc;border-radius:4px;background:#fff"></div>
<div style="position:absolute;left:1683px;top:818px;width:1.2px;height:25px;background:#2f8fdc"></div>
<svg style="position:absolute;left:1692px;top:826px;" width="13" height="9" viewBox="0 0 13 9" fill="none"><path d="M1.8 1.8 L6.5 6.5 L11.2 1.8" stroke="#2f8fdc" stroke-width="1.3" stroke-linecap="round" stroke-linejoin="round"/></svg>
<svg style="position:absolute;left:1622px;top:822.5px;" width="16" height="16" viewBox="0 0 16 16" fill="none"><path d="M4.2 6 L4.2 3.2 Q4.2 1.2 6.2 1.2 L11 1.2 L14.2 4.4 L14.2 12.4 Q14.2 14.4 12.2 14.4 L6.2 14.4 Q4.6 14.4 4.3 12.6" stroke="#2f8fdc" stroke-width="1.3" stroke-linejoin="round"/><path d="M10.8 1.4 L10.8 3.4 Q10.8 4.6 12 4.6 L14 4.6" stroke="#2f8fdc" stroke-width="1.2"/><rect x="1.2" y="7" width="8.8" height="5.2" rx="1.6" fill="#2f8fdc"/><path d="M2.6 11 L2.6 8.3 L3.8 8.3 Q4.5 8.3 4.5 9.1 Q4.5 9.8 3.8 9.8 L2.6 9.8 M5.5 11 L5.5 8.3 Q7.1 8.3 7.1 9.65 Q7.1 11 5.5 11 M8 11 L8 8.3 L9.3 8.3 M8 9.6 L9 9.6" stroke="#fff" stroke-width="0.6"/></svg>
<div class="t" style="left:1649.65px;top:820.01px;font-size:14.39px;font-weight:normal;color:#2f8fdc;transform:scaleX(1.0500);">698</div>
<div style="position:absolute;left:16px;top:847px;width:1705px;height:31px;background:#fff"></div>
<div style="position:absolute;left:16px;top:878px;width:1705px;height:1px;background:#dcdfe3"></div>
<div style="position:absolute;left:32px;top:855.3px;width:16px;height:16px;box-sizing:border-box;border:1.5px solid #4a4a4a;border-radius:3.5px;background:#fff"></div>
<svg style="position:absolute;left:80px;top:851px;" width="24" height="24" viewBox="0 0 24 24" fill="none"><path fill="#3e3e40" d="M12 1 C15.6 1 17.9 3.6 17.9 7.6 C17.9 10.8 16.8 12.6 15.8 13.6 L16 19.2 Q17.6 21.2 19.8 22.4 Q12 25.6 4.6 22.4 Q6.6 21.2 8.2 19.2 L8.1 14.4 C6.8 13 6.2 10.8 6.2 7.8 C6.2 3.6 8.4 1 12 1 Z"/></svg>
<div class="t" style="left:108.08px;top:850.91px;font-size:14.68px;font-weight:normal;color:#3090dc;transform:scaleX(1.1201);">Megan Mansfield (12)</div>
<div class="t" style="left:537.18px;top:852.21px;font-size:14.68px;font-weight:normal;color:#70767d;transform:scaleX(1.0450);">38.00</div>
<div class="t" style="left:642.35px;top:852.21px;font-size:14.68px;font-weight:normal;color:#70767d;transform:scaleX(1.0450);">$1,538.46</div>
<div class="t" style="left:784.78px;top:852.21px;font-size:14.68px;font-weight:normal;color:#70767d;transform:scaleX(1.0450);">$238.00</div>
<div class="t" style="left:946.98px;top:852.21px;font-size:14.68px;font-weight:normal;color:#c4c8cc;transform:scaleX(1.0450);">$0.00</div>
<div class="t" style="left:1050.65px;top:852.21px;font-size:14.68px;font-weight:normal;color:#70767d;transform:scaleX(1.0450);">$1,300.46</div>
<div class="t" style="left:1187.20px;top:852.21px;font-size:14.68px;font-weight:normal;color:#70767d;transform:scaleX(1.0450);">$161.54</div>
<div class="t" style="left:1275.01px;top:852.21px;font-size:14.68px;font-weight:normal;color:#70767d;transform:scaleX(1.0798);">7 May 2023</div>
<svg style="position:absolute;left:1374px;top:855px;" width="16" height="16" viewBox="0 0 16 16" fill="none"><path d="M2.2 3.6 Q2.2 1.8 4 1.8 L12.2 1.8 Q14 1.8 14 3.6 L14 9.6 Q14 11.4 12.2 11.4 L6.8 11.4 L3.2 14 L3.6 11.2 Q2.2 10.8 2.2 9.6 Z M5 5.2 L11.2 5.2 M5 7.8 L8 7.8" stroke="#d3d7dc" stroke-width="1.1" stroke-linejoin="round"/></svg>
<svg style="position:absolute;left:1395px;top:855px;" width="16" height="16" viewBox="0 0 16 16" fill="none"><path d="M9.6 14.2 L3.4 14.2 Q1.8 14.2 1.8 12.6 L1.8 4.2 Q1.8 2.6 3.4 2.6 L12.2 2.6 Q13.8 2.6 13.8 4.2 L13.8 6.2 M4.6 1.2 L4.6 3.8 M11 1.2 L11 3.8 M4.4 6.2 L11.2 6.2 M4.4 8.8 L6.2 8.8 M8.4 11.4 L14.4 11.4 M12.4 9.2 L14.6 11.4 L12.4 13.6" stroke="#d3d7dc" stroke-width="1.1" stroke-linecap="round" stroke-linejoin="round"/></svg>
<svg style="position:absolute;left:1416px;top:855px;" width="18" height="16" viewBox="0 0 18 16" fill="none"><circle cx="6.4" cy="5.2" r="3.2" stroke="#d3d7dc" stroke-width="1.1"/><circle cx="12.6" cy="7.6" r="2.3" stroke="#d3d7dc" stroke-width="1.1"/><path d="M1 14.8 Q1.6 9.6 6.4 9.6 Q11 9.6 11.8 14.8 M10.4 11.2 Q11.4 10.6 12.6 10.6 Q16.2 10.6 16.8 14.8" stroke="#d3d7dc" stroke-width="1.1" stroke-linecap="round"/></svg>
<svg style="position:absolute;left:1438px;top:855px;" width="16" height="16" viewBox="0 0 16 16" fill="none"><path d="M2 5.6 L8 2 L14 5.6 Q14 6.6 13 6.6 L3 6.6 Q2 6.6 2 5.6 Z M3.6 6.8 L3.6 11.4 M6.4 6.8 L6.4 11.4 M9.6 6.8 L9.6 11.4 M12.4 6.8 L12.4 11.4 M2.4 11.8 L13.6 11.8 Q14 11.8 14 12.6 Q14 13.6 13.2 13.6 L2.8 13.6 Q2 13.6 2 12.6 Q2 11.8 2.4 11.8 Z" stroke="#d3d7dc" stroke-width="1.1" stroke-linejoin="round"/></svg>
<svg style="position:absolute;left:1459px;top:855px;" width="16" height="17" viewBox="0 0 16 17" fill="none"><path d="M2.4 2.6 Q2.4 1.4 3.6 1.4 L12 1.4 Q13.2 1.4 13.2 2.6 L13.2 15.2 L11.8 14.2 L10.4 15.4 L9 14.2 L7.6 15.4 L6.2 14.2 L4.8 15.4 L3.6 14.2 L2.4 15.2 Z M4.8 11 L10.8 11 M4.8 9.2 L6.8 9.2 M10.6 4 Q9 3.4 8.6 4.6 Q8.6 5.6 9.8 5.8 Q11 6.1 10.8 7.2 Q10.4 8.2 8.6 7.6 M9.7 3 L9.7 8.6" stroke="#d3d7dc" stroke-width="1.1" stroke-linecap="round" stroke-linejoin="round"/></svg>
<svg style="position:absolute;left:1504px;top:855px;" width="14" height="16" viewBox="0 0 14 16" fill="none"><path d="M3.2 1.2 L8.8 1.2 L12.2 4.6 L12.2 12.6 Q12.2 14.6 10.2 14.6 L3.2 14.6 Q1.2 14.6 1.2 12.6 L1.2 3.2 Q1.2 1.2 3.2 1.2 Z" stroke="#3090dc" stroke-width="1.3" stroke-linejoin="round"/><path d="M8.6 1.4 L8.6 3.6 Q8.6 4.6 9.6 4.6 L12 4.6" stroke="#3090dc" stroke-width="1.2"/><circle cx="6.1" cy="9.1" r="3.05" fill="#3090dc"/><path d="M5.8 7.4 L5.8 9.3 L7 10.3" stroke="#fff" stroke-width="0.8" stroke-linecap="round"/></svg>
<div class="t" style="left:1520.94px;top:852.21px;font-size:14.39px;font-weight:normal;color:#3090dc;transform:scaleX(0.9800);"><span style="letter-spacing:-1.7px">1</span>700</div>
<div style="position:absolute;left:1614px;top:850px;width:99px;height:25px;box-sizing:border-box;border:1.2px solid #2f8fdc;border-radius:4px;background:#fff"></div>
<div style="position:absolute;left:1683px;top:850px;width:1.2px;height:25px;background:#2f8fdc"></div>
<svg style="position:absolute;left:1692px;top:858px;" width="13" height="9" viewBox="0 0 13 9" fill="none"><path d="M1.8 1.8 L6.5 6.5 L11.2 1.8" stroke="#2f8fdc" stroke-width="1.3" stroke-linecap="round" stroke-linejoin="round"/></svg>
<svg style="position:absolute;left:1622px;top:854.5px;" width="16" height="16" viewBox="0 0 16 16" fill="none"><path d="M4.2 6 L4.2 3.2 Q4.2 1.2 6.2 1.2 L11 1.2 L14.2 4.4 L14.2 12.4 Q14.2 14.4 12.2 14.4 L6.2 14.4 Q4.6 14.4 4.3 12.6" stroke="#2f8fdc" stroke-width="1.3" stroke-linejoin="round"/><path d="M10.8 1.4 L10.8 3.4 Q10.8 4.6 12 4.6 L14 4.6" stroke="#2f8fdc" stroke-width="1.2"/><rect x="1.2" y="7" width="8.8" height="5.2" rx="1.6" fill="#2f8fdc"/><path d="M2.6 11 L2.6 8.3 L3.8 8.3 Q4.5 8.3 4.5 9.1 Q4.5 9.8 3.8 9.8 L2.6 9.8 M5.5 11 L5.5 8.3 Q7.1 8.3 7.1 9.65 Q7.1 11 5.5 11 M8 11 L8 8.3 L9.3 8.3 M8 9.6 L9 9.6" stroke="#fff" stroke-width="0.6"/></svg>
<div class="t" style="left:1649.65px;top:852.01px;font-size:14.39px;font-weight:normal;color:#2f8fdc;transform:scaleX(1.0500);">695</div>
<div style="position:absolute;left:16px;top:879px;width:1705px;height:31px;background:#fff"></div>
<div style="position:absolute;left:16px;top:910px;width:1705px;height:1px;background:#dcdfe3"></div>
<div style="position:absolute;left:32px;top:887.3px;width:16px;height:16px;box-sizing:border-box;border:1.5px solid #4a4a4a;border-radius:3.5px;background:#fff"></div>
<svg style="position:absolute;left:80px;top:883px;" width="24" height="24" viewBox="0 0 24 24" fill="none"><path fill="#3e3e40" d="M12 1 C15.6 1 17.9 3.6 17.9 7.6 C17.9 10.8 16.8 12.6 15.8 13.6 L16 19.2 Q17.6 21.2 19.8 22.4 Q12 25.6 4.6 22.4 Q6.6 21.2 8.2 19.2 L8.1 14.4 C6.8 13 6.2 10.8 6.2 7.8 C6.2 3.6 8.4 1 12 1 Z"/></svg>
<div class="t" style="left:108.03px;top:882.91px;font-size:14.68px;font-weight:normal;color:#3090dc;transform:scaleX(1.1695);">Nathan Jordan (39)</div>
<div class="t" style="left:537.18px;top:884.21px;font-size:14.68px;font-weight:normal;color:#70767d;transform:scaleX(1.0450);">38.00</div>
<div class="t" style="left:642.42px;top:884.21px;font-size:14.68px;font-weight:normal;color:#70767d;transform:scaleX(1.0450);">$1,442.31</div>
<div class="t" style="left:784.78px;top:884.21px;font-size:14.68px;font-weight:normal;color:#70767d;transform:scaleX(1.0450);">$166.00</div>
<div class="t" style="left:946.98px;top:884.21px;font-size:14.68px;font-weight:normal;color:#c4c8cc;transform:scaleX(1.0450);">$0.00</div>
<div class="t" style="left:1050.72px;top:884.21px;font-size:14.68px;font-weight:normal;color:#70767d;transform:scaleX(1.0450);">$1,276.31</div>
<div class="t" style="left:1187.20px;top:884.21px;font-size:14.68px;font-weight:normal;color:#70767d;transform:scaleX(1.0450);">$151.44</div>
<div class="t" style="left:1275.01px;top:884.21px;font-size:14.68px;font-weight:normal;color:#70767d;transform:scaleX(1.0798);">7 May 2023</div>
<svg style="position:absolute;left:1374px;top:887px;" width="16" height="16" viewBox="0 0 16 16" fill="none"><path d="M2.2 3.6 Q2.2 1.8 4 1.8 L12.2 1.8 Q14 1.8 14 3.6 L14 9.6 Q14 11.4 12.2 11.4 L6.8 11.4 L3.2 14 L3.6 11.2 Q2.2 10.8 2.2 9.6 Z M5 5.2 L11.2 5.2 M5 7.8 L8 7.8" stroke="#d3d7dc" stroke-width="1.1" stroke-linejoin="round"/></svg>
<svg style="position:absolute;left:1395px;top:887px;" width="16" height="16" viewBox="0 0 16 16" fill="none"><path d="M9.6 14.2 L3.4 14.2 Q1.8 14.2 1.8 12.6 L1.8 4.2 Q1.8 2.6 3.4 2.6 L12.2 2.6 Q13.8 2.6 13.8 4.2 L13.8 6.2 M4.6 1.2 L4.6 3.8 M11 1.2 L11 3.8 M4.4 6.2 L11.2 6.2 M4.4 8.8 L6.2 8.8 M8.4 11.4 L14.4 11.4 M12.4 9.2 L14.6 11.4 L12.4 13.6" stroke="#d3d7dc" stroke-width="1.1" stroke-linecap="round" stroke-linejoin="round"/></svg>
<svg style="position:absolute;left:1416px;top:887px;" width="18" height="16" viewBox="0 0 18 16" fill="none"><circle cx="6.4" cy="5.2" r="3.2" stroke="#d3d7dc" stroke-width="1.1"/><circle cx="12.6" cy="7.6" r="2.3" stroke="#d3d7dc" stroke-width="1.1"/><path d="M1 14.8 Q1.6 9.6 6.4 9.6 Q11 9.6 11.8 14.8 M10.4 11.2 Q11.4 10.6 12.6 10.6 Q16.2 10.6 16.8 14.8" stroke="#d3d7dc" stroke-width="1.1" stroke-linecap="round"/></svg>
<svg style="position:absolute;left:1438px;top:887px;" width="16" height="16" viewBox="0 0 16 16" fill="none"><path d="M2 5.6 L8 2 L14 5.6 Q14 6.6 13 6.6 L3 6.6 Q2 6.6 2 5.6 Z M3.6 6.8 L3.6 11.4 M6.4 6.8 L6.4 11.4 M9.6 6.8 L9.6 11.4 M12.4 6.8 L12.4 11.4 M2.4 11.8 L13.6 11.8 Q14 11.8 14 12.6 Q14 13.6 13.2 13.6 L2.8 13.6 Q2 13.6 2 12.6 Q2 11.8 2.4 11.8 Z" stroke="#d3d7dc" stroke-width="1.1" stroke-linejoin="round"/></svg>
<svg style="position:absolute;left:1459px;top:887px;" width="16" height="17" viewBox="0 0 16 17" fill="none"><path d="M2.4 2.6 Q2.4 1.4 3.6 1.4 L12 1.4 Q13.2 1.4 13.2 2.6 L13.2 15.2 L11.8 14.2 L10.4 15.4 L9 14.2 L7.6 15.4 L6.2 14.2 L4.8 15.4 L3.6 14.2 L2.4 15.2 Z M4.8 11 L10.8 11 M4.8 9.2 L6.8 9.2 M10.6 4 Q9 3.4 8.6 4.6 Q8.6 5.6 9.8 5.8 Q11 6.1 10.8 7.2 Q10.4 8.2 8.6 7.6 M9.7 3 L9.7 8.6" stroke="#d3d7dc" stroke-width="1.1" stroke-linecap="round" stroke-linejoin="round"/></svg>
<svg style="position:absolute;left:1504px;top:887px;" width="14" height="16" viewBox="0 0 14 16" fill="none"><path d="M3.2 1.2 L8.8 1.2 L12.2 4.6 L12.2 12.6 Q12.2 14.6 10.2 14.6 L3.2 14.6 Q1.2 14.6 1.2 12.6 L1.2 3.2 Q1.2 1.2 3.2 1.2 Z" stroke="#3090dc" stroke-width="1.3" stroke-linejoin="round"/><path d="M8.6 1.4 L8.6 3.6 Q8.6 4.6 9.6 4.6 L12 4.6" stroke="#3090dc" stroke-width="1.2"/><circle cx="6.1" cy="9.1" r="3.05" fill="#3090dc"/><path d="M5.8 7.4 L5.8 9.3 L7 10.3" stroke="#fff" stroke-width="0.8" stroke-linecap="round"/></svg>
<div class="t" style="left:1520.94px;top:884.21px;font-size:14.39px;font-weight:normal;color:#3090dc;transform:scaleX(0.9800);"><span style="letter-spacing:-1.7px">1</span>698</div>
<div style="position:absolute;left:1614px;top:882px;width:99px;height:25px;box-sizing:border-box;border:1.2px solid #2f8fdc;border-radius:4px;background:#fff"></div>
<div style="position:absolute;left:1683px;top:882px;width:1.2px;height:25px;background:#2f8fdc"></div>
<svg style="position:absolute;left:1692px;top:890px;" width="13" height="9" viewBox="0 0 13 9" fill="none"><path d="M1.8 1.8 L6.5 6.5 L11.2 1.8" stroke="#2f8fdc" stroke-width="1.3" stroke-linecap="round" stroke-linejoin="round"/></svg>
<svg style="position:absolute;left:1622px;top:886.5px;" width="16" height="16" viewBox="0 0 16 16" fill="none"><path d="M4.2 6 L4.2 3.2 Q4.2 1.2 6.2 1.2 L11 1.2 L14.2 4.4 L14.2 12.4 Q14.2 14.4 12.2 14.4 L6.2 14.4 Q4.6 14.4 4.3 12.6" stroke="#2f8fdc" stroke-width="1.3" stroke-linejoin="round"/><path d="M10.8 1.4 L10.8 3.4 Q10.8 4.6 12 4.6 L14 4.6" stroke="#2f8fdc" stroke-width="1.2"/><rect x="1.2" y="7" width="8.8" height="5.2" rx="1.6" fill="#2f8fdc"/><path d="M2.6 11 L2.6 8.3 L3.8 8.3 Q4.5 8.3 4.5 9.1 Q4.5 9.8 3.8 9.8 L2.6 9.8 M5.5 11 L5.5 8.3 Q7.1 8.3 7.1 9.65 Q7.1 11 5.5 11 M8 11 L8 8.3 L9.3 8.3 M8 9.6 L9 9.6" stroke="#fff" stroke-width="0.6"/></svg>
<div class="t" style="left:1649.50px;top:884.01px;font-size:14.39px;font-weight:normal;color:#2f8fdc;transform:scaleX(1.0500);">684</div>
<div style="position:absolute;left:16px;top:911px;width:1705px;height:31px;background:#fff"></div>
<div style="position:absolute;left:16px;top:942px;width:1705px;height:1px;background:#dcdfe3"></div>
<div style="position:absolute;left:32px;top:919.3px;width:16px;height:16px;box-sizing:border-box;border:1.5px solid #4a4a4a;border-radius:3.5px;background:#fff"></div>
<svg style="position:absolute;left:80px;top:915px;" width="24" height="24" viewBox="0 0 24 24" fill="none"><path fill="#3e3e40" d="M12 1 C15.6 1 17.9 3.6 17.9 7.6 C17.9 10.8 16.8 12.6 15.8 13.6 L16 19.2 Q17.6 21.2 19.8 22.4 Q12 25.6 4.6 22.4 Q6.6 21.2 8.2 19.2 L8.1 14.4 C6.8 13 6.2 10.8 6.2 7.8 C6.2 3.6 8.4 1 12 1 Z"/></svg>
<div class="t" style="left:108.63px;top:914.91px;font-size:14.68px;font-weight:normal;color:#3090dc;transform:scaleX(1.1706);">Olivia Parker (11)</div>
<div class="t" style="left:537.18px;top:916.21px;font-size:14.68px;font-weight:normal;color:#70767d;transform:scaleX(1.0450);">38.00</div>
<div class="t" style="left:642.42px;top:916.21px;font-size:14.68px;font-weight:normal;color:#70767d;transform:scaleX(1.0450);">$1,442.31</div>
<div class="t" style="left:784.78px;top:916.21px;font-size:14.68px;font-weight:normal;color:#70767d;transform:scaleX(1.0450);">$166.00</div>
<div class="t" style="left:946.98px;top:916.21px;font-size:14.68px;font-weight:normal;color:#c4c8cc;transform:scaleX(1.0450);">$0.00</div>
<div class="t" style="left:1050.72px;top:916.21px;font-size:14.68px;font-weight:normal;color:#70767d;transform:scaleX(1.0450);">$1,276.31</div>
<div class="t" style="left:1187.20px;top:916.21px;font-size:14.68px;font-weight:normal;color:#70767d;transform:scaleX(1.0450);">$151.44</div>
<div class="t" style="left:1275.01px;top:916.21px;font-size:14.68px;font-weight:normal;color:#70767d;transform:scaleX(1.0798);">7 May 2023</div>
<svg style="position:absolute;left:1374px;top:919px;" width="16" height="16" viewBox="0 0 16 16" fill="none"><path d="M2.2 3.6 Q2.2 1.8 4 1.8 L12.2 1.8 Q14 1.8 14 3.6 L14 9.6 Q14 11.4 12.2 11.4 L6.8 11.4 L3.2 14 L3.6 11.2 Q2.2 10.8 2.2 9.6 Z M5 5.2 L11.2 5.2 M5 7.8 L8 7.8" stroke="#d3d7dc" stroke-width="1.1" stroke-linejoin="round"/></svg>
<svg style="position:absolute;left:1395px;top:919px;" width="16" height="16" viewBox="0 0 16 16" fill="none"><path d="M9.6 14.2 L3.4 14.2 Q1.8 14.2 1.8 12.6 L1.8 4.2 Q1.8 2.6 3.4 2.6 L12.2 2.6 Q13.8 2.6 13.8 4.2 L13.8 6.2 M4.6 1.2 L4.6 3.8 M11 1.2 L11 3.8 M4.4 6.2 L11.2 6.2 M4.4 8.8 L6.2 8.8 M8.4 11.4 L14.4 11.4 M12.4 9.2 L14.6 11.4 L12.4 13.6" stroke="#d3d7dc" stroke-width="1.1" stroke-linecap="round" stroke-linejoin="round"/></svg>
<svg style="position:absolute;left:1416px;top:919px;" width="18" height="16" viewBox="0 0 18 16" fill="none"><circle cx="6.4" cy="5.2" r="3.2" stroke="#d3d7dc" stroke-width="1.1"/><circle cx="12.6" cy="7.6" r="2.3" stroke="#d3d7dc" stroke-width="1.1"/><path d="M1 14.8 Q1.6 9.6 6.4 9.6 Q11 9.6 11.8 14.8 M10.4 11.2 Q11.4 10.6 12.6 10.6 Q16.2 10.6 16.8 14.8" stroke="#d3d7dc" stroke-width="1.1" stroke-linecap="round"/></svg>
<svg style="position:absolute;left:1438px;top:919px;" width="16" height="16" viewBox="0 0 16 16" fill="none"><path d="M2 5.6 L8 2 L14 5.6 Q14 6.6 13 6.6 L3 6.6 Q2 6.6 2 5.6 Z M3.6 6.8 L3.6 11.4 M6.4 6.8 L6.4 11.4 M9.6 6.8 L9.6 11.4 M12.4 6.8 L12.4 11.4 M2.4 11.8 L13.6 11.8 Q14 11.8 14 12.6 Q14 13.6 13.2 13.6 L2.8 13.6 Q2 13.6 2 12.6 Q2 11.8 2.4 11.8 Z" stroke="#d3d7dc" stroke-width="1.1" stroke-linejoin="round"/></svg>
<svg style="position:absolute;left:1459px;top:919px;" width="16" height="17" viewBox="0 0 16 17" fill="none"><path d="M2.4 2.6 Q2.4 1.4 3.6 1.4 L12 1.4 Q13.2 1.4 13.2 2.6 L13.2 15.2 L11.8 14.2 L10.4 15.4 L9 14.2 L7.6 15.4 L6.2 14.2 L4.8 15.4 L3.6 14.2 L2.4 15.2 Z M4.8 11 L10.8 11 M4.8 9.2 L6.8 9.2 M10.6 4 Q9 3.4 8.6 4.6 Q8.6 5.6 9.8 5.8 Q11 6.1 10.8 7.2 Q10.4 8.2 8.6 7.6 M9.7 3 L9.7 8.6" stroke="#d3d7dc" stroke-width="1.1" stroke-linecap="round" stroke-linejoin="round"/></svg>
<svg style="position:absolute;left:1504px;top:919px;" width="14" height="16" viewBox="0 0 14 16" fill="none"><path d="M3.2 1.2 L8.8 1.2 L12.2 4.6 L12.2 12.6 Q12.2 14.6 10.2 14.6 L3.2 14.6 Q1.2 14.6 1.2 12.6 L1.2 3.2 Q1.2 1.2 3.2 1.2 Z" stroke="#3090dc" stroke-width="1.3" stroke-linejoin="round"/><path d="M8.6 1.4 L8.6 3.6 Q8.6 4.6 9.6 4.6 L12 4.6" stroke="#3090dc" stroke-width="1.2"/><circle cx="6.1" cy="9.1" r="3.05" fill="#3090dc"/><path d="M5.8 7.4 L5.8 9.3 L7 10.3" stroke="#fff" stroke-width="0.8" stroke-linecap="round"/></svg>
<div class="t" style="left:1520.94px;top:916.21px;font-size:14.39px;font-weight:normal;color:#3090dc;transform:scaleX(0.9800);"><span style="letter-spacing:-1.7px">1</span>702</div>
<div style="position:absolute;left:1614px;top:914px;width:99px;height:25px;box-sizing:border-box;border:1.2px solid #2f8fdc;border-radius:4px;background:#fff"></div>
<div style="position:absolute;left:1683px;top:914px;width:1.2px;height:25px;background:#2f8fdc"></div>
<svg style="position:absolute;left:1692px;top:922px;" width="13" height="9" viewBox="0 0 13 9" fill="none"><path d="M1.8 1.8 L6.5 6.5 L11.2 1.8" stroke="#2f8fdc" stroke-width="1.3" stroke-linecap="round" stroke-linejoin="round"/></svg>
<svg style="position:absolute;left:1622px;top:918.5px;" width="16" height="16" viewBox="0 0 16 16" fill="none"><path d="M4.2 6 L4.2 3.2 Q4.2 1.2 6.2 1.2 L11 1.2 L14.2 4.4 L14.2 12.4 Q14.2 14.4 12.2 14.4 L6.2 14.4 Q4.6 14.4 4.3 12.6" stroke="#2f8fdc" stroke-width="1.3" stroke-linejoin="round"/><path d="M10.8 1.4 L10.8 3.4 Q10.8 4.6 12 4.6 L14 4.6" stroke="#2f8fdc" stroke-width="1.2"/><rect x="1.2" y="7" width="8.8" height="5.2" rx="1.6" fill="#2f8fdc"/><path d="M2.6 11 L2.6 8.3 L3.8 8.3 Q4.5 8.3 4.5 9.1 Q4.5 9.8 3.8 9.8 L2.6 9.8 M5.5 11 L5.5 8.3 Q7.1 8.3 7.1 9.65 Q7.1 11 5.5 11 M8 11 L8 8.3 L9.3 8.3 M8 9.6 L9 9.6" stroke="#fff" stroke-width="0.6"/></svg>
<div class="t" style="left:1649.65px;top:916.01px;font-size:14.39px;font-weight:normal;color:#2f8fdc;transform:scaleX(1.0500);">685</div>
<div style="position:absolute;left:370px;top:910px;width:1368px;height:6px;background:linear-gradient(180deg,rgba(0,0,0,0) 0,rgba(0,0,0,0.05) 100%);-webkit-mask-image:linear-gradient(90deg,transparent 0,#000 120px)"></div>
<div style="position:absolute;left:1591px;top:335px;width:123px;height:166px;background:#fff;border-radius:0 0 6px 6px;box-shadow:0 3px 8px rgba(0,0,0,0.12)"></div>
<div class="t" style="left:1626.32px;top:344.16px;font-size:14.53px;font-weight:normal;color:#6b6b6b;transform:scaleX(1.0183);">Edit</div>
<div class="t" style="left:1626.68px;top:376.16px;font-size:14.53px;font-weight:normal;color:#6b6b6b;transform:scaleX(1.1282);">Comment</div>
<div class="t" style="left:1626.27px;top:408.16px;font-size:14.53px;font-weight:normal;color:#6b6b6b;transform:scaleX(1.0604);">History</div>
<div class="t" style="left:1627.50px;top:440.16px;font-size:14.53px;font-weight:normal;color:#6b6b6b;transform:scaleX(1.0906);">Award test</div>
<div class="t" style="left:1626.24px;top:472.16px;font-size:14.53px;font-weight:normal;color:#6b6b6b;transform:scaleX(1.0799);">Delete</div>
<svg style="position:absolute;left:1603px;top:346px;" width="16" height="16" viewBox="0 0 16 16" fill="none"><path d="M11.2 2.2 L13.8 4.8 L5.6 13 L2.2 13.8 L3 10.4 Z M9.6 3.8 L12.2 6.4" stroke="#4a4a4a" stroke-width="1.3" stroke-linejoin="round"/></svg>
<svg style="position:absolute;left:1603px;top:378px;" width="16" height="16" viewBox="0 0 16 16" fill="none"><path d="M2.6 3.4 Q2.6 2 4 2 L12 2 Q13.4 2 13.4 3.4 L13.4 9 Q13.4 10.4 12 10.4 L7 10.4 L4 13 L4.2 10.4 Q2.6 10.2 2.6 9 Z M5.2 5.2 L10.8 5.2 M5.2 7.4 L8.4 7.4" stroke="#4a4a4a" stroke-width="1.3" stroke-linejoin="round"/></svg>
<svg style="position:absolute;left:1603px;top:410px;" width="16" height="16" viewBox="0 0 16 16" fill="none"><path d="M10.4 8 L12.2 8 L12.2 3.4 Q12.2 2 10.8 2 L4 2 Q2.6 2 2.6 3.4 L2.6 12.4 Q2.6 13.8 4 13.8 L8 13.8 M5 5 L9.8 5 M5 7.4 L7.4 7.4" stroke="#4a4a4a" stroke-width="1.3" stroke-linecap="round"/><circle cx="11.6" cy="12" r="3.3" fill="#4a4a4a"/><path d="M11.4 10.4 L11.4 12.2 L12.6 13" stroke="#fff" stroke-width="0.8"/></svg>
<svg style="position:absolute;left:1603px;top:442px;" width="16" height="16" viewBox="0 0 16 16" fill="none"><path d="M6 3.6 L6 7.4 L2.6 12.8 Q2.2 14 3.4 14 L12.6 14 Q13.8 14 13.4 12.8 L10 7.4 L10 3.6 M5 3.6 L11 3.6 M4.2 10.6 L11.8 10.6" stroke="#4a4a4a" stroke-width="1.3" stroke-linejoin="round"/><circle cx="7" cy="1.6" r="0.6" fill="#4a4a4a"/><circle cx="9" cy="1" r="0.6" fill="#4a4a4a"/></svg>
<svg style="position:absolute;left:1603px;top:474px;" width="16" height="16" viewBox="0 0 16 16" fill="none"><path d="M2.4 4.2 Q8 2.4 13.6 4.2 M6 2.8 Q6 1.4 8 1.4 Q10 1.4 10 2.8 M3.6 5.4 L4.6 13.2 Q4.8 14.4 6 14.4 L10 14.4 Q11.2 14.4 11.4 13.2 L12.4 5.4 M6.6 7.2 L6.6 12 M9.4 7.2 L9.4 12" stroke="#4a4a4a" stroke-width="1.3" stroke-linecap="round" stroke-linejoin="round"/></svg>
<div style="position:absolute;left:1679.2px;top:299.8px;width:38.8px;height:37.2px;box-sizing:border-box;border:5px solid #e09254;box-shadow:3px 4px 5px rgba(0,0,0,0.38), inset 2px 3px 5px rgba(0,0,0,0.40)"></div>
<div style="position:absolute;left:1594px;top:336.2px;width:85px;height:35.8px;box-sizing:border-box;border:5px solid #e09254;box-shadow:3px 4px 5px rgba(0,0,0,0.38), inset 2px 3px 5px rgba(0,0,0,0.40)"></div>
<div style="position:absolute;left:1738px;top:0px;width:16px;height:916px;background:#f1f1f1"></div>
<div style="position:absolute;left:1739.5px;top:17px;width:13px;height:724px;background:#c1c1c1"></div>
<svg style="position:absolute;left:1740px;top:3px;" width="12" height="10" viewBox="0 0 12 10" fill="none"><path d="M2 8 L6 3.5 L10 8 Z" fill="#a3a3a3"/></svg>
<svg style="position:absolute;left:1740px;top:902px;" width="12" height="10" viewBox="0 0 12 10" fill="none"><path d="M2 2 L6 6.5 L10 2 Z" fill="#505050"/></svg>
</body></html>
